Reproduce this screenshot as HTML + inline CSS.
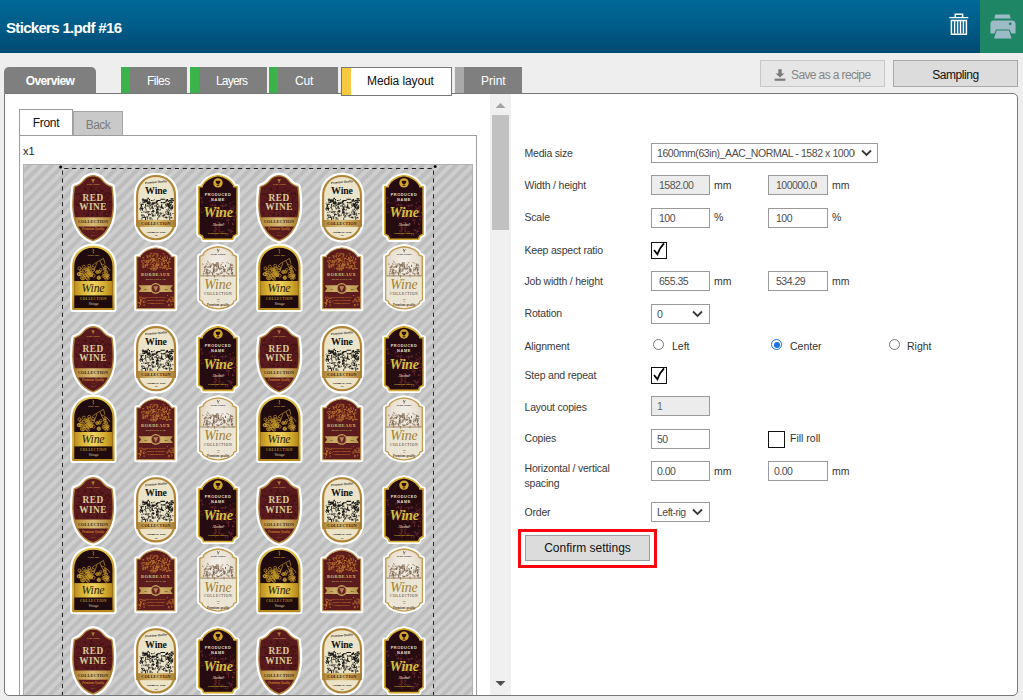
<!DOCTYPE html>
<html lang="en"><head><meta charset="utf-8"><title>Stickers 1.pdf #16</title>
<style>
*{box-sizing:border-box}
html,body{margin:0;padding:0}
body{width:1023px;height:700px;overflow:hidden;background:#eeeeee;font-family:"Liberation Sans",sans-serif;color:#1a1a1a;position:relative}
.abs{position:absolute}
#hdr{position:absolute;left:0;top:0;width:1023px;height:53px;background:linear-gradient(#006998 0%,#005d8a 45%,#004a72 100%)}
#title{position:absolute;left:6px;top:17.5px;font-size:15px;font-weight:bold;color:#fff;letter-spacing:-0.68px;white-space:nowrap;line-height:20px}
#printbtn{position:absolute;left:980px;top:0;width:43px;height:53px;background:#1e8664}
.tab{position:absolute;top:67px;height:26px;background:#7f7f7f;color:#fff;font-size:12px;line-height:28px;text-align:center;white-space:nowrap;letter-spacing:-0.6px}
.tab.tl{text-align:left;padding-left:26px}
.tab i{position:absolute;left:0;top:0;width:9px;height:100%;background:#3bb34a}
#panel{position:absolute;left:4px;top:93px;width:1014px;height:603px;background:#fff;border:1px solid #777;border-radius:0 5px 5px 5px;overflow:hidden}
.btn{position:absolute;border:1px solid #b4b4b4;background:#dcdcdc;font-size:12px;text-align:center;white-space:nowrap;color:#111}
.lbl{position:absolute;left:524.5px;font-size:10.5px;color:#3a3a3a;white-space:nowrap;line-height:14px;letter-spacing:-0.2px}
.inp{position:absolute;height:20px;width:59px;border:1px solid #9a9a9a;background:#fff;font-size:10.5px;color:#4d4d4d;line-height:18px;padding-left:7px;white-space:nowrap;overflow:hidden;letter-spacing:-0.5px}
.inp.dis{background:#ececec;color:#555}
.unit{position:absolute;font-size:10.5px;color:#333;line-height:14px}
.chk{position:absolute;width:16px;height:17px;border:1.5px solid #111;background:#fff}
.radio{position:absolute;width:11px;height:11px;border:1px solid #777;border-radius:50%;background:#fff}
.sheet{position:absolute;display:block}

</style></head>
<body>
<div id="hdr">
  <div id="title">Stickers 1.pdf #16</div>
  <svg class="abs" style="left:947px;top:11px" width="24" height="26" viewBox="0 0 24 26">
    <g fill="none" stroke="#fff" stroke-width="1.6">
      <path d="M2.3 6.6H21.3" stroke-width="1.3"/>
      <path d="M8.2 6.2V3.2H15.6V6.2" stroke-width="1.5"/>
      <path d="M4.4 9.4H19.4V23.2H4.4Z" stroke-width="1.5"/>
      <path d="M7.6 10V22.6M10.6 10V22.6M13.5 10V22.6M16.4 10V22.6" stroke-width="1.4"/>
    </g>
  </svg>
  <div id="printbtn">
    <svg class="abs" style="left:9px;top:13px" width="28" height="28" viewBox="0 0 28 28">
      <g fill="#9dbac7">
        <path d="M6.3 1.4H20.6L21.6 5.6H5.3Z"/>
        <path d="M4.6 7.4H22.6Q26.6 7.4 26.6 11.6V20.6H22.4L20.6 16.6H7L5.4 20.6H1.4V11.6Q1.4 7.4 4.6 7.4Z"/>
        <path d="M7.6 17.4H20L22.6 25.6H5Z"/>
      </g>
      <circle cx="21.2" cy="10.8" r="1.4" fill="#1e8664"/>
    </svg>
  </div>
</div>

<!-- top tabs -->
<div class="tab" style="left:4px;width:92px;border-radius:5px 5px 0 0;font-weight:bold;letter-spacing:-0.58px" id="t-over">Overview</div>
<div class="tab tl" style="left:121px;width:66px;letter-spacing:-0.55px"><i></i>Files</div>
<div class="tab tl" style="left:190px;width:77px;letter-spacing:-0.8px"><i></i>Layers</div>
<div class="tab tl" style="left:269px;width:69px;letter-spacing:-0.2px"><i></i>Cut</div>
<div class="tab tl" style="left:455px;width:67px;letter-spacing:0"><i style="background:#a9a9a9"></i>Print</div>

<div class="btn" style="left:760px;top:60px;width:125px;height:27px;line-height:29px;background:#e6e6e6;border-color:#c9c9c9;color:#858585;text-align:left;padding-left:30px;letter-spacing:-0.62px">
  <svg class="abs" style="left:13px;top:8px" width="12" height="13" viewBox="0 0 12 13"><path d="M4.3 0.3H7.7V4.4H10.4L6 8.6L1.6 4.4H4.3Z" fill="#7a7a7a"/><rect x="0.6" y="9.6" width="10.8" height="2.2" fill="#7a7a7a"/></svg>Save as a recipe</div>
<div class="btn" style="left:893px;top:60px;width:125px;height:27px;line-height:29px;border-color:#a8a8a8;letter-spacing:-0.45px">Sampling</div>

<div id="panel">
  <!-- coordinates inside panel are offset by (-5,-94) : use inner wrapper -->
  <div class="abs" style="left:-5px;top:-94px;width:1023px;height:700px">
    <!-- inner preview box -->
    <div class="abs" style="left:19px;top:135px;width:458px;height:600px;border:1px solid #9c9c9c;background:#fff"></div>
    <div class="abs" style="left:19px;top:109px;width:54px;height:26px;border:1px solid #9c9c9c;border-bottom:none;background:#fff;font-size:12px;line-height:27px;text-align:center;color:#111;letter-spacing:-0.3px">Front</div>
    <div class="abs" style="left:73px;top:111px;width:50px;height:24px;border:1px solid #a6a6a6;border-bottom:none;background:#c9c9c9;font-size:12px;line-height:27px;text-align:center;color:#7d7d7d;letter-spacing:-0.5px">Back</div>
    <div class="abs" style="left:23px;top:143px;font-size:11px;line-height:16px;color:#222">x1</div>
    <svg class="sheet" width="450" height="540" viewBox="0 0 450 540" style="left:23px;top:164px">
<defs><linearGradient id="g1" x1="0" y1="0" x2="1" y2="0"><stop offset="0" stop-color="#a87b2f"/><stop offset="0.18" stop-color="#c39a4c"/><stop offset="0.5" stop-color="#d8bb78"/><stop offset="0.82" stop-color="#c0964a"/><stop offset="1" stop-color="#a3762c"/></linearGradient><linearGradient id="g2" x1="0" y1="0" x2="1" y2="0"><stop offset="0" stop-color="#b98a1e"/><stop offset="0.2" stop-color="#d8b233"/><stop offset="0.5" stop-color="#efd462"/><stop offset="0.8" stop-color="#d4ac30"/><stop offset="1" stop-color="#b48519"/></linearGradient><linearGradient id="g3" x1="0" y1="0" x2="1" y2="0"><stop offset="0" stop-color="#b89349"/><stop offset="0.5" stop-color="#d8c07e"/><stop offset="1" stop-color="#b89349"/></linearGradient><linearGradient id="g4" x1="0" y1="0" x2="0" y2="1"><stop offset="0" stop-color="#e6c54a"/><stop offset="0.35" stop-color="#c99b22"/><stop offset="0.7" stop-color="#d8b233"/><stop offset="1" stop-color="#b98a1e"/></linearGradient><radialGradient id="beige" cx="0.5" cy="0.3" r="0.6"><stop offset="0" stop-color="#f4f0e9"/><stop offset="0.6" stop-color="#e9e1d3"/><stop offset="1" stop-color="#d9cdb9"/></radialGradient><pattern id="hatch" width="7.935" height="8" patternUnits="userSpaceOnUse" patternTransform="rotate(45) translate(-0.4 0)"><rect width="8" height="8" fill="#bdbdbd"/><rect width="3.97" height="8" fill="#cecece"/></pattern></defs>
<rect width="450" height="540" fill="url(#hatch)"/>
<path d="M0.5 540V0.5H449.5V540" fill="none" stroke="#b2b2b2" stroke-width="1"/>
<g transform="translate(46.3 9.3)"><path d="M23.8 2.3C19.5 2.5 16.3 4.6 14.4 7C12.6 9.4 9.5 12 5 13.4C4.1 19 3.6 26 3.6 32C3.6 48 10 63 23.8 67.4C37.6 63 44 48 44 32C44 26 43.5 19 42.6 13.4C38.1 12 35 9.4 33.2 7C31.3 4.6 28.1 2.5 23.8 2.3Z" fill="#fff" stroke="#fff" stroke-width="6.0" stroke-linejoin="round"/><path d="M23.8 2.3C19.5 2.5 16.3 4.6 14.4 7C12.6 9.4 9.5 12 5 13.4C4.1 19 3.6 26 3.6 32C3.6 48 10 63 23.8 67.4C37.6 63 44 48 44 32C44 26 43.5 19 42.6 13.4C38.1 12 35 9.4 33.2 7C31.3 4.6 28.1 2.5 23.8 2.3Z" fill="#581a1c" stroke="#b3853a" stroke-width="1.4" stroke-linejoin="round"/><path d="M22.1 30.2l-0.1 0M26.8 19.4l1.9 0M33.9 16.7l0 1M34.4 34.1l0 2.6M39.8 33l1.1 0M7 29.3l0 1.1M14.8 14.9l1.6 0M35.6 29.1l1.7 0M29.4 27.3l0 2.6M40.9 38.4l-0.7 -1M16.5 16l-0.4 1.3M19.8 41.8l-1.8 -1.1M37.9 27.6l-0.4 -1.6M28.2 36.6l0 1M18 42l-1.4 -0.9M10 15.7l-1.2 0.2M21.9 19.5l-1.3 0.5M10.5 26.2l0 1.3M40 37.3l0 2.4M13.8 25.4l0.5 -1.5M40.6 20.2l0 2.2M17.8 22.6l0 1M26.6 21l1.5 0M22.1 41.8l1.8 0M36.4 19.3l0 2.4M34.7 21.2l0 2.1M38.9 19.7l1.4 0.4M21 17l0 2.5M14.7 34.4l0 2.3M27.1 22.5l0 2.1M8.9 20.6l2.3 0M27.7 22.1l-1.1 -1.8M15.8 26.9l0 1.1M19.2 30.6l0 1.5M37.2 42.4l2 0M26.7 18.1l0 0.8M37.9 34.3l-1.7 0.5M23.1 35.2l0 2.6M9.1 29.8l1.5 0.9M30.8 37l-0.5 0.7M37.6 39.3l2.2 0M36.3 30.6l1.5 0M26.6 31.7l0 2M40.8 39.5l-0.4 0.9M26.5 26.8l-1.5 0.9M7.5 31.4l1.2 0M30.6 28.4l2.5 0M15.3 14.3l0 2M13.5 18.9l0.6 -0.2M37.3 23.5l1.2 0M21.4 37.4l1.4 -0.4M26.6 23.2l0 1.7M35.4 38.6l1.6 -0.8M12.3 27.1l0 1.2M20.8 32.1l1.4 0M35.4 42.5l0.9 0M7.6 39.3l0 2.1M26.2 23l-1.8 -1.3M22.2 14.7l-1 -1.3M8.1 32.2l1.9 0M29.1 37.4l0.7 -1.1M22.9 19.2l0 1.6M31.1 19.2l0 1.4M30.6 29.1l2.2 0M20.1 37l-1.5 1.6M31.4 17.8l1.9 0M37.9 24.9l2.4 0M34 41.4l2 0M13.6 34.9l0.5 0.8M13.9 40.1l1.7 0.1M33.8 23.3l1.3 -0.6M9.4 26.8l2.2 0M23.3 14.8l-1.6 1.1M12.5 23.7l-1.3 -1.3M24.3 35l0.7 1.6M23.5 41.5l0 1.2M24.7 22.4l0.5 0.1M35.6 30.2l0 1.5M35.7 40.1l0 2.3M39.9 29.2l1.2 0M25 28.6l0.8 0M39.9 29l2.2 0M25.9 28.2l0.9 0M25.1 26l1.5 -0.8M22.8 17.7l2.3 0M37.6 27.8l0 1.1M27.8 40.8l0 2.2M7.3 19.6l0 2M17.6 24.3l1 0M31.7 17.6l1.3 0M13.3 29.4l1.5 0M20.8 29.4l0 1.2M28.3 32.5l2.3 0M27.6 38.8l0 2.1M34.5 40.2l0 1.4M38.3 20.3l1.4 -1.3M14.8 35.1l0 1M35.2 26.2l-1.4 -0.4M30.1 14.5l0 2M37.9 42.1l0 1.7" stroke="#340e10" stroke-width="1.2" fill="none" opacity="0.8"/><path d="M4.6 43.9H43C42.4 47.2 41.4 50.3 40 53.1H7.6C6.2 50.3 5.2 47.2 4.6 43.9Z" fill="url(#g1)"/><text x="23.8" y="50" font-family="'Liberation Serif',serif" font-size="4.2" fill="#3b2412" text-anchor="middle" font-weight="bold" letter-spacing="0.2">COLLECTION</text><path d="M21.9 6H25.7L24.3 8.2V9.4H23.3V8.2Z" fill="#b8822f"/><text x="23.8" y="12.2" font-family="'Liberation Serif',serif" font-size="2.6" fill="#c08a3a" text-anchor="middle" font-weight="bold">Wine House</text><text x="23.8" y="14.2" font-family="'Liberation Serif',serif" font-size="1.8" fill="#c08a3a" text-anchor="middle">· · · ·</text><text x="23.8" y="27.3" font-family="'Liberation Serif',serif" font-size="9.3" fill="#dccb98" text-anchor="middle" font-weight="bold" letter-spacing="0.45">RED</text><text x="23.8" y="37" font-family="'Liberation Serif',serif" font-size="9.3" fill="#dccb98" text-anchor="middle" font-weight="bold" letter-spacing="0.45">WINE</text><text x="23.8" y="57" font-family="'Liberation Serif',serif" font-size="3.1" fill="#c77d2d" text-anchor="middle" font-weight="bold" font-style="italic">Premium Quality</text><text x="23.8" y="59.8" font-family="'Liberation Serif',serif" font-size="2.2" fill="#c77d2d" text-anchor="middle">• • •</text><text x="23.8" y="62.4" font-family="'Liberation Serif',serif" font-size="2.1" fill="#c77d2d" text-anchor="middle">2019</text></g>
<g transform="translate(110.8 9.2)"><path d="M3.3 22.8C3.3 10.6 11.4 2.8 22.25 2.8C33.1 2.8 41.2 10.6 41.2 22.8V46C41.2 58.2 33.1 66 22.25 66C11.4 66 3.3 58.2 3.3 46Z" fill="#fff" stroke="#fff" stroke-width="6.6" stroke-linejoin="round"/><path d="M3.3 22.8C3.3 10.6 11.4 2.8 22.25 2.8C33.1 2.8 41.2 10.6 41.2 22.8V46C41.2 58.2 33.1 66 22.25 66C11.4 66 3.3 58.2 3.3 46Z" fill="#ece4c8" stroke="#b08335" stroke-width="2.1" stroke-linejoin="round"/><path d="M11.1 39.2l1.9 0M12.8 41.3l0.1 0M13.5 25.1l0 2.2M7.9 41.4l0 1.4M7 45.5l1.7 0.5M6.7 31.8l1.1 0M37.4 32.6l0 2.8M9.8 44.1l2.1 0M17.1 35l0 0.9M34.5 29.8l-1.3 2.1M35.5 40.5l0.4 1M9.7 34.8l-1.3 1.9M35.2 33.4l0 1.9M18.5 45.5l0 0.9M8.7 39.8l0 0M24 40.4l0 2.3M24.2 37.8l0 1.2M17.2 44.1l0 2.2M15.8 27.1l0 2.8M31.6 32.7l2.4 0M35.6 44.7l3.2 0M37.7 37.2l0 -0.6M13.9 43l0 1M32.5 40.9l2.8 0M7.3 30.3l0 1.8M11.3 26.4l0 3M38.4 40.4l1.4 0M37.6 35.8l-2.1 -1.3M33.6 41.4l0.5 -0.3M25 42.5l0 2.1M14.8 40.8l0 2.4M37.5 25.5l2.3 0M34 37l0 1.8M37.6 43.7l0 1M8.7 25.5l1.1 0M34.6 38.5l0 2.1M16.4 35.2l0 1.2M11.7 32.8l0.2 -2M29.3 43l1.3 -2.2M21.1 26.3l-1.5 0.9M14 39.4l0 0.9M18.6 31.4l-0.9 0M23.9 44.5l0 2.2M22.6 40.1l-0.9 0.9M23.2 36.5l0 2.8M38.2 32.3l0 3.2M9.2 26.6l0 2.8M31 34.2l0.8 0M27.1 34.1l1.7 0M19 29.6l0 1.8M13.9 39.5l1 -0.2M13.5 32.9l2.3 0M37.8 26.8l2 0M29.6 43.3l0.6 1.2M27.9 42.7l2.4 0M13.8 43.9l0 2.3M33.1 44.9l-2.2 -0.8M16 33.1l0 2.1M8.3 31.2l1.1 -0.2M9.2 44.7l-1.3 -0.7M27 39l0 3.1M16.4 30.2l-1.6 0.8M12.3 37.3l0 1.7M37 34.6l2.3 0M15 28.6l0 1.5M11.9 44.8l0 2.7M36.8 39.5l0 2M6.9 37.5l-1.2 -2.2M23.8 26.9l0 1.9M35.5 32.6l0 2.7M33.1 35.9l0 1.3M19.1 36.4l0 2.7M33.8 44.1l-2.2 0.4M8.3 43.5l1.2 -1.4M7.6 41.8l2.3 0M21.3 41.5l0 1.4M17.4 31.1l2.9 0M8 26.4l2.4 0M11.9 30.6l0 0.9M22.1 39l1.2 0M9.1 44.2l1.8 0M28.7 40l1 0M33.2 29.4l0 1.6M23.4 37.9l0 2.5M22.1 28.3l1.4 1.8M28.3 29.5l1.8 0.1M35.9 45l0 3.1M36.9 41.4l0 1.6M26.1 37.5l0.7 -1.5M36.7 36l-1.3 2.2M24.1 41l1.7 -0.6M8.4 33.4l0 2.1M32.8 32.5l0 0.9M19.7 37l0 2.4M12.6 27.2l0.1 1.8M22.8 27.5l0 1.8M27 40.9l0.7 -1.1M20 32.8l1.4 0M23.6 34.5l0 2.8M25.2 41.5l1 2.2M18.2 33.1l0 2.4M25 36.9l-1.4 -1.2M30.1 41.7l0.9 0M18 42l1.9 0M18.6 37.9l2.5 0M34.5 40.5l0 1.4M31.7 41.3l-1.3 1.6M35.3 26.6l0 2.3M10.5 42.1l0 2.4M15.5 29.5l0 2M29.4 29.5l1.6 0M27.3 32.6l0 1.1M7.5 39.3l1.1 0M35 38.5l0 2.5M25.5 34.1l3.1 0M18.1 38.1l1.7 0M17.2 40.6l1.9 0M22.8 29.6l-2.2 0.6M20.8 29.6l2.2 0M8.5 35.1l0 2.7M16.5 31.8l0 0.9M11.8 28.1l2.8 0M13 27.3l1.1 0M19.1 40.7l0 2.5M23.6 26.8l0 2.2M8.8 29.2l2.8 0M23 38.7l0 1.5M16.2 43.8l0 2.7M6.7 35.3l1.2 0.4M11.7 44.1l0 3.1M31.5 39.8l1.2 0M17 38.7l1.7 0M32.4 26.1l0 1M16.4 41.3l-1.6 -0.9M9.3 38.6l1.4 0M18.1 42.8l2.5 0M26.6 34.8l1.7 0M12.2 35.2l0 1.6M11.8 43.8l1.3 0M6.7 29.4l-0.7 0.7M13.3 38.4l2.6 0M23.3 32.7l0 2.2M33.4 39.2l1.6 0M35.4 42.4l0 2.4M31.4 38.9l1.7 -1.1M38.9 31.7l0 3.1M11.2 33.1l1.5 0M14.5 41.4l2.6 0M32 43l1.4 2.1M22.3 39.5l3.1 0" stroke="#151515" stroke-width="0.8" fill="none"/><path d="M37.2 27l0 2.8M12 26.8l1.5 0M35 27.9l-0.7 0.4M36.4 32.7l0.8 -1.8M34.7 31.7l0 1.2M33.7 31.6l1.1 1.8M24.5 32.8l1.3 0M37.2 28.8l1.8 0.6M10.6 34.2l1.2 0M7.6 31.1l0 2.7M22.5 30.9l2.1 0M35.9 28.7l0 2M15.7 31.8l1.7 0M27.9 31l0 2.8M17.6 30l2.7 0M37 30.9l1 0M35.2 27.3l1.5 0M16.7 29.3l0 0.9M23.5 33.9l1.2 0M28.6 26l2.5 0M36 30.3l0 0.1M25.1 35.9l-0.1 0.9M27 29.2l1.3 0.4M36.7 25.7l2.1 0M17.1 27.3l1.7 0M14.8 25.9l-0.6 -1.5M13.1 28.2l-1.3 -0.9M9.2 30.4l0 1.5M30 35.2l-1.8 -0.5M33.7 25.8l0 1.8M18.5 33.4l-0.1 -1M13.5 28.3l0 2.1M11.1 34.8l0.9 0M22.3 31.8l0 1.8M7 33.5l0 2.1M38.1 34.4l0 1.9M10.6 29.1l1.2 -1.9M18.4 32.2l0 2.4M35.1 31.3l0 2.5M22.7 27.5l0 1.1M33.3 30.9l2.4 0M37.7 27.5l2.5 0M30.8 29.6l1.2 0M11.3 26l0 1.3M22.9 35.7l0 1.9M34.2 31.8l2.3 0M6.7 35.5l2.4 0M32.9 26.5l0 1.2M22.5 35.4l-0.3 0.5M30.1 29l1.7 0.9M35.4 33.9l1.4 0M15.2 28l0 2.7M15.7 25.8l0 1M20.5 29l0 1.8M19.5 29.2l-0.8 0.2M34.6 35.6l0 0.9M37 30.9l0 1.1M13.8 28.8l0 0.9M38.4 34.1l0 1.8M32.1 30.8l0 1.5M18.4 35.1l1.7 0M26.6 26l2.4 0M27.9 29.3l0 0.8M8.7 27.1l2.4 0M13.1 30.5l2.1 0M6.7 35.2l1.4 0M13.8 32.7l-0.6 -0.4M24.2 27.3l2.6 0M24.1 34.1l0 2.5M31.5 27.9l2.2 0" stroke="#151515" stroke-width="1.1" fill="none"/><rect x="2.4" y="46.7" width="39.7" height="7" fill="url(#g1)"/><text x="22.2" y="51.7" font-family="'Liberation Serif',serif" font-size="4.1" fill="#2e1c0c" text-anchor="middle" font-weight="bold" letter-spacing="0.15">COLLECTION</text><text x="22.2" y="9.8" font-family="'Liberation Serif',serif" font-size="3.1" fill="#1a1a1a" text-anchor="middle" font-weight="bold" font-style="italic" transform="rotate(-5 22 9)">Premium Quality</text><text x="22.2" y="21.1" font-family="'Liberation Serif',serif" font-size="9.8" fill="#111" text-anchor="middle" font-weight="bold" letter-spacing="-0.1">Wine</text><text x="22.2" y="59.4" font-family="'Liberation Serif',serif" font-size="2.9" fill="#1a1a1a" text-anchor="middle" font-weight="bold" font-style="italic">Vintage of Wine</text><text x="22.2" y="63.2" font-family="'Liberation Serif',serif" font-size="2.6" fill="#1a1a1a" text-anchor="middle" font-weight="bold">12</text></g>
<g transform="translate(172.8 8.9)"><path d="M22.2 2.6C15.4 3.6 9.4 7.4 6.4 12.4V13.8H3V61.2L6.6 63.4L7.6 66.4H36.8L37.8 63.4L41.4 61.2V13.8H38V12.4C35 7.4 29 3.6 22.2 2.6Z" fill="#fff" stroke="#fff" stroke-width="5.2" stroke-linejoin="round"/><path d="M22.2 2.6C15.4 3.6 9.4 7.4 6.4 12.4V13.8H3V61.2L6.6 63.4L7.6 66.4H36.8L37.8 63.4L41.4 61.2V13.8H38V12.4C35 7.4 29 3.6 22.2 2.6Z" fill="#260c11" stroke="#d6aa2c" stroke-width="1.6" stroke-linejoin="round"/><path d="M16.3 30.9l0 2.2M19.3 30.9l0 2.3M19.5 52.9l1.1 0M28.9 42.7l2.8 0M18.2 27.7l-0.4 -1.2M23.9 39.8l-1.1 -1.1M30 46.2l1.3 -0.6M20.9 56.3l-1.8 0.9M36.8 49.8l0 2.4M33.5 33.8l1.2 0M17 38.8l0 1.6M31.5 56.3l1.9 1.9M35 37.7l0 2M29.1 50.6l0 1.2M38.1 48l1 0M25.6 58.9l2.8 0M20.7 42.9l-0.2 1.1M29.5 31.1l0 2.8M18.9 33.8l0 2.2M36.5 43.6l2.4 0M22.7 40l2.1 0M16.9 30.9l0 2.3M32.6 61.1l-1 1M39.6 39.2l0 1.6M22.8 33.2l0 1M36.8 28.7l1.2 0M20.6 55.7l0 1.2M26.9 51.3l2.5 0M25.6 45.3l-0.2 0.9M27.2 31.7l0 2.4M33.9 60l2 0M20 56.9l0 1.6M19.4 40.3l0 1.7M33.1 46l0 2.4M33.6 56l0 2M37.5 36.1l0 2.4M24.7 41l-0.5 -1.2M21.1 39.1l1.5 0M34.5 29.3l0 2M27.5 44.5l-0.9 -1.2M16.8 43.9l0 1.7M16.1 27l0 2.3M23.2 58.9l1.6 0M34.7 35.2l2.5 0M29 38.2l0 1.9M20.5 40.1l2.7 0M32.2 45.2l-0.8 -0.4M32.3 46.4l0 1.6M35.8 35.5l-1.8 1.8M32.4 38.3l1.2 -1.7M22 44.2l-1.4 -1.8M23.5 28.6l1.9 0M26.6 31.9l0 2.4M26.6 43.8l2.2 0M37.6 55.9l-0.6 -1.3M18.2 57.1l0 1.9M37.8 38.3l0 1.6M38.7 50.9l-1.8 0.9M26.8 41.1l0.9 1.6M33.7 58.9l1.9 0M34.8 42.9l0 2M36.9 57.5l0 1.6M21.5 38.9l-0.3 -0.7M22.5 42.4l1.5 0M20.5 34.9l0 2.6M20.1 53.4l0 2.4M22.4 54.3l1 0M18.3 55l1.8 0M24.5 51.2l0.9 0M30.4 38l0.2 1.1M18.9 51.7l2.5 0M37.2 46.3l2.3 0M22.3 46.1l0.4 0.2M36.5 61.1l0 0.9M30.7 32.2l-0.1 0.1M35.6 57.4l0 1.7M20.3 43.1l0 2.6M24.5 40.6l1.3 -0.6M28 50.2l0 1.1M36.6 32.7l0.9 0.4M24.3 57l-1.7 1.6M31.3 37.1l0 1M35.5 56.7l0 1.2M17.8 41.5l0 0.9M23.1 55.7l0 1.6M28.3 32.7l0 0.9M19.5 61.1l0.8 1.6M23.8 35.7l0.4 1.7M24.6 41.5l1.5 -1.3M22.3 27.5l2.6 0M29.6 32.2l2.1 0M18.5 59l1.8 0M24.3 32.6l1.5 0M21.6 49.6l2.7 0M39.2 43.3l-0.5 -0.3M29.6 61.3l0 1.7M24.1 55.2l-0.1 -1.6M30.3 47.6l2.4 0M27.1 46.2l-1.9 -1M32.5 61.2l-0.9 1.9M22.7 42.8l0 2M25.4 51l-1.5 0.6M30.4 36.6l0 2.7M32.7 48.9l0 2.6M25.6 43.3l1.7 0M38.9 43.4l2.3 0M38.4 33l0 2.7M30.5 40l-1.5 -1M17.7 50.5l1.4 0M26.5 35.9l1 -0.5" stroke="#6d2a30" stroke-width="1" fill="none" opacity="0.9"/><path d="M6.3 27.4l0 2.6M13.4 35.5l0 1.8M19.3 32.4l1.5 -0.5M5 36.1l0 0.8M17.4 37.5l1.8 -1.2M6.4 25.9l-1.5 -1.3M5.3 24.8l0 1.5M7.8 29l-1.3 1.2M17.6 33.1l2.3 0M15 27.7l0 1.3M11.8 39.8l0.9 0M13.1 37l2.2 0M6.5 25l0.9 0M10.1 30.2l0 0.9M5.1 39.2l2.7 0M13.4 39.3l0.5 0.1M13.6 27.6l0 2.2M8.3 37.6l2 0M19 34.3l0 1.3M5 24.4l0.4 1.8M18.3 29.1l1.7 -0.2M6.4 29.1l0 1.5M6.4 35.4l-1.1 1.1M14.9 31.7l-0.5 1.3M5.6 39.4l0 0.8M20 35.5l2.3 0" stroke="#6d2a30" stroke-width="0.9" fill="none" opacity="0.8"/><circle cx="22.2" cy="10" r="4.7" fill="#d2a62a"/><path d="M19.9 7.8H24.5C24.5 10 23.6 10.9 22.6 11.2V12.6H23.6V13.2H20.8V12.6H21.8V11.2C20.8 10.9 19.9 10 19.9 7.8Z" fill="#260c11"/><text x="22.2" y="22.9" font-family="'Liberation Sans',sans-serif" font-size="3.9" fill="#e5dcc6" text-anchor="middle" font-weight="bold" letter-spacing="0.55">PRODUCED</text><text x="22.2" y="27.8" font-family="'Liberation Sans',sans-serif" font-size="3.9" fill="#e5dcc6" text-anchor="middle" font-weight="bold" letter-spacing="0.6">NAME</text><text x="22.4" y="44.6" font-family="'Liberation Serif',serif" font-size="14.2" fill="#d8bf3c" text-anchor="middle" font-weight="bold" font-style="italic" letter-spacing="-0.25">Wine</text><text x="22.2" y="53" font-family="'Liberation Serif',serif" font-size="3.4" fill="#d9cdbd" text-anchor="middle" font-weight="bold" font-style="italic">Alcohol</text><text x="22.2" y="60.7" font-family="'Liberation Serif',serif" font-size="2.8" fill="#d2a62a" text-anchor="middle" font-weight="bold">Premium quality</text></g>
<g transform="translate(47 79.8)"><path d="M3.2 23C3.2 10.4 12.4 2.9 23.35 2.9C34.3 2.9 43.5 10.4 43.5 23V65.2H3.2Z" fill="#fff" stroke="#fff" stroke-width="6.2" stroke-linejoin="round"/><path d="M3.2 23C3.2 10.4 12.4 2.9 23.35 2.9C34.3 2.9 43.5 10.4 43.5 23V65.2H3.2Z" fill="#1f0b0d" stroke="url(#g4)" stroke-width="2.1" stroke-linejoin="round"/><g fill="none" stroke="#c79a2a" stroke-width="0.65"><circle cx="13.9" cy="22.9" r="1.5"/><circle cx="17.8" cy="30.7" r="1.5"/><circle cx="17.3" cy="25.5" r="1.5"/><circle cx="20.8" cy="28.8" r="1.5"/><circle cx="21.7" cy="30.2" r="1.5"/><circle cx="22.9" cy="26.5" r="1.5"/><circle cx="19.3" cy="29.6" r="1.5"/><circle cx="20.7" cy="31.4" r="1.5"/><circle cx="8.9" cy="30.4" r="1.5"/><circle cx="18.6" cy="29.3" r="1.5"/><circle cx="23" cy="24.1" r="1.5"/><circle cx="9.3" cy="30.4" r="1.5"/><circle cx="14.4" cy="30.3" r="1.5"/><circle cx="16.1" cy="25.7" r="1.5"/><circle cx="15.4" cy="31.4" r="1.5"/><circle cx="14.8" cy="31.7" r="1.5"/><circle cx="17" cy="34" r="1.5"/><circle cx="19.3" cy="24.5" r="1.5"/><circle cx="23.6" cy="31.8" r="1.5"/><circle cx="8.6" cy="30.2" r="1.5"/><circle cx="19.3" cy="31.7" r="1.5"/><circle cx="18.4" cy="26.1" r="1.5"/><circle cx="11.2" cy="26.4" r="1.5"/><circle cx="20.8" cy="30.6" r="1.5"/><circle cx="14.5" cy="26.7" r="1.5"/><circle cx="10.6" cy="30.7" r="1.5"/><circle cx="11.9" cy="34.3" r="1.5"/><circle cx="12.9" cy="34.7" r="1.5"/><circle cx="13.9" cy="34" r="1.5"/><circle cx="21.1" cy="31.4" r="1.5"/><circle cx="11.1" cy="28.6" r="1.5"/><circle cx="9.5" cy="24.6" r="1.5"/><circle cx="11" cy="30.5" r="1.5"/><circle cx="18.2" cy="31.1" r="1.5"/><circle cx="17.3" cy="27.5" r="1.5"/><circle cx="18" cy="35" r="1.5"/><circle cx="18.9" cy="27.7" r="1.5"/><circle cx="19.2" cy="22" r="1.5"/><circle cx="36.9" cy="32.9" r="1.3"/><circle cx="27.1" cy="28.4" r="1.3"/><circle cx="34.9" cy="25.8" r="1.3"/><circle cx="36.2" cy="35.1" r="1.3"/><circle cx="28.3" cy="34" r="1.3"/><circle cx="35.2" cy="33.6" r="1.3"/><circle cx="34.8" cy="25" r="1.3"/><circle cx="38" cy="31.3" r="1.3"/><circle cx="29.6" cy="28.2" r="1.3"/><circle cx="34.9" cy="23.8" r="1.3"/><circle cx="28.7" cy="27.8" r="1.3"/><circle cx="27.1" cy="28.1" r="1.3"/><circle cx="36.7" cy="31.6" r="1.3"/><circle cx="28.9" cy="33.2" r="1.3"/><circle cx="30.8" cy="26" r="1.3"/><circle cx="28.6" cy="34.2" r="1.3"/><circle cx="29.3" cy="34.3" r="1.3"/><circle cx="35.8" cy="28.7" r="1.3"/><circle cx="37.5" cy="31.9" r="1.3"/><circle cx="33.9" cy="29.6" r="1.3"/><circle cx="36.3" cy="28" r="1.3"/><circle cx="34.5" cy="31.8" r="1.3"/><circle cx="33.3" cy="32.4" r="1.3"/><circle cx="38" cy="34" r="1.3"/><path d="M22 22C26 18 30 17 33.5 14.6M30 17L33 24M27 19L24 27M31 20C35 21 38 23 40 27M33.5 14.6L35 20"/></g><rect x="4.2" y="37.2" width="38.3" height="14.4" fill="url(#g2)"/><text x="23" y="48.4" font-family="'Liberation Serif',serif" font-size="11.8" fill="#33200a" text-anchor="middle" font-style="italic" letter-spacing="-0.2">Wine</text><path d="M22.6 5.2C23.9 5.6 23.9 7 22.9 7.6C23.9 8.2 23.7 9.2 23.2 9.6" fill="none" stroke="#c79a2a" stroke-width="0.8"/><text x="23.4" y="11.8" font-family="'Liberation Serif',serif" font-size="2.9" fill="#c79a2a" text-anchor="middle" font-weight="bold">Wine Bar</text><text x="23.4" y="56.5" font-family="'Liberation Serif',serif" font-size="3.3" fill="#b8922a" text-anchor="middle" font-weight="bold" letter-spacing="0.45">COLLECTION</text><text x="23.4" y="61.4" font-family="'Liberation Serif',serif" font-size="3.3" fill="#d8c9a0" text-anchor="middle" font-style="italic">Vintage</text></g>
<g transform="translate(111.1 79.8)"><path d="M21.65 4C15 4.8 9.4 7.6 6.2 12V13H2.6V64.9H40.7V13H37.1V12C33.9 7.6 28.3 4.8 21.65 4Z" fill="#fff" stroke="#fff" stroke-width="5.0" stroke-linejoin="round"/><path d="M21.65 4C15 4.8 9.4 7.6 6.2 12V13H2.6V64.9H40.7V13H37.1V12C33.9 7.6 28.3 4.8 21.65 4Z" fill="#5c1b1c" stroke="#c6a05a" stroke-width="1.1" stroke-linejoin="round"/><path d="M14.2 16.8l0 2.3M13.8 17.7l-0.4 1.7M28.5 17.6l1.9 0M17.6 24.9l2.6 0M14.6 16.4l-1.2 0.4M17.8 21.5l1 -1.1M29.4 15.8l-0.1 1.5M31.3 22l1.1 0M19.2 11.9l-1.4 1.5M23.2 11.5l0 1.6M10.5 21.1l2.6 0M31.4 21.5l1.6 0.5M22.9 17.2l1.5 1.2M19.4 10l1.8 0M23.5 22.7l0 2.1M24.2 12.1l-1.6 -0.1M22.7 18.4l0.2 1.4M15.7 16.5l0 2M19.4 21.5l0 1.6M26.4 19.7l0.2 0M27.7 19.6l-0.1 -1.8M29.8 13.2l1.8 1M18.8 22.7l0 1.4M23.8 19.3l1.8 0M19 20.8l0 1.9M32.5 12.1l0.9 0M29.5 14l0 1.3M34.4 21l0 2.5M9.1 16.5l2.2 0M11.2 22.1l0 2.1M34.3 18.3l0 2M19.8 20.6l-1.4 0.2M25.9 23.8l1.9 0M29.6 11.2l0.3 0.5M11.5 17.2l1.2 0M34.7 22.5l0.9 0M21.9 17.9l0.6 0.4M22.1 24.6l-0.5 1.1M34.9 16.6l0 0.9M30.6 11.8l0 1.1M20.9 21.9l0.8 0M15.8 10l2.2 0M15.9 10.8l0 1.7M29.4 19.8l1.5 0M7.9 16.9l2 0M7.5 16.6l0 1.8M19.8 14l0 2.5M21.1 10.3l2.2 0M21.4 23.2l0.7 -1.7M18.8 17l0 1.7M26.6 20.9l0.9 -0.7M25 16.8l-1.4 -1.2M28.1 20.5l0 2.2M29.8 19.2l0.9 0M13.8 21.2l-1.2 -1.7M17.3 24l0 2.5M30.1 22.4l0.6 -1.1M19.7 15.1l1.4 0M13.5 12.2l0 2.1M21 8.7l0 1.1M27.4 22.3l-0.8 -0.3M13.8 19.5l0 2.2M20.8 17.6l1.5 -0.8M28.4 13.1l0 2.3M12.6 13.2l1.3 -0.4M28 15.1l0 1.8M12.1 12l2 0M13.5 12.2l1.3 0M23.5 19.7l0 2.4M21.4 13.5l1.8 -0.2M15.1 12.2l1.1 1.4M29 14.1l0 2M17.9 17.5l1.2 0M7.6 20.8l1 -0.6M16.8 18.9l0 2.1M22.3 17.3l-1.4 -1.1M22.4 22.6l1.4 -1.1M16.3 12.7l0 1.1M11.5 22l2.5 0M25.4 21l0.2 -1M19 15.9l0 1.8M29.7 14l0 1M17.7 11.9l2.5 0M13.8 14.4l1.1 0M32.6 24.7l0 1.5M23.4 21.9l-1.1 1.6M24.6 20.7l0 0.9M21.1 24.7l0 2.6M20.4 24.1l0 1.8M12.1 20.8l1.9 0M18.4 22.9l-1.7 0.2M13.4 23.9l1.1 0.6M33.4 12.7l0 2.4M26.2 13.4l0.6 -1.8M34.6 20.7l-1.5 -1.8M9.3 21.1l0 1.3M16.6 15.3l0 1M22.2 9.7l1.3 0M28.5 9.8l1.9 0M33.7 18.6l1.3 -1.4M8.5 21.9l0 1.7M16.4 11.2l0 1.6M31.2 12.3l0 1.9M32.4 15.4l0 2.4M10.3 18.3l1.7 0M19.1 10.5l1.4 0.4M16 20.1l0 1M24.7 18l-0.3 -1.4M23.7 9.5l0 2.6M18 14.5l-1.5 1M28.5 23.6l0 1.6M18 8.8l0 1.1M9.1 20.1l-0.4 1.2M31.5 22.3l0 1.4M26.6 17.6l0 0.8M15.7 15.5l0 1.3M24.6 15.5l0.4 -0.3M19.7 22.5l1.8 -0.2M13 16.8l1.6 0M9.9 16.8l0 0.9" stroke="#b06a28" stroke-width="0.8" fill="none"/><path d="M35.4 14.6l-0.1 1.6M19.1 24.5l0 2.6M19.3 16.1l0 1.9M8.5 18.4l0 0.9M12.4 16.6l0 2.2M19.4 23.8l1.4 1.6M23.9 21.7l0.2 -1.3M22.3 20l0 1M12.8 22l0.6 -0.3M8.3 14l1.8 0M20.5 16l0 1.1M11.2 20.8l0 1.8M19.7 20.2l1 -1.3M34.9 23.7l-0.2 1.6M30.7 16.7l2.3 0M29 24.3l2 0M9.7 21.6l0 2.1M33.2 18.2l0 0.9M22.2 15.8l0.4 0M26.6 15.7l0.9 0M23.1 23l0 2M35.8 17.7l0 1.3M31.2 14.9l-0.9 0.9M32.8 23.7l0 1.8M16.5 24l0 1.1M19.1 15l0 2.1M16.8 16.1l-0.9 1.1M27 20.3l1.8 0M31.5 21.9l0 2M22 24.5l0 1.6M35.1 14.8l1.5 0.4M9.1 22.8l0 1.7M30.8 17.6l0 1M17.3 15.2l2.3 0M9.1 20l1 -0.9M22.6 21.8l2.6 0M33.4 25l0 0.8M24.3 20.6l0 1.2M29.9 23.1l0 1M28 18.8l0 2.5M16.9 14.9l1.5 0M25.9 22.7l0 1.6M33.2 19.5l1.5 1.1M26.1 15.3l-0.7 -0.7M21.9 20.1l0.1 1.5M29.9 21.4l0 1.9M21.8 22.6l0 2.2M27.8 16l-0.1 -0.2M17.1 18.4l1.5 -0.1M22.7 19.3l0 2.4M19.5 14.3l0 1.3M29.9 16l0 2.4M16.2 24.6l0 1M13.5 18.5l1.4 0M35 24.8l2.6 0M32.1 25.1l1 0M23.7 14.6l2.6 0M18.8 21.8l0.8 -0.4M22.1 15.4l0.5 -0.6M19.8 23.7l0 1.2" stroke="#b87230" stroke-width="1" fill="none"/><text x="21.6" y="32.4" font-family="'Liberation Serif',serif" font-size="4.4" fill="#d8c070" text-anchor="middle" font-weight="bold" letter-spacing="0.5">BORDEAUX</text><text x="21.6" y="36" font-family="'Liberation Serif',serif" font-size="2.7" fill="#d8c070" text-anchor="middle" font-weight="bold" letter-spacing="0.1">WINE CELLAR</text><path d="M4.5 41.4H38.8L36.4 44.8L38.8 48.2H4.5L6.9 44.8Z" fill="url(#g3)"/><text x="11.2" y="45.9" font-family="'Liberation Serif',serif" font-size="2.8" fill="#4a2210" text-anchor="middle" font-weight="bold">19</text><text x="32.1" y="45.9" font-family="'Liberation Serif',serif" font-size="2.8" fill="#4a2210" text-anchor="middle" font-weight="bold">85</text><circle cx="21.65" cy="44.6" r="5.4" fill="#c9a85e"/><circle cx="21.65" cy="44.6" r="4.1" fill="#6a2024" stroke="#8d6a2c" stroke-width="0.5"/><path d="M19.2 42.4H24.1L21.65 47.6Z" fill="#b7835a"/><text x="21.6" y="54" font-family="'Liberation Serif',serif" font-size="2.4" fill="#c77a2c" text-anchor="middle" font-weight="bold" letter-spacing="0.1">PREMIUM WINE</text><text x="21.6" y="57.4" font-family="'Liberation Serif',serif" font-size="2.7" fill="#c77a2c" text-anchor="middle" font-weight="bold" font-style="italic">Finest Selection</text><text x="21.6" y="60.6" font-family="'Liberation Serif',serif" font-size="2.7" fill="#c77a2c" text-anchor="middle" font-weight="bold" font-style="italic">Grand Reserve</text><path d="M9.2 61.3l1.8 0M11.5 57.4l0.7 1.1M4.9 53.8l0.8 -0.7M10.1 53.8l0 1.4M6.3 53.4l1.7 0M7 58.9l-1.4 -0.7M5.3 59l1.4 0M6.4 60.1l-0.2 1M6.3 55.6l-0.8 -1.1M4.8 59l-1.4 -0.1M7.5 55.4l0 1.3M5.6 61.6l0 1.5M9.3 58.8l1.5 0M11.5 53.8l0 1.2M10.1 56.4l0 0.9M5.5 58.8l0 1.4M6.4 55.2l0 2.1M9.2 57.1l0 2M8.8 53.4l0 2.1M7 56.3l0 2M6.4 57.9l0.1 -0.4M6.5 59.2l0 1.7M38.1 53.4l1.5 0M38.4 56l1.6 0M34.1 61.5l0.7 -1.4M38.6 57.7l1.6 0M35.1 61.7l0 1M38.7 54.7l0 1.4M37.9 55.9l0 1.2M33 52.2l0.7 -1.1M33.1 62.2l-0.2 0.2M38.6 54.5l0.8 0M34.9 54.4l0 1.4M34.5 61.3l0 0.8M37.5 61.6l-0.6 -0.4M37 52.8l0 1.5M33 56.8l0 2.1M35 55.6l0 1.2M37.1 60.3l1.3 0.3M34.1 56.4l0 1.3M34.9 61l0.9 0M35.3 55.5l1 0.3M36.2 56.4l0 1.9M37 57.8l1 0.6" stroke="#c77a2c" stroke-width="0.8" fill="none"/></g>
<g transform="translate(173.3 80)"><path d="M21.75 2.8C15.4 3.5 10.3 5.7 7.3 9.1V10.7L3.5 12.3V55.9L6.3 57.3V58.9C9.3 61.9 14.4 64.2 21.75 64.8C29.1 64.2 34.2 61.9 37.2 58.9V57.3L40 55.9V12.3L36.2 10.7V9.1C33.2 5.7 28.1 3.5 21.75 2.8Z" fill="#fff" stroke="#fff" stroke-width="5.4" stroke-linejoin="round"/><path d="M21.75 2.8C15.4 3.5 10.3 5.7 7.3 9.1V10.7L3.5 12.3V55.9L6.3 57.3V58.9C9.3 61.9 14.4 64.2 21.75 64.8C29.1 64.2 34.2 61.9 37.2 58.9V57.3L40 55.9V12.3L36.2 10.7V9.1C33.2 5.7 28.1 3.5 21.75 2.8Z" fill="url(#beige)" stroke="#c29a4c" stroke-width="1.4" stroke-linejoin="round"/><path d="M4.2 32.2H39.3V55.5L36.5 56.9V58.6C33.6 61.4 28.9 63.6 21.75 64.2C14.6 63.6 9.9 61.4 7 58.6V56.9L4.2 55.5Z" fill="#f0ebdc"/><path d="M5.6 32.4V56.4M7.2 32.4V56.4M8.8 32.4V56.4M10.4 32.4V61.6M12 32.4V61.6M13.6 32.4V61.6M15.2 32.4V61.6M16.8 32.4V61.6M18.4 32.4V61.6M20 32.4V61.6M21.6 32.4V61.6M23.2 32.4V61.6M24.8 32.4V61.6M26.4 32.4V61.6M28 32.4V61.6M29.6 32.4V61.6M31.2 32.4V61.6M32.8 32.4V61.6M34.4 32.4V61.6M36 32.4V56.4M37.6 32.4V56.4" stroke="#e2dac5" stroke-width="0.55" fill="none"/><path d="M4.2 31.9H39.3" stroke="#8b6a45" stroke-width="0.8"/><path d="M21.5 25.5l-0.8 -0.8M27.6 24.6l0 1.7M16.5 20.5l2.8 0M27.5 26.5l0 1.8M10.8 27.7l0 1.4M36.4 22.8l0.5 1.1M25.6 20.7l-1 -0.4M10.4 19.1l0 0.8M18.2 29.3l-0.3 -1.6M17 19.2l0 2.2M25.3 18.8l1.7 0M18.6 20.1l0 1M27.4 26.7l1.7 0M35.7 23.1l0 1.6M34.3 20.4l1.8 1.5M20.6 24.2l0.9 1.3M11.9 26.2l-1.1 -1.2M32.1 25.7l1.9 0M14.3 21.6l0 1.7M10.9 29.9l0.4 -1.7M24.7 20.4l0 1.1M21.6 19.4l0 1.3M20.7 30.3l2.5 0M28.6 25.2l0 0.9M10.5 25l0 2.8M12.5 20.1l2.1 0M8 22.8l2.6 0M30.2 29.6l2.9 0M20.8 22.1l0 2.6M26.3 26.3l0.6 -0.8M27.7 30.3l0 2.9M19.1 19.9l2.5 0M21.4 21.8l-1.7 0.7M17.5 26.2l1.4 0M12.7 28.9l1.4 0M24.5 28.2l0 1.8M11.1 28.2l0 2.6M23.5 25l1.4 0M20.2 20.6l0 2.1M25.1 22.6l2.5 0M30.1 18.4l1.2 0M31.5 25.9l2.1 0M22 21.1l-1.9 -2M15.4 20.2l0 2.2M18.3 30.8l0 2.9M36.4 25.4l-1.8 1.8M19.9 22.7l-0.4 -1.7M7.2 28.6l0 2.2M9.1 28.8l-0.6 1.2M33.9 21.4l3 0M35.5 25.6l0.8 0M31.8 30.5l1.3 0M10.3 26.5l2.1 0M32.1 18.9l0 1M15.9 19l0 1.3M31.3 25.1l0 1.9M11.1 31l0 1.3M23.9 29.8l1.1 0M25 27.9l0.6 -1M31.7 27.3l-1.3 1.4M21.1 21.2l0 1M33.8 20.2l1.4 0M14.1 22.9l-1.8 -0.5M16.4 24.6l2.7 0M25.8 29.3l1.3 -2M8.4 25.1l0 1.6M22.6 25.2l1.1 -1.2M23.9 24.5l2.4 0M28.3 27.5l0 1M24.3 21.6l0 1M8.7 24.1l0.5 -1M35.5 20.9l1 0M35.7 30.1l-0.5 -0.2M21.6 30.2l1.3 0M34.1 23.8l1.9 1.1M10.2 28.9l3 0M17.9 20.7l0 3M19.6 18.6l2.9 0M12.9 30.3l-1.2 -1.2M10.8 19.7l0 1.3M30.9 24l2.2 0M10.6 28.3l0 1.9M13.1 21.7l0 1.7M19.7 19.7l-0.7 0.7M12.2 18.9l-1.1 -2.1M34.8 23.8l0 2.2M16.7 30.8l0.7 0.8M16.2 30.1l-1.1 -1.9M8.3 25.1l2.6 0M34.1 23.3l1.7 0M34.1 21.2l0 1.2M34.6 20.6l-1.1 -0.5M11.9 30.9l0 1.2M27.6 24.6l0 1.8M33.7 20.3l1.3 0M21.6 23.3l1.5 0M6.8 21l-0.5 -1.6M9.7 27.7l0 2.9M22.4 19.2l0 2.2M36.6 30.1l0 2.1" stroke="#86705a" stroke-width="0.75" fill="none"/><path d="M34.3 22.1l-1 -0.1M33.4 23.7l1.1 0M35.3 29.5l0 1M20.9 25.2l-0.6 0.3M11.7 22.4l0 1.8M23.5 26.1l-0.7 -0.6M20.6 29.1l0 1.3M19.5 26.8l0 1.1M28.5 25.7l0.8 0M14.3 21.4l0 2.4M36.1 28.2l0 1.8M33.4 23.6l0 2.1M17.1 24.8l0 2.3M22.2 21.4l0 2M10.4 26.6l0 1.8M17.1 26.5l0 1.5M26.3 22.9l1.8 1.7M34.4 29.1l2.3 0M18.9 21.1l1.5 -0.9M18 22.6l-1.2 1.1M8.1 24.2l-0.1 -1.3M7.9 26.7l0 1.3M24.7 23.3l0 2.2M28.3 26.1l0 1.7M35.3 25.2l0 2.5M17.2 25.3l0 2.4M27.1 25.3l1.4 0M20.5 25.2l0 2.1M29.2 20.8l0 2.1M17.2 21.8l2.6 0M17.4 25.9l1.8 0M24.5 28.8l1.4 0.7M29.4 27.4l0.7 0.9M8.7 22l1.6 0M13.7 26.4l0 2.2M16.4 28.8l0 2.5M16.6 27.6l0 1.7M17.5 28.3l0.3 -1.4M22.4 22.7l0 2.1M23 29.6l-1.7 1.6" stroke="#7a634c" stroke-width="1" fill="none"/><path d="M20.9 4.8L21.8 7L23.1 5.2M21.8 7V8.4" fill="none" stroke="#5a4632" stroke-width="0.7"/><text x="21.8" y="10.9" font-family="'Liberation Serif',serif" font-size="2.9" fill="#3a3026" text-anchor="middle" font-weight="bold">Wine House</text><text x="21.8" y="13.4" font-family="'Liberation Serif',serif" font-size="2" fill="#5a4632" text-anchor="middle">· · ·</text><text x="21.6" y="45.4" font-family="'Liberation Serif',serif" font-size="13.8" fill="#a07f35" text-anchor="middle" font-style="italic" letter-spacing="-0.1">Wine</text><text x="21.8" y="51.1" font-family="'Liberation Serif',serif" font-size="3.8" fill="#4a3a2a" text-anchor="middle" letter-spacing="0.42">COLLECTION</text><text x="21.8" y="55.6" font-family="'Liberation Serif',serif" font-size="2.4" fill="#4a3a2a" text-anchor="middle" font-style="italic">vol</text><text x="21.8" y="57.8" font-family="'Liberation Serif',serif" font-size="2.2" fill="#4a3a2a" text-anchor="middle">12</text><text x="21.8" y="62.4" font-family="'Liberation Serif',serif" font-size="3.3" fill="#4b3b2a" text-anchor="middle" font-weight="bold" font-style="italic">Premium quality</text></g>
<g transform="translate(232.3 9.3)"><path d="M23.8 2.3C19.5 2.5 16.3 4.6 14.4 7C12.6 9.4 9.5 12 5 13.4C4.1 19 3.6 26 3.6 32C3.6 48 10 63 23.8 67.4C37.6 63 44 48 44 32C44 26 43.5 19 42.6 13.4C38.1 12 35 9.4 33.2 7C31.3 4.6 28.1 2.5 23.8 2.3Z" fill="#fff" stroke="#fff" stroke-width="6.0" stroke-linejoin="round"/><path d="M23.8 2.3C19.5 2.5 16.3 4.6 14.4 7C12.6 9.4 9.5 12 5 13.4C4.1 19 3.6 26 3.6 32C3.6 48 10 63 23.8 67.4C37.6 63 44 48 44 32C44 26 43.5 19 42.6 13.4C38.1 12 35 9.4 33.2 7C31.3 4.6 28.1 2.5 23.8 2.3Z" fill="#581a1c" stroke="#b3853a" stroke-width="1.4" stroke-linejoin="round"/><path d="M22.1 30.2l-0.1 0M26.8 19.4l1.9 0M33.9 16.7l0 1M34.4 34.1l0 2.6M39.8 33l1.1 0M7 29.3l0 1.1M14.8 14.9l1.6 0M35.6 29.1l1.7 0M29.4 27.3l0 2.6M40.9 38.4l-0.7 -1M16.5 16l-0.4 1.3M19.8 41.8l-1.8 -1.1M37.9 27.6l-0.4 -1.6M28.2 36.6l0 1M18 42l-1.4 -0.9M10 15.7l-1.2 0.2M21.9 19.5l-1.3 0.5M10.5 26.2l0 1.3M40 37.3l0 2.4M13.8 25.4l0.5 -1.5M40.6 20.2l0 2.2M17.8 22.6l0 1M26.6 21l1.5 0M22.1 41.8l1.8 0M36.4 19.3l0 2.4M34.7 21.2l0 2.1M38.9 19.7l1.4 0.4M21 17l0 2.5M14.7 34.4l0 2.3M27.1 22.5l0 2.1M8.9 20.6l2.3 0M27.7 22.1l-1.1 -1.8M15.8 26.9l0 1.1M19.2 30.6l0 1.5M37.2 42.4l2 0M26.7 18.1l0 0.8M37.9 34.3l-1.7 0.5M23.1 35.2l0 2.6M9.1 29.8l1.5 0.9M30.8 37l-0.5 0.7M37.6 39.3l2.2 0M36.3 30.6l1.5 0M26.6 31.7l0 2M40.8 39.5l-0.4 0.9M26.5 26.8l-1.5 0.9M7.5 31.4l1.2 0M30.6 28.4l2.5 0M15.3 14.3l0 2M13.5 18.9l0.6 -0.2M37.3 23.5l1.2 0M21.4 37.4l1.4 -0.4M26.6 23.2l0 1.7M35.4 38.6l1.6 -0.8M12.3 27.1l0 1.2M20.8 32.1l1.4 0M35.4 42.5l0.9 0M7.6 39.3l0 2.1M26.2 23l-1.8 -1.3M22.2 14.7l-1 -1.3M8.1 32.2l1.9 0M29.1 37.4l0.7 -1.1M22.9 19.2l0 1.6M31.1 19.2l0 1.4M30.6 29.1l2.2 0M20.1 37l-1.5 1.6M31.4 17.8l1.9 0M37.9 24.9l2.4 0M34 41.4l2 0M13.6 34.9l0.5 0.8M13.9 40.1l1.7 0.1M33.8 23.3l1.3 -0.6M9.4 26.8l2.2 0M23.3 14.8l-1.6 1.1M12.5 23.7l-1.3 -1.3M24.3 35l0.7 1.6M23.5 41.5l0 1.2M24.7 22.4l0.5 0.1M35.6 30.2l0 1.5M35.7 40.1l0 2.3M39.9 29.2l1.2 0M25 28.6l0.8 0M39.9 29l2.2 0M25.9 28.2l0.9 0M25.1 26l1.5 -0.8M22.8 17.7l2.3 0M37.6 27.8l0 1.1M27.8 40.8l0 2.2M7.3 19.6l0 2M17.6 24.3l1 0M31.7 17.6l1.3 0M13.3 29.4l1.5 0M20.8 29.4l0 1.2M28.3 32.5l2.3 0M27.6 38.8l0 2.1M34.5 40.2l0 1.4M38.3 20.3l1.4 -1.3M14.8 35.1l0 1M35.2 26.2l-1.4 -0.4M30.1 14.5l0 2M37.9 42.1l0 1.7" stroke="#340e10" stroke-width="1.2" fill="none" opacity="0.8"/><path d="M4.6 43.9H43C42.4 47.2 41.4 50.3 40 53.1H7.6C6.2 50.3 5.2 47.2 4.6 43.9Z" fill="url(#g1)"/><text x="23.8" y="50" font-family="'Liberation Serif',serif" font-size="4.2" fill="#3b2412" text-anchor="middle" font-weight="bold" letter-spacing="0.2">COLLECTION</text><path d="M21.9 6H25.7L24.3 8.2V9.4H23.3V8.2Z" fill="#b8822f"/><text x="23.8" y="12.2" font-family="'Liberation Serif',serif" font-size="2.6" fill="#c08a3a" text-anchor="middle" font-weight="bold">Wine House</text><text x="23.8" y="14.2" font-family="'Liberation Serif',serif" font-size="1.8" fill="#c08a3a" text-anchor="middle">· · · ·</text><text x="23.8" y="27.3" font-family="'Liberation Serif',serif" font-size="9.3" fill="#dccb98" text-anchor="middle" font-weight="bold" letter-spacing="0.45">RED</text><text x="23.8" y="37" font-family="'Liberation Serif',serif" font-size="9.3" fill="#dccb98" text-anchor="middle" font-weight="bold" letter-spacing="0.45">WINE</text><text x="23.8" y="57" font-family="'Liberation Serif',serif" font-size="3.1" fill="#c77d2d" text-anchor="middle" font-weight="bold" font-style="italic">Premium Quality</text><text x="23.8" y="59.8" font-family="'Liberation Serif',serif" font-size="2.2" fill="#c77d2d" text-anchor="middle">• • •</text><text x="23.8" y="62.4" font-family="'Liberation Serif',serif" font-size="2.1" fill="#c77d2d" text-anchor="middle">2019</text></g>
<g transform="translate(296.8 9.2)"><path d="M3.3 22.8C3.3 10.6 11.4 2.8 22.25 2.8C33.1 2.8 41.2 10.6 41.2 22.8V46C41.2 58.2 33.1 66 22.25 66C11.4 66 3.3 58.2 3.3 46Z" fill="#fff" stroke="#fff" stroke-width="6.6" stroke-linejoin="round"/><path d="M3.3 22.8C3.3 10.6 11.4 2.8 22.25 2.8C33.1 2.8 41.2 10.6 41.2 22.8V46C41.2 58.2 33.1 66 22.25 66C11.4 66 3.3 58.2 3.3 46Z" fill="#ece4c8" stroke="#b08335" stroke-width="2.1" stroke-linejoin="round"/><path d="M11.1 39.2l1.9 0M12.8 41.3l0.1 0M13.5 25.1l0 2.2M7.9 41.4l0 1.4M7 45.5l1.7 0.5M6.7 31.8l1.1 0M37.4 32.6l0 2.8M9.8 44.1l2.1 0M17.1 35l0 0.9M34.5 29.8l-1.3 2.1M35.5 40.5l0.4 1M9.7 34.8l-1.3 1.9M35.2 33.4l0 1.9M18.5 45.5l0 0.9M8.7 39.8l0 0M24 40.4l0 2.3M24.2 37.8l0 1.2M17.2 44.1l0 2.2M15.8 27.1l0 2.8M31.6 32.7l2.4 0M35.6 44.7l3.2 0M37.7 37.2l0 -0.6M13.9 43l0 1M32.5 40.9l2.8 0M7.3 30.3l0 1.8M11.3 26.4l0 3M38.4 40.4l1.4 0M37.6 35.8l-2.1 -1.3M33.6 41.4l0.5 -0.3M25 42.5l0 2.1M14.8 40.8l0 2.4M37.5 25.5l2.3 0M34 37l0 1.8M37.6 43.7l0 1M8.7 25.5l1.1 0M34.6 38.5l0 2.1M16.4 35.2l0 1.2M11.7 32.8l0.2 -2M29.3 43l1.3 -2.2M21.1 26.3l-1.5 0.9M14 39.4l0 0.9M18.6 31.4l-0.9 0M23.9 44.5l0 2.2M22.6 40.1l-0.9 0.9M23.2 36.5l0 2.8M38.2 32.3l0 3.2M9.2 26.6l0 2.8M31 34.2l0.8 0M27.1 34.1l1.7 0M19 29.6l0 1.8M13.9 39.5l1 -0.2M13.5 32.9l2.3 0M37.8 26.8l2 0M29.6 43.3l0.6 1.2M27.9 42.7l2.4 0M13.8 43.9l0 2.3M33.1 44.9l-2.2 -0.8M16 33.1l0 2.1M8.3 31.2l1.1 -0.2M9.2 44.7l-1.3 -0.7M27 39l0 3.1M16.4 30.2l-1.6 0.8M12.3 37.3l0 1.7M37 34.6l2.3 0M15 28.6l0 1.5M11.9 44.8l0 2.7M36.8 39.5l0 2M6.9 37.5l-1.2 -2.2M23.8 26.9l0 1.9M35.5 32.6l0 2.7M33.1 35.9l0 1.3M19.1 36.4l0 2.7M33.8 44.1l-2.2 0.4M8.3 43.5l1.2 -1.4M7.6 41.8l2.3 0M21.3 41.5l0 1.4M17.4 31.1l2.9 0M8 26.4l2.4 0M11.9 30.6l0 0.9M22.1 39l1.2 0M9.1 44.2l1.8 0M28.7 40l1 0M33.2 29.4l0 1.6M23.4 37.9l0 2.5M22.1 28.3l1.4 1.8M28.3 29.5l1.8 0.1M35.9 45l0 3.1M36.9 41.4l0 1.6M26.1 37.5l0.7 -1.5M36.7 36l-1.3 2.2M24.1 41l1.7 -0.6M8.4 33.4l0 2.1M32.8 32.5l0 0.9M19.7 37l0 2.4M12.6 27.2l0.1 1.8M22.8 27.5l0 1.8M27 40.9l0.7 -1.1M20 32.8l1.4 0M23.6 34.5l0 2.8M25.2 41.5l1 2.2M18.2 33.1l0 2.4M25 36.9l-1.4 -1.2M30.1 41.7l0.9 0M18 42l1.9 0M18.6 37.9l2.5 0M34.5 40.5l0 1.4M31.7 41.3l-1.3 1.6M35.3 26.6l0 2.3M10.5 42.1l0 2.4M15.5 29.5l0 2M29.4 29.5l1.6 0M27.3 32.6l0 1.1M7.5 39.3l1.1 0M35 38.5l0 2.5M25.5 34.1l3.1 0M18.1 38.1l1.7 0M17.2 40.6l1.9 0M22.8 29.6l-2.2 0.6M20.8 29.6l2.2 0M8.5 35.1l0 2.7M16.5 31.8l0 0.9M11.8 28.1l2.8 0M13 27.3l1.1 0M19.1 40.7l0 2.5M23.6 26.8l0 2.2M8.8 29.2l2.8 0M23 38.7l0 1.5M16.2 43.8l0 2.7M6.7 35.3l1.2 0.4M11.7 44.1l0 3.1M31.5 39.8l1.2 0M17 38.7l1.7 0M32.4 26.1l0 1M16.4 41.3l-1.6 -0.9M9.3 38.6l1.4 0M18.1 42.8l2.5 0M26.6 34.8l1.7 0M12.2 35.2l0 1.6M11.8 43.8l1.3 0M6.7 29.4l-0.7 0.7M13.3 38.4l2.6 0M23.3 32.7l0 2.2M33.4 39.2l1.6 0M35.4 42.4l0 2.4M31.4 38.9l1.7 -1.1M38.9 31.7l0 3.1M11.2 33.1l1.5 0M14.5 41.4l2.6 0M32 43l1.4 2.1M22.3 39.5l3.1 0" stroke="#151515" stroke-width="0.8" fill="none"/><path d="M37.2 27l0 2.8M12 26.8l1.5 0M35 27.9l-0.7 0.4M36.4 32.7l0.8 -1.8M34.7 31.7l0 1.2M33.7 31.6l1.1 1.8M24.5 32.8l1.3 0M37.2 28.8l1.8 0.6M10.6 34.2l1.2 0M7.6 31.1l0 2.7M22.5 30.9l2.1 0M35.9 28.7l0 2M15.7 31.8l1.7 0M27.9 31l0 2.8M17.6 30l2.7 0M37 30.9l1 0M35.2 27.3l1.5 0M16.7 29.3l0 0.9M23.5 33.9l1.2 0M28.6 26l2.5 0M36 30.3l0 0.1M25.1 35.9l-0.1 0.9M27 29.2l1.3 0.4M36.7 25.7l2.1 0M17.1 27.3l1.7 0M14.8 25.9l-0.6 -1.5M13.1 28.2l-1.3 -0.9M9.2 30.4l0 1.5M30 35.2l-1.8 -0.5M33.7 25.8l0 1.8M18.5 33.4l-0.1 -1M13.5 28.3l0 2.1M11.1 34.8l0.9 0M22.3 31.8l0 1.8M7 33.5l0 2.1M38.1 34.4l0 1.9M10.6 29.1l1.2 -1.9M18.4 32.2l0 2.4M35.1 31.3l0 2.5M22.7 27.5l0 1.1M33.3 30.9l2.4 0M37.7 27.5l2.5 0M30.8 29.6l1.2 0M11.3 26l0 1.3M22.9 35.7l0 1.9M34.2 31.8l2.3 0M6.7 35.5l2.4 0M32.9 26.5l0 1.2M22.5 35.4l-0.3 0.5M30.1 29l1.7 0.9M35.4 33.9l1.4 0M15.2 28l0 2.7M15.7 25.8l0 1M20.5 29l0 1.8M19.5 29.2l-0.8 0.2M34.6 35.6l0 0.9M37 30.9l0 1.1M13.8 28.8l0 0.9M38.4 34.1l0 1.8M32.1 30.8l0 1.5M18.4 35.1l1.7 0M26.6 26l2.4 0M27.9 29.3l0 0.8M8.7 27.1l2.4 0M13.1 30.5l2.1 0M6.7 35.2l1.4 0M13.8 32.7l-0.6 -0.4M24.2 27.3l2.6 0M24.1 34.1l0 2.5M31.5 27.9l2.2 0" stroke="#151515" stroke-width="1.1" fill="none"/><rect x="2.4" y="46.7" width="39.7" height="7" fill="url(#g1)"/><text x="22.2" y="51.7" font-family="'Liberation Serif',serif" font-size="4.1" fill="#2e1c0c" text-anchor="middle" font-weight="bold" letter-spacing="0.15">COLLECTION</text><text x="22.2" y="9.8" font-family="'Liberation Serif',serif" font-size="3.1" fill="#1a1a1a" text-anchor="middle" font-weight="bold" font-style="italic" transform="rotate(-5 22 9)">Premium Quality</text><text x="22.2" y="21.1" font-family="'Liberation Serif',serif" font-size="9.8" fill="#111" text-anchor="middle" font-weight="bold" letter-spacing="-0.1">Wine</text><text x="22.2" y="59.4" font-family="'Liberation Serif',serif" font-size="2.9" fill="#1a1a1a" text-anchor="middle" font-weight="bold" font-style="italic">Vintage of Wine</text><text x="22.2" y="63.2" font-family="'Liberation Serif',serif" font-size="2.6" fill="#1a1a1a" text-anchor="middle" font-weight="bold">12</text></g>
<g transform="translate(358.8 8.9)"><path d="M22.2 2.6C15.4 3.6 9.4 7.4 6.4 12.4V13.8H3V61.2L6.6 63.4L7.6 66.4H36.8L37.8 63.4L41.4 61.2V13.8H38V12.4C35 7.4 29 3.6 22.2 2.6Z" fill="#fff" stroke="#fff" stroke-width="5.2" stroke-linejoin="round"/><path d="M22.2 2.6C15.4 3.6 9.4 7.4 6.4 12.4V13.8H3V61.2L6.6 63.4L7.6 66.4H36.8L37.8 63.4L41.4 61.2V13.8H38V12.4C35 7.4 29 3.6 22.2 2.6Z" fill="#260c11" stroke="#d6aa2c" stroke-width="1.6" stroke-linejoin="round"/><path d="M16.3 30.9l0 2.2M19.3 30.9l0 2.3M19.5 52.9l1.1 0M28.9 42.7l2.8 0M18.2 27.7l-0.4 -1.2M23.9 39.8l-1.1 -1.1M30 46.2l1.3 -0.6M20.9 56.3l-1.8 0.9M36.8 49.8l0 2.4M33.5 33.8l1.2 0M17 38.8l0 1.6M31.5 56.3l1.9 1.9M35 37.7l0 2M29.1 50.6l0 1.2M38.1 48l1 0M25.6 58.9l2.8 0M20.7 42.9l-0.2 1.1M29.5 31.1l0 2.8M18.9 33.8l0 2.2M36.5 43.6l2.4 0M22.7 40l2.1 0M16.9 30.9l0 2.3M32.6 61.1l-1 1M39.6 39.2l0 1.6M22.8 33.2l0 1M36.8 28.7l1.2 0M20.6 55.7l0 1.2M26.9 51.3l2.5 0M25.6 45.3l-0.2 0.9M27.2 31.7l0 2.4M33.9 60l2 0M20 56.9l0 1.6M19.4 40.3l0 1.7M33.1 46l0 2.4M33.6 56l0 2M37.5 36.1l0 2.4M24.7 41l-0.5 -1.2M21.1 39.1l1.5 0M34.5 29.3l0 2M27.5 44.5l-0.9 -1.2M16.8 43.9l0 1.7M16.1 27l0 2.3M23.2 58.9l1.6 0M34.7 35.2l2.5 0M29 38.2l0 1.9M20.5 40.1l2.7 0M32.2 45.2l-0.8 -0.4M32.3 46.4l0 1.6M35.8 35.5l-1.8 1.8M32.4 38.3l1.2 -1.7M22 44.2l-1.4 -1.8M23.5 28.6l1.9 0M26.6 31.9l0 2.4M26.6 43.8l2.2 0M37.6 55.9l-0.6 -1.3M18.2 57.1l0 1.9M37.8 38.3l0 1.6M38.7 50.9l-1.8 0.9M26.8 41.1l0.9 1.6M33.7 58.9l1.9 0M34.8 42.9l0 2M36.9 57.5l0 1.6M21.5 38.9l-0.3 -0.7M22.5 42.4l1.5 0M20.5 34.9l0 2.6M20.1 53.4l0 2.4M22.4 54.3l1 0M18.3 55l1.8 0M24.5 51.2l0.9 0M30.4 38l0.2 1.1M18.9 51.7l2.5 0M37.2 46.3l2.3 0M22.3 46.1l0.4 0.2M36.5 61.1l0 0.9M30.7 32.2l-0.1 0.1M35.6 57.4l0 1.7M20.3 43.1l0 2.6M24.5 40.6l1.3 -0.6M28 50.2l0 1.1M36.6 32.7l0.9 0.4M24.3 57l-1.7 1.6M31.3 37.1l0 1M35.5 56.7l0 1.2M17.8 41.5l0 0.9M23.1 55.7l0 1.6M28.3 32.7l0 0.9M19.5 61.1l0.8 1.6M23.8 35.7l0.4 1.7M24.6 41.5l1.5 -1.3M22.3 27.5l2.6 0M29.6 32.2l2.1 0M18.5 59l1.8 0M24.3 32.6l1.5 0M21.6 49.6l2.7 0M39.2 43.3l-0.5 -0.3M29.6 61.3l0 1.7M24.1 55.2l-0.1 -1.6M30.3 47.6l2.4 0M27.1 46.2l-1.9 -1M32.5 61.2l-0.9 1.9M22.7 42.8l0 2M25.4 51l-1.5 0.6M30.4 36.6l0 2.7M32.7 48.9l0 2.6M25.6 43.3l1.7 0M38.9 43.4l2.3 0M38.4 33l0 2.7M30.5 40l-1.5 -1M17.7 50.5l1.4 0M26.5 35.9l1 -0.5" stroke="#6d2a30" stroke-width="1" fill="none" opacity="0.9"/><path d="M6.3 27.4l0 2.6M13.4 35.5l0 1.8M19.3 32.4l1.5 -0.5M5 36.1l0 0.8M17.4 37.5l1.8 -1.2M6.4 25.9l-1.5 -1.3M5.3 24.8l0 1.5M7.8 29l-1.3 1.2M17.6 33.1l2.3 0M15 27.7l0 1.3M11.8 39.8l0.9 0M13.1 37l2.2 0M6.5 25l0.9 0M10.1 30.2l0 0.9M5.1 39.2l2.7 0M13.4 39.3l0.5 0.1M13.6 27.6l0 2.2M8.3 37.6l2 0M19 34.3l0 1.3M5 24.4l0.4 1.8M18.3 29.1l1.7 -0.2M6.4 29.1l0 1.5M6.4 35.4l-1.1 1.1M14.9 31.7l-0.5 1.3M5.6 39.4l0 0.8M20 35.5l2.3 0" stroke="#6d2a30" stroke-width="0.9" fill="none" opacity="0.8"/><circle cx="22.2" cy="10" r="4.7" fill="#d2a62a"/><path d="M19.9 7.8H24.5C24.5 10 23.6 10.9 22.6 11.2V12.6H23.6V13.2H20.8V12.6H21.8V11.2C20.8 10.9 19.9 10 19.9 7.8Z" fill="#260c11"/><text x="22.2" y="22.9" font-family="'Liberation Sans',sans-serif" font-size="3.9" fill="#e5dcc6" text-anchor="middle" font-weight="bold" letter-spacing="0.55">PRODUCED</text><text x="22.2" y="27.8" font-family="'Liberation Sans',sans-serif" font-size="3.9" fill="#e5dcc6" text-anchor="middle" font-weight="bold" letter-spacing="0.6">NAME</text><text x="22.4" y="44.6" font-family="'Liberation Serif',serif" font-size="14.2" fill="#d8bf3c" text-anchor="middle" font-weight="bold" font-style="italic" letter-spacing="-0.25">Wine</text><text x="22.2" y="53" font-family="'Liberation Serif',serif" font-size="3.4" fill="#d9cdbd" text-anchor="middle" font-weight="bold" font-style="italic">Alcohol</text><text x="22.2" y="60.7" font-family="'Liberation Serif',serif" font-size="2.8" fill="#d2a62a" text-anchor="middle" font-weight="bold">Premium quality</text></g>
<g transform="translate(233 79.8)"><path d="M3.2 23C3.2 10.4 12.4 2.9 23.35 2.9C34.3 2.9 43.5 10.4 43.5 23V65.2H3.2Z" fill="#fff" stroke="#fff" stroke-width="6.2" stroke-linejoin="round"/><path d="M3.2 23C3.2 10.4 12.4 2.9 23.35 2.9C34.3 2.9 43.5 10.4 43.5 23V65.2H3.2Z" fill="#1f0b0d" stroke="url(#g4)" stroke-width="2.1" stroke-linejoin="round"/><g fill="none" stroke="#c79a2a" stroke-width="0.65"><circle cx="13.9" cy="22.9" r="1.5"/><circle cx="17.8" cy="30.7" r="1.5"/><circle cx="17.3" cy="25.5" r="1.5"/><circle cx="20.8" cy="28.8" r="1.5"/><circle cx="21.7" cy="30.2" r="1.5"/><circle cx="22.9" cy="26.5" r="1.5"/><circle cx="19.3" cy="29.6" r="1.5"/><circle cx="20.7" cy="31.4" r="1.5"/><circle cx="8.9" cy="30.4" r="1.5"/><circle cx="18.6" cy="29.3" r="1.5"/><circle cx="23" cy="24.1" r="1.5"/><circle cx="9.3" cy="30.4" r="1.5"/><circle cx="14.4" cy="30.3" r="1.5"/><circle cx="16.1" cy="25.7" r="1.5"/><circle cx="15.4" cy="31.4" r="1.5"/><circle cx="14.8" cy="31.7" r="1.5"/><circle cx="17" cy="34" r="1.5"/><circle cx="19.3" cy="24.5" r="1.5"/><circle cx="23.6" cy="31.8" r="1.5"/><circle cx="8.6" cy="30.2" r="1.5"/><circle cx="19.3" cy="31.7" r="1.5"/><circle cx="18.4" cy="26.1" r="1.5"/><circle cx="11.2" cy="26.4" r="1.5"/><circle cx="20.8" cy="30.6" r="1.5"/><circle cx="14.5" cy="26.7" r="1.5"/><circle cx="10.6" cy="30.7" r="1.5"/><circle cx="11.9" cy="34.3" r="1.5"/><circle cx="12.9" cy="34.7" r="1.5"/><circle cx="13.9" cy="34" r="1.5"/><circle cx="21.1" cy="31.4" r="1.5"/><circle cx="11.1" cy="28.6" r="1.5"/><circle cx="9.5" cy="24.6" r="1.5"/><circle cx="11" cy="30.5" r="1.5"/><circle cx="18.2" cy="31.1" r="1.5"/><circle cx="17.3" cy="27.5" r="1.5"/><circle cx="18" cy="35" r="1.5"/><circle cx="18.9" cy="27.7" r="1.5"/><circle cx="19.2" cy="22" r="1.5"/><circle cx="36.9" cy="32.9" r="1.3"/><circle cx="27.1" cy="28.4" r="1.3"/><circle cx="34.9" cy="25.8" r="1.3"/><circle cx="36.2" cy="35.1" r="1.3"/><circle cx="28.3" cy="34" r="1.3"/><circle cx="35.2" cy="33.6" r="1.3"/><circle cx="34.8" cy="25" r="1.3"/><circle cx="38" cy="31.3" r="1.3"/><circle cx="29.6" cy="28.2" r="1.3"/><circle cx="34.9" cy="23.8" r="1.3"/><circle cx="28.7" cy="27.8" r="1.3"/><circle cx="27.1" cy="28.1" r="1.3"/><circle cx="36.7" cy="31.6" r="1.3"/><circle cx="28.9" cy="33.2" r="1.3"/><circle cx="30.8" cy="26" r="1.3"/><circle cx="28.6" cy="34.2" r="1.3"/><circle cx="29.3" cy="34.3" r="1.3"/><circle cx="35.8" cy="28.7" r="1.3"/><circle cx="37.5" cy="31.9" r="1.3"/><circle cx="33.9" cy="29.6" r="1.3"/><circle cx="36.3" cy="28" r="1.3"/><circle cx="34.5" cy="31.8" r="1.3"/><circle cx="33.3" cy="32.4" r="1.3"/><circle cx="38" cy="34" r="1.3"/><path d="M22 22C26 18 30 17 33.5 14.6M30 17L33 24M27 19L24 27M31 20C35 21 38 23 40 27M33.5 14.6L35 20"/></g><rect x="4.2" y="37.2" width="38.3" height="14.4" fill="url(#g2)"/><text x="23" y="48.4" font-family="'Liberation Serif',serif" font-size="11.8" fill="#33200a" text-anchor="middle" font-style="italic" letter-spacing="-0.2">Wine</text><path d="M22.6 5.2C23.9 5.6 23.9 7 22.9 7.6C23.9 8.2 23.7 9.2 23.2 9.6" fill="none" stroke="#c79a2a" stroke-width="0.8"/><text x="23.4" y="11.8" font-family="'Liberation Serif',serif" font-size="2.9" fill="#c79a2a" text-anchor="middle" font-weight="bold">Wine Bar</text><text x="23.4" y="56.5" font-family="'Liberation Serif',serif" font-size="3.3" fill="#b8922a" text-anchor="middle" font-weight="bold" letter-spacing="0.45">COLLECTION</text><text x="23.4" y="61.4" font-family="'Liberation Serif',serif" font-size="3.3" fill="#d8c9a0" text-anchor="middle" font-style="italic">Vintage</text></g>
<g transform="translate(297.1 79.8)"><path d="M21.65 4C15 4.8 9.4 7.6 6.2 12V13H2.6V64.9H40.7V13H37.1V12C33.9 7.6 28.3 4.8 21.65 4Z" fill="#fff" stroke="#fff" stroke-width="5.0" stroke-linejoin="round"/><path d="M21.65 4C15 4.8 9.4 7.6 6.2 12V13H2.6V64.9H40.7V13H37.1V12C33.9 7.6 28.3 4.8 21.65 4Z" fill="#5c1b1c" stroke="#c6a05a" stroke-width="1.1" stroke-linejoin="round"/><path d="M14.2 16.8l0 2.3M13.8 17.7l-0.4 1.7M28.5 17.6l1.9 0M17.6 24.9l2.6 0M14.6 16.4l-1.2 0.4M17.8 21.5l1 -1.1M29.4 15.8l-0.1 1.5M31.3 22l1.1 0M19.2 11.9l-1.4 1.5M23.2 11.5l0 1.6M10.5 21.1l2.6 0M31.4 21.5l1.6 0.5M22.9 17.2l1.5 1.2M19.4 10l1.8 0M23.5 22.7l0 2.1M24.2 12.1l-1.6 -0.1M22.7 18.4l0.2 1.4M15.7 16.5l0 2M19.4 21.5l0 1.6M26.4 19.7l0.2 0M27.7 19.6l-0.1 -1.8M29.8 13.2l1.8 1M18.8 22.7l0 1.4M23.8 19.3l1.8 0M19 20.8l0 1.9M32.5 12.1l0.9 0M29.5 14l0 1.3M34.4 21l0 2.5M9.1 16.5l2.2 0M11.2 22.1l0 2.1M34.3 18.3l0 2M19.8 20.6l-1.4 0.2M25.9 23.8l1.9 0M29.6 11.2l0.3 0.5M11.5 17.2l1.2 0M34.7 22.5l0.9 0M21.9 17.9l0.6 0.4M22.1 24.6l-0.5 1.1M34.9 16.6l0 0.9M30.6 11.8l0 1.1M20.9 21.9l0.8 0M15.8 10l2.2 0M15.9 10.8l0 1.7M29.4 19.8l1.5 0M7.9 16.9l2 0M7.5 16.6l0 1.8M19.8 14l0 2.5M21.1 10.3l2.2 0M21.4 23.2l0.7 -1.7M18.8 17l0 1.7M26.6 20.9l0.9 -0.7M25 16.8l-1.4 -1.2M28.1 20.5l0 2.2M29.8 19.2l0.9 0M13.8 21.2l-1.2 -1.7M17.3 24l0 2.5M30.1 22.4l0.6 -1.1M19.7 15.1l1.4 0M13.5 12.2l0 2.1M21 8.7l0 1.1M27.4 22.3l-0.8 -0.3M13.8 19.5l0 2.2M20.8 17.6l1.5 -0.8M28.4 13.1l0 2.3M12.6 13.2l1.3 -0.4M28 15.1l0 1.8M12.1 12l2 0M13.5 12.2l1.3 0M23.5 19.7l0 2.4M21.4 13.5l1.8 -0.2M15.1 12.2l1.1 1.4M29 14.1l0 2M17.9 17.5l1.2 0M7.6 20.8l1 -0.6M16.8 18.9l0 2.1M22.3 17.3l-1.4 -1.1M22.4 22.6l1.4 -1.1M16.3 12.7l0 1.1M11.5 22l2.5 0M25.4 21l0.2 -1M19 15.9l0 1.8M29.7 14l0 1M17.7 11.9l2.5 0M13.8 14.4l1.1 0M32.6 24.7l0 1.5M23.4 21.9l-1.1 1.6M24.6 20.7l0 0.9M21.1 24.7l0 2.6M20.4 24.1l0 1.8M12.1 20.8l1.9 0M18.4 22.9l-1.7 0.2M13.4 23.9l1.1 0.6M33.4 12.7l0 2.4M26.2 13.4l0.6 -1.8M34.6 20.7l-1.5 -1.8M9.3 21.1l0 1.3M16.6 15.3l0 1M22.2 9.7l1.3 0M28.5 9.8l1.9 0M33.7 18.6l1.3 -1.4M8.5 21.9l0 1.7M16.4 11.2l0 1.6M31.2 12.3l0 1.9M32.4 15.4l0 2.4M10.3 18.3l1.7 0M19.1 10.5l1.4 0.4M16 20.1l0 1M24.7 18l-0.3 -1.4M23.7 9.5l0 2.6M18 14.5l-1.5 1M28.5 23.6l0 1.6M18 8.8l0 1.1M9.1 20.1l-0.4 1.2M31.5 22.3l0 1.4M26.6 17.6l0 0.8M15.7 15.5l0 1.3M24.6 15.5l0.4 -0.3M19.7 22.5l1.8 -0.2M13 16.8l1.6 0M9.9 16.8l0 0.9" stroke="#b06a28" stroke-width="0.8" fill="none"/><path d="M35.4 14.6l-0.1 1.6M19.1 24.5l0 2.6M19.3 16.1l0 1.9M8.5 18.4l0 0.9M12.4 16.6l0 2.2M19.4 23.8l1.4 1.6M23.9 21.7l0.2 -1.3M22.3 20l0 1M12.8 22l0.6 -0.3M8.3 14l1.8 0M20.5 16l0 1.1M11.2 20.8l0 1.8M19.7 20.2l1 -1.3M34.9 23.7l-0.2 1.6M30.7 16.7l2.3 0M29 24.3l2 0M9.7 21.6l0 2.1M33.2 18.2l0 0.9M22.2 15.8l0.4 0M26.6 15.7l0.9 0M23.1 23l0 2M35.8 17.7l0 1.3M31.2 14.9l-0.9 0.9M32.8 23.7l0 1.8M16.5 24l0 1.1M19.1 15l0 2.1M16.8 16.1l-0.9 1.1M27 20.3l1.8 0M31.5 21.9l0 2M22 24.5l0 1.6M35.1 14.8l1.5 0.4M9.1 22.8l0 1.7M30.8 17.6l0 1M17.3 15.2l2.3 0M9.1 20l1 -0.9M22.6 21.8l2.6 0M33.4 25l0 0.8M24.3 20.6l0 1.2M29.9 23.1l0 1M28 18.8l0 2.5M16.9 14.9l1.5 0M25.9 22.7l0 1.6M33.2 19.5l1.5 1.1M26.1 15.3l-0.7 -0.7M21.9 20.1l0.1 1.5M29.9 21.4l0 1.9M21.8 22.6l0 2.2M27.8 16l-0.1 -0.2M17.1 18.4l1.5 -0.1M22.7 19.3l0 2.4M19.5 14.3l0 1.3M29.9 16l0 2.4M16.2 24.6l0 1M13.5 18.5l1.4 0M35 24.8l2.6 0M32.1 25.1l1 0M23.7 14.6l2.6 0M18.8 21.8l0.8 -0.4M22.1 15.4l0.5 -0.6M19.8 23.7l0 1.2" stroke="#b87230" stroke-width="1" fill="none"/><text x="21.6" y="32.4" font-family="'Liberation Serif',serif" font-size="4.4" fill="#d8c070" text-anchor="middle" font-weight="bold" letter-spacing="0.5">BORDEAUX</text><text x="21.6" y="36" font-family="'Liberation Serif',serif" font-size="2.7" fill="#d8c070" text-anchor="middle" font-weight="bold" letter-spacing="0.1">WINE CELLAR</text><path d="M4.5 41.4H38.8L36.4 44.8L38.8 48.2H4.5L6.9 44.8Z" fill="url(#g3)"/><text x="11.2" y="45.9" font-family="'Liberation Serif',serif" font-size="2.8" fill="#4a2210" text-anchor="middle" font-weight="bold">19</text><text x="32.1" y="45.9" font-family="'Liberation Serif',serif" font-size="2.8" fill="#4a2210" text-anchor="middle" font-weight="bold">85</text><circle cx="21.65" cy="44.6" r="5.4" fill="#c9a85e"/><circle cx="21.65" cy="44.6" r="4.1" fill="#6a2024" stroke="#8d6a2c" stroke-width="0.5"/><path d="M19.2 42.4H24.1L21.65 47.6Z" fill="#b7835a"/><text x="21.6" y="54" font-family="'Liberation Serif',serif" font-size="2.4" fill="#c77a2c" text-anchor="middle" font-weight="bold" letter-spacing="0.1">PREMIUM WINE</text><text x="21.6" y="57.4" font-family="'Liberation Serif',serif" font-size="2.7" fill="#c77a2c" text-anchor="middle" font-weight="bold" font-style="italic">Finest Selection</text><text x="21.6" y="60.6" font-family="'Liberation Serif',serif" font-size="2.7" fill="#c77a2c" text-anchor="middle" font-weight="bold" font-style="italic">Grand Reserve</text><path d="M9.2 61.3l1.8 0M11.5 57.4l0.7 1.1M4.9 53.8l0.8 -0.7M10.1 53.8l0 1.4M6.3 53.4l1.7 0M7 58.9l-1.4 -0.7M5.3 59l1.4 0M6.4 60.1l-0.2 1M6.3 55.6l-0.8 -1.1M4.8 59l-1.4 -0.1M7.5 55.4l0 1.3M5.6 61.6l0 1.5M9.3 58.8l1.5 0M11.5 53.8l0 1.2M10.1 56.4l0 0.9M5.5 58.8l0 1.4M6.4 55.2l0 2.1M9.2 57.1l0 2M8.8 53.4l0 2.1M7 56.3l0 2M6.4 57.9l0.1 -0.4M6.5 59.2l0 1.7M38.1 53.4l1.5 0M38.4 56l1.6 0M34.1 61.5l0.7 -1.4M38.6 57.7l1.6 0M35.1 61.7l0 1M38.7 54.7l0 1.4M37.9 55.9l0 1.2M33 52.2l0.7 -1.1M33.1 62.2l-0.2 0.2M38.6 54.5l0.8 0M34.9 54.4l0 1.4M34.5 61.3l0 0.8M37.5 61.6l-0.6 -0.4M37 52.8l0 1.5M33 56.8l0 2.1M35 55.6l0 1.2M37.1 60.3l1.3 0.3M34.1 56.4l0 1.3M34.9 61l0.9 0M35.3 55.5l1 0.3M36.2 56.4l0 1.9M37 57.8l1 0.6" stroke="#c77a2c" stroke-width="0.8" fill="none"/></g>
<g transform="translate(359.3 80)"><path d="M21.75 2.8C15.4 3.5 10.3 5.7 7.3 9.1V10.7L3.5 12.3V55.9L6.3 57.3V58.9C9.3 61.9 14.4 64.2 21.75 64.8C29.1 64.2 34.2 61.9 37.2 58.9V57.3L40 55.9V12.3L36.2 10.7V9.1C33.2 5.7 28.1 3.5 21.75 2.8Z" fill="#fff" stroke="#fff" stroke-width="5.4" stroke-linejoin="round"/><path d="M21.75 2.8C15.4 3.5 10.3 5.7 7.3 9.1V10.7L3.5 12.3V55.9L6.3 57.3V58.9C9.3 61.9 14.4 64.2 21.75 64.8C29.1 64.2 34.2 61.9 37.2 58.9V57.3L40 55.9V12.3L36.2 10.7V9.1C33.2 5.7 28.1 3.5 21.75 2.8Z" fill="url(#beige)" stroke="#c29a4c" stroke-width="1.4" stroke-linejoin="round"/><path d="M4.2 32.2H39.3V55.5L36.5 56.9V58.6C33.6 61.4 28.9 63.6 21.75 64.2C14.6 63.6 9.9 61.4 7 58.6V56.9L4.2 55.5Z" fill="#f0ebdc"/><path d="M5.6 32.4V56.4M7.2 32.4V56.4M8.8 32.4V56.4M10.4 32.4V61.6M12 32.4V61.6M13.6 32.4V61.6M15.2 32.4V61.6M16.8 32.4V61.6M18.4 32.4V61.6M20 32.4V61.6M21.6 32.4V61.6M23.2 32.4V61.6M24.8 32.4V61.6M26.4 32.4V61.6M28 32.4V61.6M29.6 32.4V61.6M31.2 32.4V61.6M32.8 32.4V61.6M34.4 32.4V61.6M36 32.4V56.4M37.6 32.4V56.4" stroke="#e2dac5" stroke-width="0.55" fill="none"/><path d="M4.2 31.9H39.3" stroke="#8b6a45" stroke-width="0.8"/><path d="M21.5 25.5l-0.8 -0.8M27.6 24.6l0 1.7M16.5 20.5l2.8 0M27.5 26.5l0 1.8M10.8 27.7l0 1.4M36.4 22.8l0.5 1.1M25.6 20.7l-1 -0.4M10.4 19.1l0 0.8M18.2 29.3l-0.3 -1.6M17 19.2l0 2.2M25.3 18.8l1.7 0M18.6 20.1l0 1M27.4 26.7l1.7 0M35.7 23.1l0 1.6M34.3 20.4l1.8 1.5M20.6 24.2l0.9 1.3M11.9 26.2l-1.1 -1.2M32.1 25.7l1.9 0M14.3 21.6l0 1.7M10.9 29.9l0.4 -1.7M24.7 20.4l0 1.1M21.6 19.4l0 1.3M20.7 30.3l2.5 0M28.6 25.2l0 0.9M10.5 25l0 2.8M12.5 20.1l2.1 0M8 22.8l2.6 0M30.2 29.6l2.9 0M20.8 22.1l0 2.6M26.3 26.3l0.6 -0.8M27.7 30.3l0 2.9M19.1 19.9l2.5 0M21.4 21.8l-1.7 0.7M17.5 26.2l1.4 0M12.7 28.9l1.4 0M24.5 28.2l0 1.8M11.1 28.2l0 2.6M23.5 25l1.4 0M20.2 20.6l0 2.1M25.1 22.6l2.5 0M30.1 18.4l1.2 0M31.5 25.9l2.1 0M22 21.1l-1.9 -2M15.4 20.2l0 2.2M18.3 30.8l0 2.9M36.4 25.4l-1.8 1.8M19.9 22.7l-0.4 -1.7M7.2 28.6l0 2.2M9.1 28.8l-0.6 1.2M33.9 21.4l3 0M35.5 25.6l0.8 0M31.8 30.5l1.3 0M10.3 26.5l2.1 0M32.1 18.9l0 1M15.9 19l0 1.3M31.3 25.1l0 1.9M11.1 31l0 1.3M23.9 29.8l1.1 0M25 27.9l0.6 -1M31.7 27.3l-1.3 1.4M21.1 21.2l0 1M33.8 20.2l1.4 0M14.1 22.9l-1.8 -0.5M16.4 24.6l2.7 0M25.8 29.3l1.3 -2M8.4 25.1l0 1.6M22.6 25.2l1.1 -1.2M23.9 24.5l2.4 0M28.3 27.5l0 1M24.3 21.6l0 1M8.7 24.1l0.5 -1M35.5 20.9l1 0M35.7 30.1l-0.5 -0.2M21.6 30.2l1.3 0M34.1 23.8l1.9 1.1M10.2 28.9l3 0M17.9 20.7l0 3M19.6 18.6l2.9 0M12.9 30.3l-1.2 -1.2M10.8 19.7l0 1.3M30.9 24l2.2 0M10.6 28.3l0 1.9M13.1 21.7l0 1.7M19.7 19.7l-0.7 0.7M12.2 18.9l-1.1 -2.1M34.8 23.8l0 2.2M16.7 30.8l0.7 0.8M16.2 30.1l-1.1 -1.9M8.3 25.1l2.6 0M34.1 23.3l1.7 0M34.1 21.2l0 1.2M34.6 20.6l-1.1 -0.5M11.9 30.9l0 1.2M27.6 24.6l0 1.8M33.7 20.3l1.3 0M21.6 23.3l1.5 0M6.8 21l-0.5 -1.6M9.7 27.7l0 2.9M22.4 19.2l0 2.2M36.6 30.1l0 2.1" stroke="#86705a" stroke-width="0.75" fill="none"/><path d="M34.3 22.1l-1 -0.1M33.4 23.7l1.1 0M35.3 29.5l0 1M20.9 25.2l-0.6 0.3M11.7 22.4l0 1.8M23.5 26.1l-0.7 -0.6M20.6 29.1l0 1.3M19.5 26.8l0 1.1M28.5 25.7l0.8 0M14.3 21.4l0 2.4M36.1 28.2l0 1.8M33.4 23.6l0 2.1M17.1 24.8l0 2.3M22.2 21.4l0 2M10.4 26.6l0 1.8M17.1 26.5l0 1.5M26.3 22.9l1.8 1.7M34.4 29.1l2.3 0M18.9 21.1l1.5 -0.9M18 22.6l-1.2 1.1M8.1 24.2l-0.1 -1.3M7.9 26.7l0 1.3M24.7 23.3l0 2.2M28.3 26.1l0 1.7M35.3 25.2l0 2.5M17.2 25.3l0 2.4M27.1 25.3l1.4 0M20.5 25.2l0 2.1M29.2 20.8l0 2.1M17.2 21.8l2.6 0M17.4 25.9l1.8 0M24.5 28.8l1.4 0.7M29.4 27.4l0.7 0.9M8.7 22l1.6 0M13.7 26.4l0 2.2M16.4 28.8l0 2.5M16.6 27.6l0 1.7M17.5 28.3l0.3 -1.4M22.4 22.7l0 2.1M23 29.6l-1.7 1.6" stroke="#7a634c" stroke-width="1" fill="none"/><path d="M20.9 4.8L21.8 7L23.1 5.2M21.8 7V8.4" fill="none" stroke="#5a4632" stroke-width="0.7"/><text x="21.8" y="10.9" font-family="'Liberation Serif',serif" font-size="2.9" fill="#3a3026" text-anchor="middle" font-weight="bold">Wine House</text><text x="21.8" y="13.4" font-family="'Liberation Serif',serif" font-size="2" fill="#5a4632" text-anchor="middle">· · ·</text><text x="21.6" y="45.4" font-family="'Liberation Serif',serif" font-size="13.8" fill="#a07f35" text-anchor="middle" font-style="italic" letter-spacing="-0.1">Wine</text><text x="21.8" y="51.1" font-family="'Liberation Serif',serif" font-size="3.8" fill="#4a3a2a" text-anchor="middle" letter-spacing="0.42">COLLECTION</text><text x="21.8" y="55.6" font-family="'Liberation Serif',serif" font-size="2.4" fill="#4a3a2a" text-anchor="middle" font-style="italic">vol</text><text x="21.8" y="57.8" font-family="'Liberation Serif',serif" font-size="2.2" fill="#4a3a2a" text-anchor="middle">12</text><text x="21.8" y="62.4" font-family="'Liberation Serif',serif" font-size="3.3" fill="#4b3b2a" text-anchor="middle" font-weight="bold" font-style="italic">Premium quality</text></g>
<g transform="translate(46.3 160.4)"><path d="M23.8 2.3C19.5 2.5 16.3 4.6 14.4 7C12.6 9.4 9.5 12 5 13.4C4.1 19 3.6 26 3.6 32C3.6 48 10 63 23.8 67.4C37.6 63 44 48 44 32C44 26 43.5 19 42.6 13.4C38.1 12 35 9.4 33.2 7C31.3 4.6 28.1 2.5 23.8 2.3Z" fill="#fff" stroke="#fff" stroke-width="6.0" stroke-linejoin="round"/><path d="M23.8 2.3C19.5 2.5 16.3 4.6 14.4 7C12.6 9.4 9.5 12 5 13.4C4.1 19 3.6 26 3.6 32C3.6 48 10 63 23.8 67.4C37.6 63 44 48 44 32C44 26 43.5 19 42.6 13.4C38.1 12 35 9.4 33.2 7C31.3 4.6 28.1 2.5 23.8 2.3Z" fill="#581a1c" stroke="#b3853a" stroke-width="1.4" stroke-linejoin="round"/><path d="M22.1 30.2l-0.1 0M26.8 19.4l1.9 0M33.9 16.7l0 1M34.4 34.1l0 2.6M39.8 33l1.1 0M7 29.3l0 1.1M14.8 14.9l1.6 0M35.6 29.1l1.7 0M29.4 27.3l0 2.6M40.9 38.4l-0.7 -1M16.5 16l-0.4 1.3M19.8 41.8l-1.8 -1.1M37.9 27.6l-0.4 -1.6M28.2 36.6l0 1M18 42l-1.4 -0.9M10 15.7l-1.2 0.2M21.9 19.5l-1.3 0.5M10.5 26.2l0 1.3M40 37.3l0 2.4M13.8 25.4l0.5 -1.5M40.6 20.2l0 2.2M17.8 22.6l0 1M26.6 21l1.5 0M22.1 41.8l1.8 0M36.4 19.3l0 2.4M34.7 21.2l0 2.1M38.9 19.7l1.4 0.4M21 17l0 2.5M14.7 34.4l0 2.3M27.1 22.5l0 2.1M8.9 20.6l2.3 0M27.7 22.1l-1.1 -1.8M15.8 26.9l0 1.1M19.2 30.6l0 1.5M37.2 42.4l2 0M26.7 18.1l0 0.8M37.9 34.3l-1.7 0.5M23.1 35.2l0 2.6M9.1 29.8l1.5 0.9M30.8 37l-0.5 0.7M37.6 39.3l2.2 0M36.3 30.6l1.5 0M26.6 31.7l0 2M40.8 39.5l-0.4 0.9M26.5 26.8l-1.5 0.9M7.5 31.4l1.2 0M30.6 28.4l2.5 0M15.3 14.3l0 2M13.5 18.9l0.6 -0.2M37.3 23.5l1.2 0M21.4 37.4l1.4 -0.4M26.6 23.2l0 1.7M35.4 38.6l1.6 -0.8M12.3 27.1l0 1.2M20.8 32.1l1.4 0M35.4 42.5l0.9 0M7.6 39.3l0 2.1M26.2 23l-1.8 -1.3M22.2 14.7l-1 -1.3M8.1 32.2l1.9 0M29.1 37.4l0.7 -1.1M22.9 19.2l0 1.6M31.1 19.2l0 1.4M30.6 29.1l2.2 0M20.1 37l-1.5 1.6M31.4 17.8l1.9 0M37.9 24.9l2.4 0M34 41.4l2 0M13.6 34.9l0.5 0.8M13.9 40.1l1.7 0.1M33.8 23.3l1.3 -0.6M9.4 26.8l2.2 0M23.3 14.8l-1.6 1.1M12.5 23.7l-1.3 -1.3M24.3 35l0.7 1.6M23.5 41.5l0 1.2M24.7 22.4l0.5 0.1M35.6 30.2l0 1.5M35.7 40.1l0 2.3M39.9 29.2l1.2 0M25 28.6l0.8 0M39.9 29l2.2 0M25.9 28.2l0.9 0M25.1 26l1.5 -0.8M22.8 17.7l2.3 0M37.6 27.8l0 1.1M27.8 40.8l0 2.2M7.3 19.6l0 2M17.6 24.3l1 0M31.7 17.6l1.3 0M13.3 29.4l1.5 0M20.8 29.4l0 1.2M28.3 32.5l2.3 0M27.6 38.8l0 2.1M34.5 40.2l0 1.4M38.3 20.3l1.4 -1.3M14.8 35.1l0 1M35.2 26.2l-1.4 -0.4M30.1 14.5l0 2M37.9 42.1l0 1.7" stroke="#340e10" stroke-width="1.2" fill="none" opacity="0.8"/><path d="M4.6 43.9H43C42.4 47.2 41.4 50.3 40 53.1H7.6C6.2 50.3 5.2 47.2 4.6 43.9Z" fill="url(#g1)"/><text x="23.8" y="50" font-family="'Liberation Serif',serif" font-size="4.2" fill="#3b2412" text-anchor="middle" font-weight="bold" letter-spacing="0.2">COLLECTION</text><path d="M21.9 6H25.7L24.3 8.2V9.4H23.3V8.2Z" fill="#b8822f"/><text x="23.8" y="12.2" font-family="'Liberation Serif',serif" font-size="2.6" fill="#c08a3a" text-anchor="middle" font-weight="bold">Wine House</text><text x="23.8" y="14.2" font-family="'Liberation Serif',serif" font-size="1.8" fill="#c08a3a" text-anchor="middle">· · · ·</text><text x="23.8" y="27.3" font-family="'Liberation Serif',serif" font-size="9.3" fill="#dccb98" text-anchor="middle" font-weight="bold" letter-spacing="0.45">RED</text><text x="23.8" y="37" font-family="'Liberation Serif',serif" font-size="9.3" fill="#dccb98" text-anchor="middle" font-weight="bold" letter-spacing="0.45">WINE</text><text x="23.8" y="57" font-family="'Liberation Serif',serif" font-size="3.1" fill="#c77d2d" text-anchor="middle" font-weight="bold" font-style="italic">Premium Quality</text><text x="23.8" y="59.8" font-family="'Liberation Serif',serif" font-size="2.2" fill="#c77d2d" text-anchor="middle">• • •</text><text x="23.8" y="62.4" font-family="'Liberation Serif',serif" font-size="2.1" fill="#c77d2d" text-anchor="middle">2019</text></g>
<g transform="translate(110.8 160.3)"><path d="M3.3 22.8C3.3 10.6 11.4 2.8 22.25 2.8C33.1 2.8 41.2 10.6 41.2 22.8V46C41.2 58.2 33.1 66 22.25 66C11.4 66 3.3 58.2 3.3 46Z" fill="#fff" stroke="#fff" stroke-width="6.6" stroke-linejoin="round"/><path d="M3.3 22.8C3.3 10.6 11.4 2.8 22.25 2.8C33.1 2.8 41.2 10.6 41.2 22.8V46C41.2 58.2 33.1 66 22.25 66C11.4 66 3.3 58.2 3.3 46Z" fill="#ece4c8" stroke="#b08335" stroke-width="2.1" stroke-linejoin="round"/><path d="M11.1 39.2l1.9 0M12.8 41.3l0.1 0M13.5 25.1l0 2.2M7.9 41.4l0 1.4M7 45.5l1.7 0.5M6.7 31.8l1.1 0M37.4 32.6l0 2.8M9.8 44.1l2.1 0M17.1 35l0 0.9M34.5 29.8l-1.3 2.1M35.5 40.5l0.4 1M9.7 34.8l-1.3 1.9M35.2 33.4l0 1.9M18.5 45.5l0 0.9M8.7 39.8l0 0M24 40.4l0 2.3M24.2 37.8l0 1.2M17.2 44.1l0 2.2M15.8 27.1l0 2.8M31.6 32.7l2.4 0M35.6 44.7l3.2 0M37.7 37.2l0 -0.6M13.9 43l0 1M32.5 40.9l2.8 0M7.3 30.3l0 1.8M11.3 26.4l0 3M38.4 40.4l1.4 0M37.6 35.8l-2.1 -1.3M33.6 41.4l0.5 -0.3M25 42.5l0 2.1M14.8 40.8l0 2.4M37.5 25.5l2.3 0M34 37l0 1.8M37.6 43.7l0 1M8.7 25.5l1.1 0M34.6 38.5l0 2.1M16.4 35.2l0 1.2M11.7 32.8l0.2 -2M29.3 43l1.3 -2.2M21.1 26.3l-1.5 0.9M14 39.4l0 0.9M18.6 31.4l-0.9 0M23.9 44.5l0 2.2M22.6 40.1l-0.9 0.9M23.2 36.5l0 2.8M38.2 32.3l0 3.2M9.2 26.6l0 2.8M31 34.2l0.8 0M27.1 34.1l1.7 0M19 29.6l0 1.8M13.9 39.5l1 -0.2M13.5 32.9l2.3 0M37.8 26.8l2 0M29.6 43.3l0.6 1.2M27.9 42.7l2.4 0M13.8 43.9l0 2.3M33.1 44.9l-2.2 -0.8M16 33.1l0 2.1M8.3 31.2l1.1 -0.2M9.2 44.7l-1.3 -0.7M27 39l0 3.1M16.4 30.2l-1.6 0.8M12.3 37.3l0 1.7M37 34.6l2.3 0M15 28.6l0 1.5M11.9 44.8l0 2.7M36.8 39.5l0 2M6.9 37.5l-1.2 -2.2M23.8 26.9l0 1.9M35.5 32.6l0 2.7M33.1 35.9l0 1.3M19.1 36.4l0 2.7M33.8 44.1l-2.2 0.4M8.3 43.5l1.2 -1.4M7.6 41.8l2.3 0M21.3 41.5l0 1.4M17.4 31.1l2.9 0M8 26.4l2.4 0M11.9 30.6l0 0.9M22.1 39l1.2 0M9.1 44.2l1.8 0M28.7 40l1 0M33.2 29.4l0 1.6M23.4 37.9l0 2.5M22.1 28.3l1.4 1.8M28.3 29.5l1.8 0.1M35.9 45l0 3.1M36.9 41.4l0 1.6M26.1 37.5l0.7 -1.5M36.7 36l-1.3 2.2M24.1 41l1.7 -0.6M8.4 33.4l0 2.1M32.8 32.5l0 0.9M19.7 37l0 2.4M12.6 27.2l0.1 1.8M22.8 27.5l0 1.8M27 40.9l0.7 -1.1M20 32.8l1.4 0M23.6 34.5l0 2.8M25.2 41.5l1 2.2M18.2 33.1l0 2.4M25 36.9l-1.4 -1.2M30.1 41.7l0.9 0M18 42l1.9 0M18.6 37.9l2.5 0M34.5 40.5l0 1.4M31.7 41.3l-1.3 1.6M35.3 26.6l0 2.3M10.5 42.1l0 2.4M15.5 29.5l0 2M29.4 29.5l1.6 0M27.3 32.6l0 1.1M7.5 39.3l1.1 0M35 38.5l0 2.5M25.5 34.1l3.1 0M18.1 38.1l1.7 0M17.2 40.6l1.9 0M22.8 29.6l-2.2 0.6M20.8 29.6l2.2 0M8.5 35.1l0 2.7M16.5 31.8l0 0.9M11.8 28.1l2.8 0M13 27.3l1.1 0M19.1 40.7l0 2.5M23.6 26.8l0 2.2M8.8 29.2l2.8 0M23 38.7l0 1.5M16.2 43.8l0 2.7M6.7 35.3l1.2 0.4M11.7 44.1l0 3.1M31.5 39.8l1.2 0M17 38.7l1.7 0M32.4 26.1l0 1M16.4 41.3l-1.6 -0.9M9.3 38.6l1.4 0M18.1 42.8l2.5 0M26.6 34.8l1.7 0M12.2 35.2l0 1.6M11.8 43.8l1.3 0M6.7 29.4l-0.7 0.7M13.3 38.4l2.6 0M23.3 32.7l0 2.2M33.4 39.2l1.6 0M35.4 42.4l0 2.4M31.4 38.9l1.7 -1.1M38.9 31.7l0 3.1M11.2 33.1l1.5 0M14.5 41.4l2.6 0M32 43l1.4 2.1M22.3 39.5l3.1 0" stroke="#151515" stroke-width="0.8" fill="none"/><path d="M37.2 27l0 2.8M12 26.8l1.5 0M35 27.9l-0.7 0.4M36.4 32.7l0.8 -1.8M34.7 31.7l0 1.2M33.7 31.6l1.1 1.8M24.5 32.8l1.3 0M37.2 28.8l1.8 0.6M10.6 34.2l1.2 0M7.6 31.1l0 2.7M22.5 30.9l2.1 0M35.9 28.7l0 2M15.7 31.8l1.7 0M27.9 31l0 2.8M17.6 30l2.7 0M37 30.9l1 0M35.2 27.3l1.5 0M16.7 29.3l0 0.9M23.5 33.9l1.2 0M28.6 26l2.5 0M36 30.3l0 0.1M25.1 35.9l-0.1 0.9M27 29.2l1.3 0.4M36.7 25.7l2.1 0M17.1 27.3l1.7 0M14.8 25.9l-0.6 -1.5M13.1 28.2l-1.3 -0.9M9.2 30.4l0 1.5M30 35.2l-1.8 -0.5M33.7 25.8l0 1.8M18.5 33.4l-0.1 -1M13.5 28.3l0 2.1M11.1 34.8l0.9 0M22.3 31.8l0 1.8M7 33.5l0 2.1M38.1 34.4l0 1.9M10.6 29.1l1.2 -1.9M18.4 32.2l0 2.4M35.1 31.3l0 2.5M22.7 27.5l0 1.1M33.3 30.9l2.4 0M37.7 27.5l2.5 0M30.8 29.6l1.2 0M11.3 26l0 1.3M22.9 35.7l0 1.9M34.2 31.8l2.3 0M6.7 35.5l2.4 0M32.9 26.5l0 1.2M22.5 35.4l-0.3 0.5M30.1 29l1.7 0.9M35.4 33.9l1.4 0M15.2 28l0 2.7M15.7 25.8l0 1M20.5 29l0 1.8M19.5 29.2l-0.8 0.2M34.6 35.6l0 0.9M37 30.9l0 1.1M13.8 28.8l0 0.9M38.4 34.1l0 1.8M32.1 30.8l0 1.5M18.4 35.1l1.7 0M26.6 26l2.4 0M27.9 29.3l0 0.8M8.7 27.1l2.4 0M13.1 30.5l2.1 0M6.7 35.2l1.4 0M13.8 32.7l-0.6 -0.4M24.2 27.3l2.6 0M24.1 34.1l0 2.5M31.5 27.9l2.2 0" stroke="#151515" stroke-width="1.1" fill="none"/><rect x="2.4" y="46.7" width="39.7" height="7" fill="url(#g1)"/><text x="22.2" y="51.7" font-family="'Liberation Serif',serif" font-size="4.1" fill="#2e1c0c" text-anchor="middle" font-weight="bold" letter-spacing="0.15">COLLECTION</text><text x="22.2" y="9.8" font-family="'Liberation Serif',serif" font-size="3.1" fill="#1a1a1a" text-anchor="middle" font-weight="bold" font-style="italic" transform="rotate(-5 22 9)">Premium Quality</text><text x="22.2" y="21.1" font-family="'Liberation Serif',serif" font-size="9.8" fill="#111" text-anchor="middle" font-weight="bold" letter-spacing="-0.1">Wine</text><text x="22.2" y="59.4" font-family="'Liberation Serif',serif" font-size="2.9" fill="#1a1a1a" text-anchor="middle" font-weight="bold" font-style="italic">Vintage of Wine</text><text x="22.2" y="63.2" font-family="'Liberation Serif',serif" font-size="2.6" fill="#1a1a1a" text-anchor="middle" font-weight="bold">12</text></g>
<g transform="translate(172.8 160)"><path d="M22.2 2.6C15.4 3.6 9.4 7.4 6.4 12.4V13.8H3V61.2L6.6 63.4L7.6 66.4H36.8L37.8 63.4L41.4 61.2V13.8H38V12.4C35 7.4 29 3.6 22.2 2.6Z" fill="#fff" stroke="#fff" stroke-width="5.2" stroke-linejoin="round"/><path d="M22.2 2.6C15.4 3.6 9.4 7.4 6.4 12.4V13.8H3V61.2L6.6 63.4L7.6 66.4H36.8L37.8 63.4L41.4 61.2V13.8H38V12.4C35 7.4 29 3.6 22.2 2.6Z" fill="#260c11" stroke="#d6aa2c" stroke-width="1.6" stroke-linejoin="round"/><path d="M16.3 30.9l0 2.2M19.3 30.9l0 2.3M19.5 52.9l1.1 0M28.9 42.7l2.8 0M18.2 27.7l-0.4 -1.2M23.9 39.8l-1.1 -1.1M30 46.2l1.3 -0.6M20.9 56.3l-1.8 0.9M36.8 49.8l0 2.4M33.5 33.8l1.2 0M17 38.8l0 1.6M31.5 56.3l1.9 1.9M35 37.7l0 2M29.1 50.6l0 1.2M38.1 48l1 0M25.6 58.9l2.8 0M20.7 42.9l-0.2 1.1M29.5 31.1l0 2.8M18.9 33.8l0 2.2M36.5 43.6l2.4 0M22.7 40l2.1 0M16.9 30.9l0 2.3M32.6 61.1l-1 1M39.6 39.2l0 1.6M22.8 33.2l0 1M36.8 28.7l1.2 0M20.6 55.7l0 1.2M26.9 51.3l2.5 0M25.6 45.3l-0.2 0.9M27.2 31.7l0 2.4M33.9 60l2 0M20 56.9l0 1.6M19.4 40.3l0 1.7M33.1 46l0 2.4M33.6 56l0 2M37.5 36.1l0 2.4M24.7 41l-0.5 -1.2M21.1 39.1l1.5 0M34.5 29.3l0 2M27.5 44.5l-0.9 -1.2M16.8 43.9l0 1.7M16.1 27l0 2.3M23.2 58.9l1.6 0M34.7 35.2l2.5 0M29 38.2l0 1.9M20.5 40.1l2.7 0M32.2 45.2l-0.8 -0.4M32.3 46.4l0 1.6M35.8 35.5l-1.8 1.8M32.4 38.3l1.2 -1.7M22 44.2l-1.4 -1.8M23.5 28.6l1.9 0M26.6 31.9l0 2.4M26.6 43.8l2.2 0M37.6 55.9l-0.6 -1.3M18.2 57.1l0 1.9M37.8 38.3l0 1.6M38.7 50.9l-1.8 0.9M26.8 41.1l0.9 1.6M33.7 58.9l1.9 0M34.8 42.9l0 2M36.9 57.5l0 1.6M21.5 38.9l-0.3 -0.7M22.5 42.4l1.5 0M20.5 34.9l0 2.6M20.1 53.4l0 2.4M22.4 54.3l1 0M18.3 55l1.8 0M24.5 51.2l0.9 0M30.4 38l0.2 1.1M18.9 51.7l2.5 0M37.2 46.3l2.3 0M22.3 46.1l0.4 0.2M36.5 61.1l0 0.9M30.7 32.2l-0.1 0.1M35.6 57.4l0 1.7M20.3 43.1l0 2.6M24.5 40.6l1.3 -0.6M28 50.2l0 1.1M36.6 32.7l0.9 0.4M24.3 57l-1.7 1.6M31.3 37.1l0 1M35.5 56.7l0 1.2M17.8 41.5l0 0.9M23.1 55.7l0 1.6M28.3 32.7l0 0.9M19.5 61.1l0.8 1.6M23.8 35.7l0.4 1.7M24.6 41.5l1.5 -1.3M22.3 27.5l2.6 0M29.6 32.2l2.1 0M18.5 59l1.8 0M24.3 32.6l1.5 0M21.6 49.6l2.7 0M39.2 43.3l-0.5 -0.3M29.6 61.3l0 1.7M24.1 55.2l-0.1 -1.6M30.3 47.6l2.4 0M27.1 46.2l-1.9 -1M32.5 61.2l-0.9 1.9M22.7 42.8l0 2M25.4 51l-1.5 0.6M30.4 36.6l0 2.7M32.7 48.9l0 2.6M25.6 43.3l1.7 0M38.9 43.4l2.3 0M38.4 33l0 2.7M30.5 40l-1.5 -1M17.7 50.5l1.4 0M26.5 35.9l1 -0.5" stroke="#6d2a30" stroke-width="1" fill="none" opacity="0.9"/><path d="M6.3 27.4l0 2.6M13.4 35.5l0 1.8M19.3 32.4l1.5 -0.5M5 36.1l0 0.8M17.4 37.5l1.8 -1.2M6.4 25.9l-1.5 -1.3M5.3 24.8l0 1.5M7.8 29l-1.3 1.2M17.6 33.1l2.3 0M15 27.7l0 1.3M11.8 39.8l0.9 0M13.1 37l2.2 0M6.5 25l0.9 0M10.1 30.2l0 0.9M5.1 39.2l2.7 0M13.4 39.3l0.5 0.1M13.6 27.6l0 2.2M8.3 37.6l2 0M19 34.3l0 1.3M5 24.4l0.4 1.8M18.3 29.1l1.7 -0.2M6.4 29.1l0 1.5M6.4 35.4l-1.1 1.1M14.9 31.7l-0.5 1.3M5.6 39.4l0 0.8M20 35.5l2.3 0" stroke="#6d2a30" stroke-width="0.9" fill="none" opacity="0.8"/><circle cx="22.2" cy="10" r="4.7" fill="#d2a62a"/><path d="M19.9 7.8H24.5C24.5 10 23.6 10.9 22.6 11.2V12.6H23.6V13.2H20.8V12.6H21.8V11.2C20.8 10.9 19.9 10 19.9 7.8Z" fill="#260c11"/><text x="22.2" y="22.9" font-family="'Liberation Sans',sans-serif" font-size="3.9" fill="#e5dcc6" text-anchor="middle" font-weight="bold" letter-spacing="0.55">PRODUCED</text><text x="22.2" y="27.8" font-family="'Liberation Sans',sans-serif" font-size="3.9" fill="#e5dcc6" text-anchor="middle" font-weight="bold" letter-spacing="0.6">NAME</text><text x="22.4" y="44.6" font-family="'Liberation Serif',serif" font-size="14.2" fill="#d8bf3c" text-anchor="middle" font-weight="bold" font-style="italic" letter-spacing="-0.25">Wine</text><text x="22.2" y="53" font-family="'Liberation Serif',serif" font-size="3.4" fill="#d9cdbd" text-anchor="middle" font-weight="bold" font-style="italic">Alcohol</text><text x="22.2" y="60.7" font-family="'Liberation Serif',serif" font-size="2.8" fill="#d2a62a" text-anchor="middle" font-weight="bold">Premium quality</text></g>
<g transform="translate(47 230.8)"><path d="M3.2 23C3.2 10.4 12.4 2.9 23.35 2.9C34.3 2.9 43.5 10.4 43.5 23V65.2H3.2Z" fill="#fff" stroke="#fff" stroke-width="6.2" stroke-linejoin="round"/><path d="M3.2 23C3.2 10.4 12.4 2.9 23.35 2.9C34.3 2.9 43.5 10.4 43.5 23V65.2H3.2Z" fill="#1f0b0d" stroke="url(#g4)" stroke-width="2.1" stroke-linejoin="round"/><g fill="none" stroke="#c79a2a" stroke-width="0.65"><circle cx="13.9" cy="22.9" r="1.5"/><circle cx="17.8" cy="30.7" r="1.5"/><circle cx="17.3" cy="25.5" r="1.5"/><circle cx="20.8" cy="28.8" r="1.5"/><circle cx="21.7" cy="30.2" r="1.5"/><circle cx="22.9" cy="26.5" r="1.5"/><circle cx="19.3" cy="29.6" r="1.5"/><circle cx="20.7" cy="31.4" r="1.5"/><circle cx="8.9" cy="30.4" r="1.5"/><circle cx="18.6" cy="29.3" r="1.5"/><circle cx="23" cy="24.1" r="1.5"/><circle cx="9.3" cy="30.4" r="1.5"/><circle cx="14.4" cy="30.3" r="1.5"/><circle cx="16.1" cy="25.7" r="1.5"/><circle cx="15.4" cy="31.4" r="1.5"/><circle cx="14.8" cy="31.7" r="1.5"/><circle cx="17" cy="34" r="1.5"/><circle cx="19.3" cy="24.5" r="1.5"/><circle cx="23.6" cy="31.8" r="1.5"/><circle cx="8.6" cy="30.2" r="1.5"/><circle cx="19.3" cy="31.7" r="1.5"/><circle cx="18.4" cy="26.1" r="1.5"/><circle cx="11.2" cy="26.4" r="1.5"/><circle cx="20.8" cy="30.6" r="1.5"/><circle cx="14.5" cy="26.7" r="1.5"/><circle cx="10.6" cy="30.7" r="1.5"/><circle cx="11.9" cy="34.3" r="1.5"/><circle cx="12.9" cy="34.7" r="1.5"/><circle cx="13.9" cy="34" r="1.5"/><circle cx="21.1" cy="31.4" r="1.5"/><circle cx="11.1" cy="28.6" r="1.5"/><circle cx="9.5" cy="24.6" r="1.5"/><circle cx="11" cy="30.5" r="1.5"/><circle cx="18.2" cy="31.1" r="1.5"/><circle cx="17.3" cy="27.5" r="1.5"/><circle cx="18" cy="35" r="1.5"/><circle cx="18.9" cy="27.7" r="1.5"/><circle cx="19.2" cy="22" r="1.5"/><circle cx="36.9" cy="32.9" r="1.3"/><circle cx="27.1" cy="28.4" r="1.3"/><circle cx="34.9" cy="25.8" r="1.3"/><circle cx="36.2" cy="35.1" r="1.3"/><circle cx="28.3" cy="34" r="1.3"/><circle cx="35.2" cy="33.6" r="1.3"/><circle cx="34.8" cy="25" r="1.3"/><circle cx="38" cy="31.3" r="1.3"/><circle cx="29.6" cy="28.2" r="1.3"/><circle cx="34.9" cy="23.8" r="1.3"/><circle cx="28.7" cy="27.8" r="1.3"/><circle cx="27.1" cy="28.1" r="1.3"/><circle cx="36.7" cy="31.6" r="1.3"/><circle cx="28.9" cy="33.2" r="1.3"/><circle cx="30.8" cy="26" r="1.3"/><circle cx="28.6" cy="34.2" r="1.3"/><circle cx="29.3" cy="34.3" r="1.3"/><circle cx="35.8" cy="28.7" r="1.3"/><circle cx="37.5" cy="31.9" r="1.3"/><circle cx="33.9" cy="29.6" r="1.3"/><circle cx="36.3" cy="28" r="1.3"/><circle cx="34.5" cy="31.8" r="1.3"/><circle cx="33.3" cy="32.4" r="1.3"/><circle cx="38" cy="34" r="1.3"/><path d="M22 22C26 18 30 17 33.5 14.6M30 17L33 24M27 19L24 27M31 20C35 21 38 23 40 27M33.5 14.6L35 20"/></g><rect x="4.2" y="37.2" width="38.3" height="14.4" fill="url(#g2)"/><text x="23" y="48.4" font-family="'Liberation Serif',serif" font-size="11.8" fill="#33200a" text-anchor="middle" font-style="italic" letter-spacing="-0.2">Wine</text><path d="M22.6 5.2C23.9 5.6 23.9 7 22.9 7.6C23.9 8.2 23.7 9.2 23.2 9.6" fill="none" stroke="#c79a2a" stroke-width="0.8"/><text x="23.4" y="11.8" font-family="'Liberation Serif',serif" font-size="2.9" fill="#c79a2a" text-anchor="middle" font-weight="bold">Wine Bar</text><text x="23.4" y="56.5" font-family="'Liberation Serif',serif" font-size="3.3" fill="#b8922a" text-anchor="middle" font-weight="bold" letter-spacing="0.45">COLLECTION</text><text x="23.4" y="61.4" font-family="'Liberation Serif',serif" font-size="3.3" fill="#d8c9a0" text-anchor="middle" font-style="italic">Vintage</text></g>
<g transform="translate(111.1 230.8)"><path d="M21.65 4C15 4.8 9.4 7.6 6.2 12V13H2.6V64.9H40.7V13H37.1V12C33.9 7.6 28.3 4.8 21.65 4Z" fill="#fff" stroke="#fff" stroke-width="5.0" stroke-linejoin="round"/><path d="M21.65 4C15 4.8 9.4 7.6 6.2 12V13H2.6V64.9H40.7V13H37.1V12C33.9 7.6 28.3 4.8 21.65 4Z" fill="#5c1b1c" stroke="#c6a05a" stroke-width="1.1" stroke-linejoin="round"/><path d="M14.2 16.8l0 2.3M13.8 17.7l-0.4 1.7M28.5 17.6l1.9 0M17.6 24.9l2.6 0M14.6 16.4l-1.2 0.4M17.8 21.5l1 -1.1M29.4 15.8l-0.1 1.5M31.3 22l1.1 0M19.2 11.9l-1.4 1.5M23.2 11.5l0 1.6M10.5 21.1l2.6 0M31.4 21.5l1.6 0.5M22.9 17.2l1.5 1.2M19.4 10l1.8 0M23.5 22.7l0 2.1M24.2 12.1l-1.6 -0.1M22.7 18.4l0.2 1.4M15.7 16.5l0 2M19.4 21.5l0 1.6M26.4 19.7l0.2 0M27.7 19.6l-0.1 -1.8M29.8 13.2l1.8 1M18.8 22.7l0 1.4M23.8 19.3l1.8 0M19 20.8l0 1.9M32.5 12.1l0.9 0M29.5 14l0 1.3M34.4 21l0 2.5M9.1 16.5l2.2 0M11.2 22.1l0 2.1M34.3 18.3l0 2M19.8 20.6l-1.4 0.2M25.9 23.8l1.9 0M29.6 11.2l0.3 0.5M11.5 17.2l1.2 0M34.7 22.5l0.9 0M21.9 17.9l0.6 0.4M22.1 24.6l-0.5 1.1M34.9 16.6l0 0.9M30.6 11.8l0 1.1M20.9 21.9l0.8 0M15.8 10l2.2 0M15.9 10.8l0 1.7M29.4 19.8l1.5 0M7.9 16.9l2 0M7.5 16.6l0 1.8M19.8 14l0 2.5M21.1 10.3l2.2 0M21.4 23.2l0.7 -1.7M18.8 17l0 1.7M26.6 20.9l0.9 -0.7M25 16.8l-1.4 -1.2M28.1 20.5l0 2.2M29.8 19.2l0.9 0M13.8 21.2l-1.2 -1.7M17.3 24l0 2.5M30.1 22.4l0.6 -1.1M19.7 15.1l1.4 0M13.5 12.2l0 2.1M21 8.7l0 1.1M27.4 22.3l-0.8 -0.3M13.8 19.5l0 2.2M20.8 17.6l1.5 -0.8M28.4 13.1l0 2.3M12.6 13.2l1.3 -0.4M28 15.1l0 1.8M12.1 12l2 0M13.5 12.2l1.3 0M23.5 19.7l0 2.4M21.4 13.5l1.8 -0.2M15.1 12.2l1.1 1.4M29 14.1l0 2M17.9 17.5l1.2 0M7.6 20.8l1 -0.6M16.8 18.9l0 2.1M22.3 17.3l-1.4 -1.1M22.4 22.6l1.4 -1.1M16.3 12.7l0 1.1M11.5 22l2.5 0M25.4 21l0.2 -1M19 15.9l0 1.8M29.7 14l0 1M17.7 11.9l2.5 0M13.8 14.4l1.1 0M32.6 24.7l0 1.5M23.4 21.9l-1.1 1.6M24.6 20.7l0 0.9M21.1 24.7l0 2.6M20.4 24.1l0 1.8M12.1 20.8l1.9 0M18.4 22.9l-1.7 0.2M13.4 23.9l1.1 0.6M33.4 12.7l0 2.4M26.2 13.4l0.6 -1.8M34.6 20.7l-1.5 -1.8M9.3 21.1l0 1.3M16.6 15.3l0 1M22.2 9.7l1.3 0M28.5 9.8l1.9 0M33.7 18.6l1.3 -1.4M8.5 21.9l0 1.7M16.4 11.2l0 1.6M31.2 12.3l0 1.9M32.4 15.4l0 2.4M10.3 18.3l1.7 0M19.1 10.5l1.4 0.4M16 20.1l0 1M24.7 18l-0.3 -1.4M23.7 9.5l0 2.6M18 14.5l-1.5 1M28.5 23.6l0 1.6M18 8.8l0 1.1M9.1 20.1l-0.4 1.2M31.5 22.3l0 1.4M26.6 17.6l0 0.8M15.7 15.5l0 1.3M24.6 15.5l0.4 -0.3M19.7 22.5l1.8 -0.2M13 16.8l1.6 0M9.9 16.8l0 0.9" stroke="#b06a28" stroke-width="0.8" fill="none"/><path d="M35.4 14.6l-0.1 1.6M19.1 24.5l0 2.6M19.3 16.1l0 1.9M8.5 18.4l0 0.9M12.4 16.6l0 2.2M19.4 23.8l1.4 1.6M23.9 21.7l0.2 -1.3M22.3 20l0 1M12.8 22l0.6 -0.3M8.3 14l1.8 0M20.5 16l0 1.1M11.2 20.8l0 1.8M19.7 20.2l1 -1.3M34.9 23.7l-0.2 1.6M30.7 16.7l2.3 0M29 24.3l2 0M9.7 21.6l0 2.1M33.2 18.2l0 0.9M22.2 15.8l0.4 0M26.6 15.7l0.9 0M23.1 23l0 2M35.8 17.7l0 1.3M31.2 14.9l-0.9 0.9M32.8 23.7l0 1.8M16.5 24l0 1.1M19.1 15l0 2.1M16.8 16.1l-0.9 1.1M27 20.3l1.8 0M31.5 21.9l0 2M22 24.5l0 1.6M35.1 14.8l1.5 0.4M9.1 22.8l0 1.7M30.8 17.6l0 1M17.3 15.2l2.3 0M9.1 20l1 -0.9M22.6 21.8l2.6 0M33.4 25l0 0.8M24.3 20.6l0 1.2M29.9 23.1l0 1M28 18.8l0 2.5M16.9 14.9l1.5 0M25.9 22.7l0 1.6M33.2 19.5l1.5 1.1M26.1 15.3l-0.7 -0.7M21.9 20.1l0.1 1.5M29.9 21.4l0 1.9M21.8 22.6l0 2.2M27.8 16l-0.1 -0.2M17.1 18.4l1.5 -0.1M22.7 19.3l0 2.4M19.5 14.3l0 1.3M29.9 16l0 2.4M16.2 24.6l0 1M13.5 18.5l1.4 0M35 24.8l2.6 0M32.1 25.1l1 0M23.7 14.6l2.6 0M18.8 21.8l0.8 -0.4M22.1 15.4l0.5 -0.6M19.8 23.7l0 1.2" stroke="#b87230" stroke-width="1" fill="none"/><text x="21.6" y="32.4" font-family="'Liberation Serif',serif" font-size="4.4" fill="#d8c070" text-anchor="middle" font-weight="bold" letter-spacing="0.5">BORDEAUX</text><text x="21.6" y="36" font-family="'Liberation Serif',serif" font-size="2.7" fill="#d8c070" text-anchor="middle" font-weight="bold" letter-spacing="0.1">WINE CELLAR</text><path d="M4.5 41.4H38.8L36.4 44.8L38.8 48.2H4.5L6.9 44.8Z" fill="url(#g3)"/><text x="11.2" y="45.9" font-family="'Liberation Serif',serif" font-size="2.8" fill="#4a2210" text-anchor="middle" font-weight="bold">19</text><text x="32.1" y="45.9" font-family="'Liberation Serif',serif" font-size="2.8" fill="#4a2210" text-anchor="middle" font-weight="bold">85</text><circle cx="21.65" cy="44.6" r="5.4" fill="#c9a85e"/><circle cx="21.65" cy="44.6" r="4.1" fill="#6a2024" stroke="#8d6a2c" stroke-width="0.5"/><path d="M19.2 42.4H24.1L21.65 47.6Z" fill="#b7835a"/><text x="21.6" y="54" font-family="'Liberation Serif',serif" font-size="2.4" fill="#c77a2c" text-anchor="middle" font-weight="bold" letter-spacing="0.1">PREMIUM WINE</text><text x="21.6" y="57.4" font-family="'Liberation Serif',serif" font-size="2.7" fill="#c77a2c" text-anchor="middle" font-weight="bold" font-style="italic">Finest Selection</text><text x="21.6" y="60.6" font-family="'Liberation Serif',serif" font-size="2.7" fill="#c77a2c" text-anchor="middle" font-weight="bold" font-style="italic">Grand Reserve</text><path d="M9.2 61.3l1.8 0M11.5 57.4l0.7 1.1M4.9 53.8l0.8 -0.7M10.1 53.8l0 1.4M6.3 53.4l1.7 0M7 58.9l-1.4 -0.7M5.3 59l1.4 0M6.4 60.1l-0.2 1M6.3 55.6l-0.8 -1.1M4.8 59l-1.4 -0.1M7.5 55.4l0 1.3M5.6 61.6l0 1.5M9.3 58.8l1.5 0M11.5 53.8l0 1.2M10.1 56.4l0 0.9M5.5 58.8l0 1.4M6.4 55.2l0 2.1M9.2 57.1l0 2M8.8 53.4l0 2.1M7 56.3l0 2M6.4 57.9l0.1 -0.4M6.5 59.2l0 1.7M38.1 53.4l1.5 0M38.4 56l1.6 0M34.1 61.5l0.7 -1.4M38.6 57.7l1.6 0M35.1 61.7l0 1M38.7 54.7l0 1.4M37.9 55.9l0 1.2M33 52.2l0.7 -1.1M33.1 62.2l-0.2 0.2M38.6 54.5l0.8 0M34.9 54.4l0 1.4M34.5 61.3l0 0.8M37.5 61.6l-0.6 -0.4M37 52.8l0 1.5M33 56.8l0 2.1M35 55.6l0 1.2M37.1 60.3l1.3 0.3M34.1 56.4l0 1.3M34.9 61l0.9 0M35.3 55.5l1 0.3M36.2 56.4l0 1.9M37 57.8l1 0.6" stroke="#c77a2c" stroke-width="0.8" fill="none"/></g>
<g transform="translate(173.3 231.1)"><path d="M21.75 2.8C15.4 3.5 10.3 5.7 7.3 9.1V10.7L3.5 12.3V55.9L6.3 57.3V58.9C9.3 61.9 14.4 64.2 21.75 64.8C29.1 64.2 34.2 61.9 37.2 58.9V57.3L40 55.9V12.3L36.2 10.7V9.1C33.2 5.7 28.1 3.5 21.75 2.8Z" fill="#fff" stroke="#fff" stroke-width="5.4" stroke-linejoin="round"/><path d="M21.75 2.8C15.4 3.5 10.3 5.7 7.3 9.1V10.7L3.5 12.3V55.9L6.3 57.3V58.9C9.3 61.9 14.4 64.2 21.75 64.8C29.1 64.2 34.2 61.9 37.2 58.9V57.3L40 55.9V12.3L36.2 10.7V9.1C33.2 5.7 28.1 3.5 21.75 2.8Z" fill="url(#beige)" stroke="#c29a4c" stroke-width="1.4" stroke-linejoin="round"/><path d="M4.2 32.2H39.3V55.5L36.5 56.9V58.6C33.6 61.4 28.9 63.6 21.75 64.2C14.6 63.6 9.9 61.4 7 58.6V56.9L4.2 55.5Z" fill="#f0ebdc"/><path d="M5.6 32.4V56.4M7.2 32.4V56.4M8.8 32.4V56.4M10.4 32.4V61.6M12 32.4V61.6M13.6 32.4V61.6M15.2 32.4V61.6M16.8 32.4V61.6M18.4 32.4V61.6M20 32.4V61.6M21.6 32.4V61.6M23.2 32.4V61.6M24.8 32.4V61.6M26.4 32.4V61.6M28 32.4V61.6M29.6 32.4V61.6M31.2 32.4V61.6M32.8 32.4V61.6M34.4 32.4V61.6M36 32.4V56.4M37.6 32.4V56.4" stroke="#e2dac5" stroke-width="0.55" fill="none"/><path d="M4.2 31.9H39.3" stroke="#8b6a45" stroke-width="0.8"/><path d="M21.5 25.5l-0.8 -0.8M27.6 24.6l0 1.7M16.5 20.5l2.8 0M27.5 26.5l0 1.8M10.8 27.7l0 1.4M36.4 22.8l0.5 1.1M25.6 20.7l-1 -0.4M10.4 19.1l0 0.8M18.2 29.3l-0.3 -1.6M17 19.2l0 2.2M25.3 18.8l1.7 0M18.6 20.1l0 1M27.4 26.7l1.7 0M35.7 23.1l0 1.6M34.3 20.4l1.8 1.5M20.6 24.2l0.9 1.3M11.9 26.2l-1.1 -1.2M32.1 25.7l1.9 0M14.3 21.6l0 1.7M10.9 29.9l0.4 -1.7M24.7 20.4l0 1.1M21.6 19.4l0 1.3M20.7 30.3l2.5 0M28.6 25.2l0 0.9M10.5 25l0 2.8M12.5 20.1l2.1 0M8 22.8l2.6 0M30.2 29.6l2.9 0M20.8 22.1l0 2.6M26.3 26.3l0.6 -0.8M27.7 30.3l0 2.9M19.1 19.9l2.5 0M21.4 21.8l-1.7 0.7M17.5 26.2l1.4 0M12.7 28.9l1.4 0M24.5 28.2l0 1.8M11.1 28.2l0 2.6M23.5 25l1.4 0M20.2 20.6l0 2.1M25.1 22.6l2.5 0M30.1 18.4l1.2 0M31.5 25.9l2.1 0M22 21.1l-1.9 -2M15.4 20.2l0 2.2M18.3 30.8l0 2.9M36.4 25.4l-1.8 1.8M19.9 22.7l-0.4 -1.7M7.2 28.6l0 2.2M9.1 28.8l-0.6 1.2M33.9 21.4l3 0M35.5 25.6l0.8 0M31.8 30.5l1.3 0M10.3 26.5l2.1 0M32.1 18.9l0 1M15.9 19l0 1.3M31.3 25.1l0 1.9M11.1 31l0 1.3M23.9 29.8l1.1 0M25 27.9l0.6 -1M31.7 27.3l-1.3 1.4M21.1 21.2l0 1M33.8 20.2l1.4 0M14.1 22.9l-1.8 -0.5M16.4 24.6l2.7 0M25.8 29.3l1.3 -2M8.4 25.1l0 1.6M22.6 25.2l1.1 -1.2M23.9 24.5l2.4 0M28.3 27.5l0 1M24.3 21.6l0 1M8.7 24.1l0.5 -1M35.5 20.9l1 0M35.7 30.1l-0.5 -0.2M21.6 30.2l1.3 0M34.1 23.8l1.9 1.1M10.2 28.9l3 0M17.9 20.7l0 3M19.6 18.6l2.9 0M12.9 30.3l-1.2 -1.2M10.8 19.7l0 1.3M30.9 24l2.2 0M10.6 28.3l0 1.9M13.1 21.7l0 1.7M19.7 19.7l-0.7 0.7M12.2 18.9l-1.1 -2.1M34.8 23.8l0 2.2M16.7 30.8l0.7 0.8M16.2 30.1l-1.1 -1.9M8.3 25.1l2.6 0M34.1 23.3l1.7 0M34.1 21.2l0 1.2M34.6 20.6l-1.1 -0.5M11.9 30.9l0 1.2M27.6 24.6l0 1.8M33.7 20.3l1.3 0M21.6 23.3l1.5 0M6.8 21l-0.5 -1.6M9.7 27.7l0 2.9M22.4 19.2l0 2.2M36.6 30.1l0 2.1" stroke="#86705a" stroke-width="0.75" fill="none"/><path d="M34.3 22.1l-1 -0.1M33.4 23.7l1.1 0M35.3 29.5l0 1M20.9 25.2l-0.6 0.3M11.7 22.4l0 1.8M23.5 26.1l-0.7 -0.6M20.6 29.1l0 1.3M19.5 26.8l0 1.1M28.5 25.7l0.8 0M14.3 21.4l0 2.4M36.1 28.2l0 1.8M33.4 23.6l0 2.1M17.1 24.8l0 2.3M22.2 21.4l0 2M10.4 26.6l0 1.8M17.1 26.5l0 1.5M26.3 22.9l1.8 1.7M34.4 29.1l2.3 0M18.9 21.1l1.5 -0.9M18 22.6l-1.2 1.1M8.1 24.2l-0.1 -1.3M7.9 26.7l0 1.3M24.7 23.3l0 2.2M28.3 26.1l0 1.7M35.3 25.2l0 2.5M17.2 25.3l0 2.4M27.1 25.3l1.4 0M20.5 25.2l0 2.1M29.2 20.8l0 2.1M17.2 21.8l2.6 0M17.4 25.9l1.8 0M24.5 28.8l1.4 0.7M29.4 27.4l0.7 0.9M8.7 22l1.6 0M13.7 26.4l0 2.2M16.4 28.8l0 2.5M16.6 27.6l0 1.7M17.5 28.3l0.3 -1.4M22.4 22.7l0 2.1M23 29.6l-1.7 1.6" stroke="#7a634c" stroke-width="1" fill="none"/><path d="M20.9 4.8L21.8 7L23.1 5.2M21.8 7V8.4" fill="none" stroke="#5a4632" stroke-width="0.7"/><text x="21.8" y="10.9" font-family="'Liberation Serif',serif" font-size="2.9" fill="#3a3026" text-anchor="middle" font-weight="bold">Wine House</text><text x="21.8" y="13.4" font-family="'Liberation Serif',serif" font-size="2" fill="#5a4632" text-anchor="middle">· · ·</text><text x="21.6" y="45.4" font-family="'Liberation Serif',serif" font-size="13.8" fill="#a07f35" text-anchor="middle" font-style="italic" letter-spacing="-0.1">Wine</text><text x="21.8" y="51.1" font-family="'Liberation Serif',serif" font-size="3.8" fill="#4a3a2a" text-anchor="middle" letter-spacing="0.42">COLLECTION</text><text x="21.8" y="55.6" font-family="'Liberation Serif',serif" font-size="2.4" fill="#4a3a2a" text-anchor="middle" font-style="italic">vol</text><text x="21.8" y="57.8" font-family="'Liberation Serif',serif" font-size="2.2" fill="#4a3a2a" text-anchor="middle">12</text><text x="21.8" y="62.4" font-family="'Liberation Serif',serif" font-size="3.3" fill="#4b3b2a" text-anchor="middle" font-weight="bold" font-style="italic">Premium quality</text></g>
<g transform="translate(232.3 160.4)"><path d="M23.8 2.3C19.5 2.5 16.3 4.6 14.4 7C12.6 9.4 9.5 12 5 13.4C4.1 19 3.6 26 3.6 32C3.6 48 10 63 23.8 67.4C37.6 63 44 48 44 32C44 26 43.5 19 42.6 13.4C38.1 12 35 9.4 33.2 7C31.3 4.6 28.1 2.5 23.8 2.3Z" fill="#fff" stroke="#fff" stroke-width="6.0" stroke-linejoin="round"/><path d="M23.8 2.3C19.5 2.5 16.3 4.6 14.4 7C12.6 9.4 9.5 12 5 13.4C4.1 19 3.6 26 3.6 32C3.6 48 10 63 23.8 67.4C37.6 63 44 48 44 32C44 26 43.5 19 42.6 13.4C38.1 12 35 9.4 33.2 7C31.3 4.6 28.1 2.5 23.8 2.3Z" fill="#581a1c" stroke="#b3853a" stroke-width="1.4" stroke-linejoin="round"/><path d="M22.1 30.2l-0.1 0M26.8 19.4l1.9 0M33.9 16.7l0 1M34.4 34.1l0 2.6M39.8 33l1.1 0M7 29.3l0 1.1M14.8 14.9l1.6 0M35.6 29.1l1.7 0M29.4 27.3l0 2.6M40.9 38.4l-0.7 -1M16.5 16l-0.4 1.3M19.8 41.8l-1.8 -1.1M37.9 27.6l-0.4 -1.6M28.2 36.6l0 1M18 42l-1.4 -0.9M10 15.7l-1.2 0.2M21.9 19.5l-1.3 0.5M10.5 26.2l0 1.3M40 37.3l0 2.4M13.8 25.4l0.5 -1.5M40.6 20.2l0 2.2M17.8 22.6l0 1M26.6 21l1.5 0M22.1 41.8l1.8 0M36.4 19.3l0 2.4M34.7 21.2l0 2.1M38.9 19.7l1.4 0.4M21 17l0 2.5M14.7 34.4l0 2.3M27.1 22.5l0 2.1M8.9 20.6l2.3 0M27.7 22.1l-1.1 -1.8M15.8 26.9l0 1.1M19.2 30.6l0 1.5M37.2 42.4l2 0M26.7 18.1l0 0.8M37.9 34.3l-1.7 0.5M23.1 35.2l0 2.6M9.1 29.8l1.5 0.9M30.8 37l-0.5 0.7M37.6 39.3l2.2 0M36.3 30.6l1.5 0M26.6 31.7l0 2M40.8 39.5l-0.4 0.9M26.5 26.8l-1.5 0.9M7.5 31.4l1.2 0M30.6 28.4l2.5 0M15.3 14.3l0 2M13.5 18.9l0.6 -0.2M37.3 23.5l1.2 0M21.4 37.4l1.4 -0.4M26.6 23.2l0 1.7M35.4 38.6l1.6 -0.8M12.3 27.1l0 1.2M20.8 32.1l1.4 0M35.4 42.5l0.9 0M7.6 39.3l0 2.1M26.2 23l-1.8 -1.3M22.2 14.7l-1 -1.3M8.1 32.2l1.9 0M29.1 37.4l0.7 -1.1M22.9 19.2l0 1.6M31.1 19.2l0 1.4M30.6 29.1l2.2 0M20.1 37l-1.5 1.6M31.4 17.8l1.9 0M37.9 24.9l2.4 0M34 41.4l2 0M13.6 34.9l0.5 0.8M13.9 40.1l1.7 0.1M33.8 23.3l1.3 -0.6M9.4 26.8l2.2 0M23.3 14.8l-1.6 1.1M12.5 23.7l-1.3 -1.3M24.3 35l0.7 1.6M23.5 41.5l0 1.2M24.7 22.4l0.5 0.1M35.6 30.2l0 1.5M35.7 40.1l0 2.3M39.9 29.2l1.2 0M25 28.6l0.8 0M39.9 29l2.2 0M25.9 28.2l0.9 0M25.1 26l1.5 -0.8M22.8 17.7l2.3 0M37.6 27.8l0 1.1M27.8 40.8l0 2.2M7.3 19.6l0 2M17.6 24.3l1 0M31.7 17.6l1.3 0M13.3 29.4l1.5 0M20.8 29.4l0 1.2M28.3 32.5l2.3 0M27.6 38.8l0 2.1M34.5 40.2l0 1.4M38.3 20.3l1.4 -1.3M14.8 35.1l0 1M35.2 26.2l-1.4 -0.4M30.1 14.5l0 2M37.9 42.1l0 1.7" stroke="#340e10" stroke-width="1.2" fill="none" opacity="0.8"/><path d="M4.6 43.9H43C42.4 47.2 41.4 50.3 40 53.1H7.6C6.2 50.3 5.2 47.2 4.6 43.9Z" fill="url(#g1)"/><text x="23.8" y="50" font-family="'Liberation Serif',serif" font-size="4.2" fill="#3b2412" text-anchor="middle" font-weight="bold" letter-spacing="0.2">COLLECTION</text><path d="M21.9 6H25.7L24.3 8.2V9.4H23.3V8.2Z" fill="#b8822f"/><text x="23.8" y="12.2" font-family="'Liberation Serif',serif" font-size="2.6" fill="#c08a3a" text-anchor="middle" font-weight="bold">Wine House</text><text x="23.8" y="14.2" font-family="'Liberation Serif',serif" font-size="1.8" fill="#c08a3a" text-anchor="middle">· · · ·</text><text x="23.8" y="27.3" font-family="'Liberation Serif',serif" font-size="9.3" fill="#dccb98" text-anchor="middle" font-weight="bold" letter-spacing="0.45">RED</text><text x="23.8" y="37" font-family="'Liberation Serif',serif" font-size="9.3" fill="#dccb98" text-anchor="middle" font-weight="bold" letter-spacing="0.45">WINE</text><text x="23.8" y="57" font-family="'Liberation Serif',serif" font-size="3.1" fill="#c77d2d" text-anchor="middle" font-weight="bold" font-style="italic">Premium Quality</text><text x="23.8" y="59.8" font-family="'Liberation Serif',serif" font-size="2.2" fill="#c77d2d" text-anchor="middle">• • •</text><text x="23.8" y="62.4" font-family="'Liberation Serif',serif" font-size="2.1" fill="#c77d2d" text-anchor="middle">2019</text></g>
<g transform="translate(296.8 160.3)"><path d="M3.3 22.8C3.3 10.6 11.4 2.8 22.25 2.8C33.1 2.8 41.2 10.6 41.2 22.8V46C41.2 58.2 33.1 66 22.25 66C11.4 66 3.3 58.2 3.3 46Z" fill="#fff" stroke="#fff" stroke-width="6.6" stroke-linejoin="round"/><path d="M3.3 22.8C3.3 10.6 11.4 2.8 22.25 2.8C33.1 2.8 41.2 10.6 41.2 22.8V46C41.2 58.2 33.1 66 22.25 66C11.4 66 3.3 58.2 3.3 46Z" fill="#ece4c8" stroke="#b08335" stroke-width="2.1" stroke-linejoin="round"/><path d="M11.1 39.2l1.9 0M12.8 41.3l0.1 0M13.5 25.1l0 2.2M7.9 41.4l0 1.4M7 45.5l1.7 0.5M6.7 31.8l1.1 0M37.4 32.6l0 2.8M9.8 44.1l2.1 0M17.1 35l0 0.9M34.5 29.8l-1.3 2.1M35.5 40.5l0.4 1M9.7 34.8l-1.3 1.9M35.2 33.4l0 1.9M18.5 45.5l0 0.9M8.7 39.8l0 0M24 40.4l0 2.3M24.2 37.8l0 1.2M17.2 44.1l0 2.2M15.8 27.1l0 2.8M31.6 32.7l2.4 0M35.6 44.7l3.2 0M37.7 37.2l0 -0.6M13.9 43l0 1M32.5 40.9l2.8 0M7.3 30.3l0 1.8M11.3 26.4l0 3M38.4 40.4l1.4 0M37.6 35.8l-2.1 -1.3M33.6 41.4l0.5 -0.3M25 42.5l0 2.1M14.8 40.8l0 2.4M37.5 25.5l2.3 0M34 37l0 1.8M37.6 43.7l0 1M8.7 25.5l1.1 0M34.6 38.5l0 2.1M16.4 35.2l0 1.2M11.7 32.8l0.2 -2M29.3 43l1.3 -2.2M21.1 26.3l-1.5 0.9M14 39.4l0 0.9M18.6 31.4l-0.9 0M23.9 44.5l0 2.2M22.6 40.1l-0.9 0.9M23.2 36.5l0 2.8M38.2 32.3l0 3.2M9.2 26.6l0 2.8M31 34.2l0.8 0M27.1 34.1l1.7 0M19 29.6l0 1.8M13.9 39.5l1 -0.2M13.5 32.9l2.3 0M37.8 26.8l2 0M29.6 43.3l0.6 1.2M27.9 42.7l2.4 0M13.8 43.9l0 2.3M33.1 44.9l-2.2 -0.8M16 33.1l0 2.1M8.3 31.2l1.1 -0.2M9.2 44.7l-1.3 -0.7M27 39l0 3.1M16.4 30.2l-1.6 0.8M12.3 37.3l0 1.7M37 34.6l2.3 0M15 28.6l0 1.5M11.9 44.8l0 2.7M36.8 39.5l0 2M6.9 37.5l-1.2 -2.2M23.8 26.9l0 1.9M35.5 32.6l0 2.7M33.1 35.9l0 1.3M19.1 36.4l0 2.7M33.8 44.1l-2.2 0.4M8.3 43.5l1.2 -1.4M7.6 41.8l2.3 0M21.3 41.5l0 1.4M17.4 31.1l2.9 0M8 26.4l2.4 0M11.9 30.6l0 0.9M22.1 39l1.2 0M9.1 44.2l1.8 0M28.7 40l1 0M33.2 29.4l0 1.6M23.4 37.9l0 2.5M22.1 28.3l1.4 1.8M28.3 29.5l1.8 0.1M35.9 45l0 3.1M36.9 41.4l0 1.6M26.1 37.5l0.7 -1.5M36.7 36l-1.3 2.2M24.1 41l1.7 -0.6M8.4 33.4l0 2.1M32.8 32.5l0 0.9M19.7 37l0 2.4M12.6 27.2l0.1 1.8M22.8 27.5l0 1.8M27 40.9l0.7 -1.1M20 32.8l1.4 0M23.6 34.5l0 2.8M25.2 41.5l1 2.2M18.2 33.1l0 2.4M25 36.9l-1.4 -1.2M30.1 41.7l0.9 0M18 42l1.9 0M18.6 37.9l2.5 0M34.5 40.5l0 1.4M31.7 41.3l-1.3 1.6M35.3 26.6l0 2.3M10.5 42.1l0 2.4M15.5 29.5l0 2M29.4 29.5l1.6 0M27.3 32.6l0 1.1M7.5 39.3l1.1 0M35 38.5l0 2.5M25.5 34.1l3.1 0M18.1 38.1l1.7 0M17.2 40.6l1.9 0M22.8 29.6l-2.2 0.6M20.8 29.6l2.2 0M8.5 35.1l0 2.7M16.5 31.8l0 0.9M11.8 28.1l2.8 0M13 27.3l1.1 0M19.1 40.7l0 2.5M23.6 26.8l0 2.2M8.8 29.2l2.8 0M23 38.7l0 1.5M16.2 43.8l0 2.7M6.7 35.3l1.2 0.4M11.7 44.1l0 3.1M31.5 39.8l1.2 0M17 38.7l1.7 0M32.4 26.1l0 1M16.4 41.3l-1.6 -0.9M9.3 38.6l1.4 0M18.1 42.8l2.5 0M26.6 34.8l1.7 0M12.2 35.2l0 1.6M11.8 43.8l1.3 0M6.7 29.4l-0.7 0.7M13.3 38.4l2.6 0M23.3 32.7l0 2.2M33.4 39.2l1.6 0M35.4 42.4l0 2.4M31.4 38.9l1.7 -1.1M38.9 31.7l0 3.1M11.2 33.1l1.5 0M14.5 41.4l2.6 0M32 43l1.4 2.1M22.3 39.5l3.1 0" stroke="#151515" stroke-width="0.8" fill="none"/><path d="M37.2 27l0 2.8M12 26.8l1.5 0M35 27.9l-0.7 0.4M36.4 32.7l0.8 -1.8M34.7 31.7l0 1.2M33.7 31.6l1.1 1.8M24.5 32.8l1.3 0M37.2 28.8l1.8 0.6M10.6 34.2l1.2 0M7.6 31.1l0 2.7M22.5 30.9l2.1 0M35.9 28.7l0 2M15.7 31.8l1.7 0M27.9 31l0 2.8M17.6 30l2.7 0M37 30.9l1 0M35.2 27.3l1.5 0M16.7 29.3l0 0.9M23.5 33.9l1.2 0M28.6 26l2.5 0M36 30.3l0 0.1M25.1 35.9l-0.1 0.9M27 29.2l1.3 0.4M36.7 25.7l2.1 0M17.1 27.3l1.7 0M14.8 25.9l-0.6 -1.5M13.1 28.2l-1.3 -0.9M9.2 30.4l0 1.5M30 35.2l-1.8 -0.5M33.7 25.8l0 1.8M18.5 33.4l-0.1 -1M13.5 28.3l0 2.1M11.1 34.8l0.9 0M22.3 31.8l0 1.8M7 33.5l0 2.1M38.1 34.4l0 1.9M10.6 29.1l1.2 -1.9M18.4 32.2l0 2.4M35.1 31.3l0 2.5M22.7 27.5l0 1.1M33.3 30.9l2.4 0M37.7 27.5l2.5 0M30.8 29.6l1.2 0M11.3 26l0 1.3M22.9 35.7l0 1.9M34.2 31.8l2.3 0M6.7 35.5l2.4 0M32.9 26.5l0 1.2M22.5 35.4l-0.3 0.5M30.1 29l1.7 0.9M35.4 33.9l1.4 0M15.2 28l0 2.7M15.7 25.8l0 1M20.5 29l0 1.8M19.5 29.2l-0.8 0.2M34.6 35.6l0 0.9M37 30.9l0 1.1M13.8 28.8l0 0.9M38.4 34.1l0 1.8M32.1 30.8l0 1.5M18.4 35.1l1.7 0M26.6 26l2.4 0M27.9 29.3l0 0.8M8.7 27.1l2.4 0M13.1 30.5l2.1 0M6.7 35.2l1.4 0M13.8 32.7l-0.6 -0.4M24.2 27.3l2.6 0M24.1 34.1l0 2.5M31.5 27.9l2.2 0" stroke="#151515" stroke-width="1.1" fill="none"/><rect x="2.4" y="46.7" width="39.7" height="7" fill="url(#g1)"/><text x="22.2" y="51.7" font-family="'Liberation Serif',serif" font-size="4.1" fill="#2e1c0c" text-anchor="middle" font-weight="bold" letter-spacing="0.15">COLLECTION</text><text x="22.2" y="9.8" font-family="'Liberation Serif',serif" font-size="3.1" fill="#1a1a1a" text-anchor="middle" font-weight="bold" font-style="italic" transform="rotate(-5 22 9)">Premium Quality</text><text x="22.2" y="21.1" font-family="'Liberation Serif',serif" font-size="9.8" fill="#111" text-anchor="middle" font-weight="bold" letter-spacing="-0.1">Wine</text><text x="22.2" y="59.4" font-family="'Liberation Serif',serif" font-size="2.9" fill="#1a1a1a" text-anchor="middle" font-weight="bold" font-style="italic">Vintage of Wine</text><text x="22.2" y="63.2" font-family="'Liberation Serif',serif" font-size="2.6" fill="#1a1a1a" text-anchor="middle" font-weight="bold">12</text></g>
<g transform="translate(358.8 160)"><path d="M22.2 2.6C15.4 3.6 9.4 7.4 6.4 12.4V13.8H3V61.2L6.6 63.4L7.6 66.4H36.8L37.8 63.4L41.4 61.2V13.8H38V12.4C35 7.4 29 3.6 22.2 2.6Z" fill="#fff" stroke="#fff" stroke-width="5.2" stroke-linejoin="round"/><path d="M22.2 2.6C15.4 3.6 9.4 7.4 6.4 12.4V13.8H3V61.2L6.6 63.4L7.6 66.4H36.8L37.8 63.4L41.4 61.2V13.8H38V12.4C35 7.4 29 3.6 22.2 2.6Z" fill="#260c11" stroke="#d6aa2c" stroke-width="1.6" stroke-linejoin="round"/><path d="M16.3 30.9l0 2.2M19.3 30.9l0 2.3M19.5 52.9l1.1 0M28.9 42.7l2.8 0M18.2 27.7l-0.4 -1.2M23.9 39.8l-1.1 -1.1M30 46.2l1.3 -0.6M20.9 56.3l-1.8 0.9M36.8 49.8l0 2.4M33.5 33.8l1.2 0M17 38.8l0 1.6M31.5 56.3l1.9 1.9M35 37.7l0 2M29.1 50.6l0 1.2M38.1 48l1 0M25.6 58.9l2.8 0M20.7 42.9l-0.2 1.1M29.5 31.1l0 2.8M18.9 33.8l0 2.2M36.5 43.6l2.4 0M22.7 40l2.1 0M16.9 30.9l0 2.3M32.6 61.1l-1 1M39.6 39.2l0 1.6M22.8 33.2l0 1M36.8 28.7l1.2 0M20.6 55.7l0 1.2M26.9 51.3l2.5 0M25.6 45.3l-0.2 0.9M27.2 31.7l0 2.4M33.9 60l2 0M20 56.9l0 1.6M19.4 40.3l0 1.7M33.1 46l0 2.4M33.6 56l0 2M37.5 36.1l0 2.4M24.7 41l-0.5 -1.2M21.1 39.1l1.5 0M34.5 29.3l0 2M27.5 44.5l-0.9 -1.2M16.8 43.9l0 1.7M16.1 27l0 2.3M23.2 58.9l1.6 0M34.7 35.2l2.5 0M29 38.2l0 1.9M20.5 40.1l2.7 0M32.2 45.2l-0.8 -0.4M32.3 46.4l0 1.6M35.8 35.5l-1.8 1.8M32.4 38.3l1.2 -1.7M22 44.2l-1.4 -1.8M23.5 28.6l1.9 0M26.6 31.9l0 2.4M26.6 43.8l2.2 0M37.6 55.9l-0.6 -1.3M18.2 57.1l0 1.9M37.8 38.3l0 1.6M38.7 50.9l-1.8 0.9M26.8 41.1l0.9 1.6M33.7 58.9l1.9 0M34.8 42.9l0 2M36.9 57.5l0 1.6M21.5 38.9l-0.3 -0.7M22.5 42.4l1.5 0M20.5 34.9l0 2.6M20.1 53.4l0 2.4M22.4 54.3l1 0M18.3 55l1.8 0M24.5 51.2l0.9 0M30.4 38l0.2 1.1M18.9 51.7l2.5 0M37.2 46.3l2.3 0M22.3 46.1l0.4 0.2M36.5 61.1l0 0.9M30.7 32.2l-0.1 0.1M35.6 57.4l0 1.7M20.3 43.1l0 2.6M24.5 40.6l1.3 -0.6M28 50.2l0 1.1M36.6 32.7l0.9 0.4M24.3 57l-1.7 1.6M31.3 37.1l0 1M35.5 56.7l0 1.2M17.8 41.5l0 0.9M23.1 55.7l0 1.6M28.3 32.7l0 0.9M19.5 61.1l0.8 1.6M23.8 35.7l0.4 1.7M24.6 41.5l1.5 -1.3M22.3 27.5l2.6 0M29.6 32.2l2.1 0M18.5 59l1.8 0M24.3 32.6l1.5 0M21.6 49.6l2.7 0M39.2 43.3l-0.5 -0.3M29.6 61.3l0 1.7M24.1 55.2l-0.1 -1.6M30.3 47.6l2.4 0M27.1 46.2l-1.9 -1M32.5 61.2l-0.9 1.9M22.7 42.8l0 2M25.4 51l-1.5 0.6M30.4 36.6l0 2.7M32.7 48.9l0 2.6M25.6 43.3l1.7 0M38.9 43.4l2.3 0M38.4 33l0 2.7M30.5 40l-1.5 -1M17.7 50.5l1.4 0M26.5 35.9l1 -0.5" stroke="#6d2a30" stroke-width="1" fill="none" opacity="0.9"/><path d="M6.3 27.4l0 2.6M13.4 35.5l0 1.8M19.3 32.4l1.5 -0.5M5 36.1l0 0.8M17.4 37.5l1.8 -1.2M6.4 25.9l-1.5 -1.3M5.3 24.8l0 1.5M7.8 29l-1.3 1.2M17.6 33.1l2.3 0M15 27.7l0 1.3M11.8 39.8l0.9 0M13.1 37l2.2 0M6.5 25l0.9 0M10.1 30.2l0 0.9M5.1 39.2l2.7 0M13.4 39.3l0.5 0.1M13.6 27.6l0 2.2M8.3 37.6l2 0M19 34.3l0 1.3M5 24.4l0.4 1.8M18.3 29.1l1.7 -0.2M6.4 29.1l0 1.5M6.4 35.4l-1.1 1.1M14.9 31.7l-0.5 1.3M5.6 39.4l0 0.8M20 35.5l2.3 0" stroke="#6d2a30" stroke-width="0.9" fill="none" opacity="0.8"/><circle cx="22.2" cy="10" r="4.7" fill="#d2a62a"/><path d="M19.9 7.8H24.5C24.5 10 23.6 10.9 22.6 11.2V12.6H23.6V13.2H20.8V12.6H21.8V11.2C20.8 10.9 19.9 10 19.9 7.8Z" fill="#260c11"/><text x="22.2" y="22.9" font-family="'Liberation Sans',sans-serif" font-size="3.9" fill="#e5dcc6" text-anchor="middle" font-weight="bold" letter-spacing="0.55">PRODUCED</text><text x="22.2" y="27.8" font-family="'Liberation Sans',sans-serif" font-size="3.9" fill="#e5dcc6" text-anchor="middle" font-weight="bold" letter-spacing="0.6">NAME</text><text x="22.4" y="44.6" font-family="'Liberation Serif',serif" font-size="14.2" fill="#d8bf3c" text-anchor="middle" font-weight="bold" font-style="italic" letter-spacing="-0.25">Wine</text><text x="22.2" y="53" font-family="'Liberation Serif',serif" font-size="3.4" fill="#d9cdbd" text-anchor="middle" font-weight="bold" font-style="italic">Alcohol</text><text x="22.2" y="60.7" font-family="'Liberation Serif',serif" font-size="2.8" fill="#d2a62a" text-anchor="middle" font-weight="bold">Premium quality</text></g>
<g transform="translate(233 230.8)"><path d="M3.2 23C3.2 10.4 12.4 2.9 23.35 2.9C34.3 2.9 43.5 10.4 43.5 23V65.2H3.2Z" fill="#fff" stroke="#fff" stroke-width="6.2" stroke-linejoin="round"/><path d="M3.2 23C3.2 10.4 12.4 2.9 23.35 2.9C34.3 2.9 43.5 10.4 43.5 23V65.2H3.2Z" fill="#1f0b0d" stroke="url(#g4)" stroke-width="2.1" stroke-linejoin="round"/><g fill="none" stroke="#c79a2a" stroke-width="0.65"><circle cx="13.9" cy="22.9" r="1.5"/><circle cx="17.8" cy="30.7" r="1.5"/><circle cx="17.3" cy="25.5" r="1.5"/><circle cx="20.8" cy="28.8" r="1.5"/><circle cx="21.7" cy="30.2" r="1.5"/><circle cx="22.9" cy="26.5" r="1.5"/><circle cx="19.3" cy="29.6" r="1.5"/><circle cx="20.7" cy="31.4" r="1.5"/><circle cx="8.9" cy="30.4" r="1.5"/><circle cx="18.6" cy="29.3" r="1.5"/><circle cx="23" cy="24.1" r="1.5"/><circle cx="9.3" cy="30.4" r="1.5"/><circle cx="14.4" cy="30.3" r="1.5"/><circle cx="16.1" cy="25.7" r="1.5"/><circle cx="15.4" cy="31.4" r="1.5"/><circle cx="14.8" cy="31.7" r="1.5"/><circle cx="17" cy="34" r="1.5"/><circle cx="19.3" cy="24.5" r="1.5"/><circle cx="23.6" cy="31.8" r="1.5"/><circle cx="8.6" cy="30.2" r="1.5"/><circle cx="19.3" cy="31.7" r="1.5"/><circle cx="18.4" cy="26.1" r="1.5"/><circle cx="11.2" cy="26.4" r="1.5"/><circle cx="20.8" cy="30.6" r="1.5"/><circle cx="14.5" cy="26.7" r="1.5"/><circle cx="10.6" cy="30.7" r="1.5"/><circle cx="11.9" cy="34.3" r="1.5"/><circle cx="12.9" cy="34.7" r="1.5"/><circle cx="13.9" cy="34" r="1.5"/><circle cx="21.1" cy="31.4" r="1.5"/><circle cx="11.1" cy="28.6" r="1.5"/><circle cx="9.5" cy="24.6" r="1.5"/><circle cx="11" cy="30.5" r="1.5"/><circle cx="18.2" cy="31.1" r="1.5"/><circle cx="17.3" cy="27.5" r="1.5"/><circle cx="18" cy="35" r="1.5"/><circle cx="18.9" cy="27.7" r="1.5"/><circle cx="19.2" cy="22" r="1.5"/><circle cx="36.9" cy="32.9" r="1.3"/><circle cx="27.1" cy="28.4" r="1.3"/><circle cx="34.9" cy="25.8" r="1.3"/><circle cx="36.2" cy="35.1" r="1.3"/><circle cx="28.3" cy="34" r="1.3"/><circle cx="35.2" cy="33.6" r="1.3"/><circle cx="34.8" cy="25" r="1.3"/><circle cx="38" cy="31.3" r="1.3"/><circle cx="29.6" cy="28.2" r="1.3"/><circle cx="34.9" cy="23.8" r="1.3"/><circle cx="28.7" cy="27.8" r="1.3"/><circle cx="27.1" cy="28.1" r="1.3"/><circle cx="36.7" cy="31.6" r="1.3"/><circle cx="28.9" cy="33.2" r="1.3"/><circle cx="30.8" cy="26" r="1.3"/><circle cx="28.6" cy="34.2" r="1.3"/><circle cx="29.3" cy="34.3" r="1.3"/><circle cx="35.8" cy="28.7" r="1.3"/><circle cx="37.5" cy="31.9" r="1.3"/><circle cx="33.9" cy="29.6" r="1.3"/><circle cx="36.3" cy="28" r="1.3"/><circle cx="34.5" cy="31.8" r="1.3"/><circle cx="33.3" cy="32.4" r="1.3"/><circle cx="38" cy="34" r="1.3"/><path d="M22 22C26 18 30 17 33.5 14.6M30 17L33 24M27 19L24 27M31 20C35 21 38 23 40 27M33.5 14.6L35 20"/></g><rect x="4.2" y="37.2" width="38.3" height="14.4" fill="url(#g2)"/><text x="23" y="48.4" font-family="'Liberation Serif',serif" font-size="11.8" fill="#33200a" text-anchor="middle" font-style="italic" letter-spacing="-0.2">Wine</text><path d="M22.6 5.2C23.9 5.6 23.9 7 22.9 7.6C23.9 8.2 23.7 9.2 23.2 9.6" fill="none" stroke="#c79a2a" stroke-width="0.8"/><text x="23.4" y="11.8" font-family="'Liberation Serif',serif" font-size="2.9" fill="#c79a2a" text-anchor="middle" font-weight="bold">Wine Bar</text><text x="23.4" y="56.5" font-family="'Liberation Serif',serif" font-size="3.3" fill="#b8922a" text-anchor="middle" font-weight="bold" letter-spacing="0.45">COLLECTION</text><text x="23.4" y="61.4" font-family="'Liberation Serif',serif" font-size="3.3" fill="#d8c9a0" text-anchor="middle" font-style="italic">Vintage</text></g>
<g transform="translate(297.1 230.8)"><path d="M21.65 4C15 4.8 9.4 7.6 6.2 12V13H2.6V64.9H40.7V13H37.1V12C33.9 7.6 28.3 4.8 21.65 4Z" fill="#fff" stroke="#fff" stroke-width="5.0" stroke-linejoin="round"/><path d="M21.65 4C15 4.8 9.4 7.6 6.2 12V13H2.6V64.9H40.7V13H37.1V12C33.9 7.6 28.3 4.8 21.65 4Z" fill="#5c1b1c" stroke="#c6a05a" stroke-width="1.1" stroke-linejoin="round"/><path d="M14.2 16.8l0 2.3M13.8 17.7l-0.4 1.7M28.5 17.6l1.9 0M17.6 24.9l2.6 0M14.6 16.4l-1.2 0.4M17.8 21.5l1 -1.1M29.4 15.8l-0.1 1.5M31.3 22l1.1 0M19.2 11.9l-1.4 1.5M23.2 11.5l0 1.6M10.5 21.1l2.6 0M31.4 21.5l1.6 0.5M22.9 17.2l1.5 1.2M19.4 10l1.8 0M23.5 22.7l0 2.1M24.2 12.1l-1.6 -0.1M22.7 18.4l0.2 1.4M15.7 16.5l0 2M19.4 21.5l0 1.6M26.4 19.7l0.2 0M27.7 19.6l-0.1 -1.8M29.8 13.2l1.8 1M18.8 22.7l0 1.4M23.8 19.3l1.8 0M19 20.8l0 1.9M32.5 12.1l0.9 0M29.5 14l0 1.3M34.4 21l0 2.5M9.1 16.5l2.2 0M11.2 22.1l0 2.1M34.3 18.3l0 2M19.8 20.6l-1.4 0.2M25.9 23.8l1.9 0M29.6 11.2l0.3 0.5M11.5 17.2l1.2 0M34.7 22.5l0.9 0M21.9 17.9l0.6 0.4M22.1 24.6l-0.5 1.1M34.9 16.6l0 0.9M30.6 11.8l0 1.1M20.9 21.9l0.8 0M15.8 10l2.2 0M15.9 10.8l0 1.7M29.4 19.8l1.5 0M7.9 16.9l2 0M7.5 16.6l0 1.8M19.8 14l0 2.5M21.1 10.3l2.2 0M21.4 23.2l0.7 -1.7M18.8 17l0 1.7M26.6 20.9l0.9 -0.7M25 16.8l-1.4 -1.2M28.1 20.5l0 2.2M29.8 19.2l0.9 0M13.8 21.2l-1.2 -1.7M17.3 24l0 2.5M30.1 22.4l0.6 -1.1M19.7 15.1l1.4 0M13.5 12.2l0 2.1M21 8.7l0 1.1M27.4 22.3l-0.8 -0.3M13.8 19.5l0 2.2M20.8 17.6l1.5 -0.8M28.4 13.1l0 2.3M12.6 13.2l1.3 -0.4M28 15.1l0 1.8M12.1 12l2 0M13.5 12.2l1.3 0M23.5 19.7l0 2.4M21.4 13.5l1.8 -0.2M15.1 12.2l1.1 1.4M29 14.1l0 2M17.9 17.5l1.2 0M7.6 20.8l1 -0.6M16.8 18.9l0 2.1M22.3 17.3l-1.4 -1.1M22.4 22.6l1.4 -1.1M16.3 12.7l0 1.1M11.5 22l2.5 0M25.4 21l0.2 -1M19 15.9l0 1.8M29.7 14l0 1M17.7 11.9l2.5 0M13.8 14.4l1.1 0M32.6 24.7l0 1.5M23.4 21.9l-1.1 1.6M24.6 20.7l0 0.9M21.1 24.7l0 2.6M20.4 24.1l0 1.8M12.1 20.8l1.9 0M18.4 22.9l-1.7 0.2M13.4 23.9l1.1 0.6M33.4 12.7l0 2.4M26.2 13.4l0.6 -1.8M34.6 20.7l-1.5 -1.8M9.3 21.1l0 1.3M16.6 15.3l0 1M22.2 9.7l1.3 0M28.5 9.8l1.9 0M33.7 18.6l1.3 -1.4M8.5 21.9l0 1.7M16.4 11.2l0 1.6M31.2 12.3l0 1.9M32.4 15.4l0 2.4M10.3 18.3l1.7 0M19.1 10.5l1.4 0.4M16 20.1l0 1M24.7 18l-0.3 -1.4M23.7 9.5l0 2.6M18 14.5l-1.5 1M28.5 23.6l0 1.6M18 8.8l0 1.1M9.1 20.1l-0.4 1.2M31.5 22.3l0 1.4M26.6 17.6l0 0.8M15.7 15.5l0 1.3M24.6 15.5l0.4 -0.3M19.7 22.5l1.8 -0.2M13 16.8l1.6 0M9.9 16.8l0 0.9" stroke="#b06a28" stroke-width="0.8" fill="none"/><path d="M35.4 14.6l-0.1 1.6M19.1 24.5l0 2.6M19.3 16.1l0 1.9M8.5 18.4l0 0.9M12.4 16.6l0 2.2M19.4 23.8l1.4 1.6M23.9 21.7l0.2 -1.3M22.3 20l0 1M12.8 22l0.6 -0.3M8.3 14l1.8 0M20.5 16l0 1.1M11.2 20.8l0 1.8M19.7 20.2l1 -1.3M34.9 23.7l-0.2 1.6M30.7 16.7l2.3 0M29 24.3l2 0M9.7 21.6l0 2.1M33.2 18.2l0 0.9M22.2 15.8l0.4 0M26.6 15.7l0.9 0M23.1 23l0 2M35.8 17.7l0 1.3M31.2 14.9l-0.9 0.9M32.8 23.7l0 1.8M16.5 24l0 1.1M19.1 15l0 2.1M16.8 16.1l-0.9 1.1M27 20.3l1.8 0M31.5 21.9l0 2M22 24.5l0 1.6M35.1 14.8l1.5 0.4M9.1 22.8l0 1.7M30.8 17.6l0 1M17.3 15.2l2.3 0M9.1 20l1 -0.9M22.6 21.8l2.6 0M33.4 25l0 0.8M24.3 20.6l0 1.2M29.9 23.1l0 1M28 18.8l0 2.5M16.9 14.9l1.5 0M25.9 22.7l0 1.6M33.2 19.5l1.5 1.1M26.1 15.3l-0.7 -0.7M21.9 20.1l0.1 1.5M29.9 21.4l0 1.9M21.8 22.6l0 2.2M27.8 16l-0.1 -0.2M17.1 18.4l1.5 -0.1M22.7 19.3l0 2.4M19.5 14.3l0 1.3M29.9 16l0 2.4M16.2 24.6l0 1M13.5 18.5l1.4 0M35 24.8l2.6 0M32.1 25.1l1 0M23.7 14.6l2.6 0M18.8 21.8l0.8 -0.4M22.1 15.4l0.5 -0.6M19.8 23.7l0 1.2" stroke="#b87230" stroke-width="1" fill="none"/><text x="21.6" y="32.4" font-family="'Liberation Serif',serif" font-size="4.4" fill="#d8c070" text-anchor="middle" font-weight="bold" letter-spacing="0.5">BORDEAUX</text><text x="21.6" y="36" font-family="'Liberation Serif',serif" font-size="2.7" fill="#d8c070" text-anchor="middle" font-weight="bold" letter-spacing="0.1">WINE CELLAR</text><path d="M4.5 41.4H38.8L36.4 44.8L38.8 48.2H4.5L6.9 44.8Z" fill="url(#g3)"/><text x="11.2" y="45.9" font-family="'Liberation Serif',serif" font-size="2.8" fill="#4a2210" text-anchor="middle" font-weight="bold">19</text><text x="32.1" y="45.9" font-family="'Liberation Serif',serif" font-size="2.8" fill="#4a2210" text-anchor="middle" font-weight="bold">85</text><circle cx="21.65" cy="44.6" r="5.4" fill="#c9a85e"/><circle cx="21.65" cy="44.6" r="4.1" fill="#6a2024" stroke="#8d6a2c" stroke-width="0.5"/><path d="M19.2 42.4H24.1L21.65 47.6Z" fill="#b7835a"/><text x="21.6" y="54" font-family="'Liberation Serif',serif" font-size="2.4" fill="#c77a2c" text-anchor="middle" font-weight="bold" letter-spacing="0.1">PREMIUM WINE</text><text x="21.6" y="57.4" font-family="'Liberation Serif',serif" font-size="2.7" fill="#c77a2c" text-anchor="middle" font-weight="bold" font-style="italic">Finest Selection</text><text x="21.6" y="60.6" font-family="'Liberation Serif',serif" font-size="2.7" fill="#c77a2c" text-anchor="middle" font-weight="bold" font-style="italic">Grand Reserve</text><path d="M9.2 61.3l1.8 0M11.5 57.4l0.7 1.1M4.9 53.8l0.8 -0.7M10.1 53.8l0 1.4M6.3 53.4l1.7 0M7 58.9l-1.4 -0.7M5.3 59l1.4 0M6.4 60.1l-0.2 1M6.3 55.6l-0.8 -1.1M4.8 59l-1.4 -0.1M7.5 55.4l0 1.3M5.6 61.6l0 1.5M9.3 58.8l1.5 0M11.5 53.8l0 1.2M10.1 56.4l0 0.9M5.5 58.8l0 1.4M6.4 55.2l0 2.1M9.2 57.1l0 2M8.8 53.4l0 2.1M7 56.3l0 2M6.4 57.9l0.1 -0.4M6.5 59.2l0 1.7M38.1 53.4l1.5 0M38.4 56l1.6 0M34.1 61.5l0.7 -1.4M38.6 57.7l1.6 0M35.1 61.7l0 1M38.7 54.7l0 1.4M37.9 55.9l0 1.2M33 52.2l0.7 -1.1M33.1 62.2l-0.2 0.2M38.6 54.5l0.8 0M34.9 54.4l0 1.4M34.5 61.3l0 0.8M37.5 61.6l-0.6 -0.4M37 52.8l0 1.5M33 56.8l0 2.1M35 55.6l0 1.2M37.1 60.3l1.3 0.3M34.1 56.4l0 1.3M34.9 61l0.9 0M35.3 55.5l1 0.3M36.2 56.4l0 1.9M37 57.8l1 0.6" stroke="#c77a2c" stroke-width="0.8" fill="none"/></g>
<g transform="translate(359.3 231.1)"><path d="M21.75 2.8C15.4 3.5 10.3 5.7 7.3 9.1V10.7L3.5 12.3V55.9L6.3 57.3V58.9C9.3 61.9 14.4 64.2 21.75 64.8C29.1 64.2 34.2 61.9 37.2 58.9V57.3L40 55.9V12.3L36.2 10.7V9.1C33.2 5.7 28.1 3.5 21.75 2.8Z" fill="#fff" stroke="#fff" stroke-width="5.4" stroke-linejoin="round"/><path d="M21.75 2.8C15.4 3.5 10.3 5.7 7.3 9.1V10.7L3.5 12.3V55.9L6.3 57.3V58.9C9.3 61.9 14.4 64.2 21.75 64.8C29.1 64.2 34.2 61.9 37.2 58.9V57.3L40 55.9V12.3L36.2 10.7V9.1C33.2 5.7 28.1 3.5 21.75 2.8Z" fill="url(#beige)" stroke="#c29a4c" stroke-width="1.4" stroke-linejoin="round"/><path d="M4.2 32.2H39.3V55.5L36.5 56.9V58.6C33.6 61.4 28.9 63.6 21.75 64.2C14.6 63.6 9.9 61.4 7 58.6V56.9L4.2 55.5Z" fill="#f0ebdc"/><path d="M5.6 32.4V56.4M7.2 32.4V56.4M8.8 32.4V56.4M10.4 32.4V61.6M12 32.4V61.6M13.6 32.4V61.6M15.2 32.4V61.6M16.8 32.4V61.6M18.4 32.4V61.6M20 32.4V61.6M21.6 32.4V61.6M23.2 32.4V61.6M24.8 32.4V61.6M26.4 32.4V61.6M28 32.4V61.6M29.6 32.4V61.6M31.2 32.4V61.6M32.8 32.4V61.6M34.4 32.4V61.6M36 32.4V56.4M37.6 32.4V56.4" stroke="#e2dac5" stroke-width="0.55" fill="none"/><path d="M4.2 31.9H39.3" stroke="#8b6a45" stroke-width="0.8"/><path d="M21.5 25.5l-0.8 -0.8M27.6 24.6l0 1.7M16.5 20.5l2.8 0M27.5 26.5l0 1.8M10.8 27.7l0 1.4M36.4 22.8l0.5 1.1M25.6 20.7l-1 -0.4M10.4 19.1l0 0.8M18.2 29.3l-0.3 -1.6M17 19.2l0 2.2M25.3 18.8l1.7 0M18.6 20.1l0 1M27.4 26.7l1.7 0M35.7 23.1l0 1.6M34.3 20.4l1.8 1.5M20.6 24.2l0.9 1.3M11.9 26.2l-1.1 -1.2M32.1 25.7l1.9 0M14.3 21.6l0 1.7M10.9 29.9l0.4 -1.7M24.7 20.4l0 1.1M21.6 19.4l0 1.3M20.7 30.3l2.5 0M28.6 25.2l0 0.9M10.5 25l0 2.8M12.5 20.1l2.1 0M8 22.8l2.6 0M30.2 29.6l2.9 0M20.8 22.1l0 2.6M26.3 26.3l0.6 -0.8M27.7 30.3l0 2.9M19.1 19.9l2.5 0M21.4 21.8l-1.7 0.7M17.5 26.2l1.4 0M12.7 28.9l1.4 0M24.5 28.2l0 1.8M11.1 28.2l0 2.6M23.5 25l1.4 0M20.2 20.6l0 2.1M25.1 22.6l2.5 0M30.1 18.4l1.2 0M31.5 25.9l2.1 0M22 21.1l-1.9 -2M15.4 20.2l0 2.2M18.3 30.8l0 2.9M36.4 25.4l-1.8 1.8M19.9 22.7l-0.4 -1.7M7.2 28.6l0 2.2M9.1 28.8l-0.6 1.2M33.9 21.4l3 0M35.5 25.6l0.8 0M31.8 30.5l1.3 0M10.3 26.5l2.1 0M32.1 18.9l0 1M15.9 19l0 1.3M31.3 25.1l0 1.9M11.1 31l0 1.3M23.9 29.8l1.1 0M25 27.9l0.6 -1M31.7 27.3l-1.3 1.4M21.1 21.2l0 1M33.8 20.2l1.4 0M14.1 22.9l-1.8 -0.5M16.4 24.6l2.7 0M25.8 29.3l1.3 -2M8.4 25.1l0 1.6M22.6 25.2l1.1 -1.2M23.9 24.5l2.4 0M28.3 27.5l0 1M24.3 21.6l0 1M8.7 24.1l0.5 -1M35.5 20.9l1 0M35.7 30.1l-0.5 -0.2M21.6 30.2l1.3 0M34.1 23.8l1.9 1.1M10.2 28.9l3 0M17.9 20.7l0 3M19.6 18.6l2.9 0M12.9 30.3l-1.2 -1.2M10.8 19.7l0 1.3M30.9 24l2.2 0M10.6 28.3l0 1.9M13.1 21.7l0 1.7M19.7 19.7l-0.7 0.7M12.2 18.9l-1.1 -2.1M34.8 23.8l0 2.2M16.7 30.8l0.7 0.8M16.2 30.1l-1.1 -1.9M8.3 25.1l2.6 0M34.1 23.3l1.7 0M34.1 21.2l0 1.2M34.6 20.6l-1.1 -0.5M11.9 30.9l0 1.2M27.6 24.6l0 1.8M33.7 20.3l1.3 0M21.6 23.3l1.5 0M6.8 21l-0.5 -1.6M9.7 27.7l0 2.9M22.4 19.2l0 2.2M36.6 30.1l0 2.1" stroke="#86705a" stroke-width="0.75" fill="none"/><path d="M34.3 22.1l-1 -0.1M33.4 23.7l1.1 0M35.3 29.5l0 1M20.9 25.2l-0.6 0.3M11.7 22.4l0 1.8M23.5 26.1l-0.7 -0.6M20.6 29.1l0 1.3M19.5 26.8l0 1.1M28.5 25.7l0.8 0M14.3 21.4l0 2.4M36.1 28.2l0 1.8M33.4 23.6l0 2.1M17.1 24.8l0 2.3M22.2 21.4l0 2M10.4 26.6l0 1.8M17.1 26.5l0 1.5M26.3 22.9l1.8 1.7M34.4 29.1l2.3 0M18.9 21.1l1.5 -0.9M18 22.6l-1.2 1.1M8.1 24.2l-0.1 -1.3M7.9 26.7l0 1.3M24.7 23.3l0 2.2M28.3 26.1l0 1.7M35.3 25.2l0 2.5M17.2 25.3l0 2.4M27.1 25.3l1.4 0M20.5 25.2l0 2.1M29.2 20.8l0 2.1M17.2 21.8l2.6 0M17.4 25.9l1.8 0M24.5 28.8l1.4 0.7M29.4 27.4l0.7 0.9M8.7 22l1.6 0M13.7 26.4l0 2.2M16.4 28.8l0 2.5M16.6 27.6l0 1.7M17.5 28.3l0.3 -1.4M22.4 22.7l0 2.1M23 29.6l-1.7 1.6" stroke="#7a634c" stroke-width="1" fill="none"/><path d="M20.9 4.8L21.8 7L23.1 5.2M21.8 7V8.4" fill="none" stroke="#5a4632" stroke-width="0.7"/><text x="21.8" y="10.9" font-family="'Liberation Serif',serif" font-size="2.9" fill="#3a3026" text-anchor="middle" font-weight="bold">Wine House</text><text x="21.8" y="13.4" font-family="'Liberation Serif',serif" font-size="2" fill="#5a4632" text-anchor="middle">· · ·</text><text x="21.6" y="45.4" font-family="'Liberation Serif',serif" font-size="13.8" fill="#a07f35" text-anchor="middle" font-style="italic" letter-spacing="-0.1">Wine</text><text x="21.8" y="51.1" font-family="'Liberation Serif',serif" font-size="3.8" fill="#4a3a2a" text-anchor="middle" letter-spacing="0.42">COLLECTION</text><text x="21.8" y="55.6" font-family="'Liberation Serif',serif" font-size="2.4" fill="#4a3a2a" text-anchor="middle" font-style="italic">vol</text><text x="21.8" y="57.8" font-family="'Liberation Serif',serif" font-size="2.2" fill="#4a3a2a" text-anchor="middle">12</text><text x="21.8" y="62.4" font-family="'Liberation Serif',serif" font-size="3.3" fill="#4b3b2a" text-anchor="middle" font-weight="bold" font-style="italic">Premium quality</text></g>
<g transform="translate(46.3 311.5)"><path d="M23.8 2.3C19.5 2.5 16.3 4.6 14.4 7C12.6 9.4 9.5 12 5 13.4C4.1 19 3.6 26 3.6 32C3.6 48 10 63 23.8 67.4C37.6 63 44 48 44 32C44 26 43.5 19 42.6 13.4C38.1 12 35 9.4 33.2 7C31.3 4.6 28.1 2.5 23.8 2.3Z" fill="#fff" stroke="#fff" stroke-width="6.0" stroke-linejoin="round"/><path d="M23.8 2.3C19.5 2.5 16.3 4.6 14.4 7C12.6 9.4 9.5 12 5 13.4C4.1 19 3.6 26 3.6 32C3.6 48 10 63 23.8 67.4C37.6 63 44 48 44 32C44 26 43.5 19 42.6 13.4C38.1 12 35 9.4 33.2 7C31.3 4.6 28.1 2.5 23.8 2.3Z" fill="#581a1c" stroke="#b3853a" stroke-width="1.4" stroke-linejoin="round"/><path d="M22.1 30.2l-0.1 0M26.8 19.4l1.9 0M33.9 16.7l0 1M34.4 34.1l0 2.6M39.8 33l1.1 0M7 29.3l0 1.1M14.8 14.9l1.6 0M35.6 29.1l1.7 0M29.4 27.3l0 2.6M40.9 38.4l-0.7 -1M16.5 16l-0.4 1.3M19.8 41.8l-1.8 -1.1M37.9 27.6l-0.4 -1.6M28.2 36.6l0 1M18 42l-1.4 -0.9M10 15.7l-1.2 0.2M21.9 19.5l-1.3 0.5M10.5 26.2l0 1.3M40 37.3l0 2.4M13.8 25.4l0.5 -1.5M40.6 20.2l0 2.2M17.8 22.6l0 1M26.6 21l1.5 0M22.1 41.8l1.8 0M36.4 19.3l0 2.4M34.7 21.2l0 2.1M38.9 19.7l1.4 0.4M21 17l0 2.5M14.7 34.4l0 2.3M27.1 22.5l0 2.1M8.9 20.6l2.3 0M27.7 22.1l-1.1 -1.8M15.8 26.9l0 1.1M19.2 30.6l0 1.5M37.2 42.4l2 0M26.7 18.1l0 0.8M37.9 34.3l-1.7 0.5M23.1 35.2l0 2.6M9.1 29.8l1.5 0.9M30.8 37l-0.5 0.7M37.6 39.3l2.2 0M36.3 30.6l1.5 0M26.6 31.7l0 2M40.8 39.5l-0.4 0.9M26.5 26.8l-1.5 0.9M7.5 31.4l1.2 0M30.6 28.4l2.5 0M15.3 14.3l0 2M13.5 18.9l0.6 -0.2M37.3 23.5l1.2 0M21.4 37.4l1.4 -0.4M26.6 23.2l0 1.7M35.4 38.6l1.6 -0.8M12.3 27.1l0 1.2M20.8 32.1l1.4 0M35.4 42.5l0.9 0M7.6 39.3l0 2.1M26.2 23l-1.8 -1.3M22.2 14.7l-1 -1.3M8.1 32.2l1.9 0M29.1 37.4l0.7 -1.1M22.9 19.2l0 1.6M31.1 19.2l0 1.4M30.6 29.1l2.2 0M20.1 37l-1.5 1.6M31.4 17.8l1.9 0M37.9 24.9l2.4 0M34 41.4l2 0M13.6 34.9l0.5 0.8M13.9 40.1l1.7 0.1M33.8 23.3l1.3 -0.6M9.4 26.8l2.2 0M23.3 14.8l-1.6 1.1M12.5 23.7l-1.3 -1.3M24.3 35l0.7 1.6M23.5 41.5l0 1.2M24.7 22.4l0.5 0.1M35.6 30.2l0 1.5M35.7 40.1l0 2.3M39.9 29.2l1.2 0M25 28.6l0.8 0M39.9 29l2.2 0M25.9 28.2l0.9 0M25.1 26l1.5 -0.8M22.8 17.7l2.3 0M37.6 27.8l0 1.1M27.8 40.8l0 2.2M7.3 19.6l0 2M17.6 24.3l1 0M31.7 17.6l1.3 0M13.3 29.4l1.5 0M20.8 29.4l0 1.2M28.3 32.5l2.3 0M27.6 38.8l0 2.1M34.5 40.2l0 1.4M38.3 20.3l1.4 -1.3M14.8 35.1l0 1M35.2 26.2l-1.4 -0.4M30.1 14.5l0 2M37.9 42.1l0 1.7" stroke="#340e10" stroke-width="1.2" fill="none" opacity="0.8"/><path d="M4.6 43.9H43C42.4 47.2 41.4 50.3 40 53.1H7.6C6.2 50.3 5.2 47.2 4.6 43.9Z" fill="url(#g1)"/><text x="23.8" y="50" font-family="'Liberation Serif',serif" font-size="4.2" fill="#3b2412" text-anchor="middle" font-weight="bold" letter-spacing="0.2">COLLECTION</text><path d="M21.9 6H25.7L24.3 8.2V9.4H23.3V8.2Z" fill="#b8822f"/><text x="23.8" y="12.2" font-family="'Liberation Serif',serif" font-size="2.6" fill="#c08a3a" text-anchor="middle" font-weight="bold">Wine House</text><text x="23.8" y="14.2" font-family="'Liberation Serif',serif" font-size="1.8" fill="#c08a3a" text-anchor="middle">· · · ·</text><text x="23.8" y="27.3" font-family="'Liberation Serif',serif" font-size="9.3" fill="#dccb98" text-anchor="middle" font-weight="bold" letter-spacing="0.45">RED</text><text x="23.8" y="37" font-family="'Liberation Serif',serif" font-size="9.3" fill="#dccb98" text-anchor="middle" font-weight="bold" letter-spacing="0.45">WINE</text><text x="23.8" y="57" font-family="'Liberation Serif',serif" font-size="3.1" fill="#c77d2d" text-anchor="middle" font-weight="bold" font-style="italic">Premium Quality</text><text x="23.8" y="59.8" font-family="'Liberation Serif',serif" font-size="2.2" fill="#c77d2d" text-anchor="middle">• • •</text><text x="23.8" y="62.4" font-family="'Liberation Serif',serif" font-size="2.1" fill="#c77d2d" text-anchor="middle">2019</text></g>
<g transform="translate(110.8 311.4)"><path d="M3.3 22.8C3.3 10.6 11.4 2.8 22.25 2.8C33.1 2.8 41.2 10.6 41.2 22.8V46C41.2 58.2 33.1 66 22.25 66C11.4 66 3.3 58.2 3.3 46Z" fill="#fff" stroke="#fff" stroke-width="6.6" stroke-linejoin="round"/><path d="M3.3 22.8C3.3 10.6 11.4 2.8 22.25 2.8C33.1 2.8 41.2 10.6 41.2 22.8V46C41.2 58.2 33.1 66 22.25 66C11.4 66 3.3 58.2 3.3 46Z" fill="#ece4c8" stroke="#b08335" stroke-width="2.1" stroke-linejoin="round"/><path d="M11.1 39.2l1.9 0M12.8 41.3l0.1 0M13.5 25.1l0 2.2M7.9 41.4l0 1.4M7 45.5l1.7 0.5M6.7 31.8l1.1 0M37.4 32.6l0 2.8M9.8 44.1l2.1 0M17.1 35l0 0.9M34.5 29.8l-1.3 2.1M35.5 40.5l0.4 1M9.7 34.8l-1.3 1.9M35.2 33.4l0 1.9M18.5 45.5l0 0.9M8.7 39.8l0 0M24 40.4l0 2.3M24.2 37.8l0 1.2M17.2 44.1l0 2.2M15.8 27.1l0 2.8M31.6 32.7l2.4 0M35.6 44.7l3.2 0M37.7 37.2l0 -0.6M13.9 43l0 1M32.5 40.9l2.8 0M7.3 30.3l0 1.8M11.3 26.4l0 3M38.4 40.4l1.4 0M37.6 35.8l-2.1 -1.3M33.6 41.4l0.5 -0.3M25 42.5l0 2.1M14.8 40.8l0 2.4M37.5 25.5l2.3 0M34 37l0 1.8M37.6 43.7l0 1M8.7 25.5l1.1 0M34.6 38.5l0 2.1M16.4 35.2l0 1.2M11.7 32.8l0.2 -2M29.3 43l1.3 -2.2M21.1 26.3l-1.5 0.9M14 39.4l0 0.9M18.6 31.4l-0.9 0M23.9 44.5l0 2.2M22.6 40.1l-0.9 0.9M23.2 36.5l0 2.8M38.2 32.3l0 3.2M9.2 26.6l0 2.8M31 34.2l0.8 0M27.1 34.1l1.7 0M19 29.6l0 1.8M13.9 39.5l1 -0.2M13.5 32.9l2.3 0M37.8 26.8l2 0M29.6 43.3l0.6 1.2M27.9 42.7l2.4 0M13.8 43.9l0 2.3M33.1 44.9l-2.2 -0.8M16 33.1l0 2.1M8.3 31.2l1.1 -0.2M9.2 44.7l-1.3 -0.7M27 39l0 3.1M16.4 30.2l-1.6 0.8M12.3 37.3l0 1.7M37 34.6l2.3 0M15 28.6l0 1.5M11.9 44.8l0 2.7M36.8 39.5l0 2M6.9 37.5l-1.2 -2.2M23.8 26.9l0 1.9M35.5 32.6l0 2.7M33.1 35.9l0 1.3M19.1 36.4l0 2.7M33.8 44.1l-2.2 0.4M8.3 43.5l1.2 -1.4M7.6 41.8l2.3 0M21.3 41.5l0 1.4M17.4 31.1l2.9 0M8 26.4l2.4 0M11.9 30.6l0 0.9M22.1 39l1.2 0M9.1 44.2l1.8 0M28.7 40l1 0M33.2 29.4l0 1.6M23.4 37.9l0 2.5M22.1 28.3l1.4 1.8M28.3 29.5l1.8 0.1M35.9 45l0 3.1M36.9 41.4l0 1.6M26.1 37.5l0.7 -1.5M36.7 36l-1.3 2.2M24.1 41l1.7 -0.6M8.4 33.4l0 2.1M32.8 32.5l0 0.9M19.7 37l0 2.4M12.6 27.2l0.1 1.8M22.8 27.5l0 1.8M27 40.9l0.7 -1.1M20 32.8l1.4 0M23.6 34.5l0 2.8M25.2 41.5l1 2.2M18.2 33.1l0 2.4M25 36.9l-1.4 -1.2M30.1 41.7l0.9 0M18 42l1.9 0M18.6 37.9l2.5 0M34.5 40.5l0 1.4M31.7 41.3l-1.3 1.6M35.3 26.6l0 2.3M10.5 42.1l0 2.4M15.5 29.5l0 2M29.4 29.5l1.6 0M27.3 32.6l0 1.1M7.5 39.3l1.1 0M35 38.5l0 2.5M25.5 34.1l3.1 0M18.1 38.1l1.7 0M17.2 40.6l1.9 0M22.8 29.6l-2.2 0.6M20.8 29.6l2.2 0M8.5 35.1l0 2.7M16.5 31.8l0 0.9M11.8 28.1l2.8 0M13 27.3l1.1 0M19.1 40.7l0 2.5M23.6 26.8l0 2.2M8.8 29.2l2.8 0M23 38.7l0 1.5M16.2 43.8l0 2.7M6.7 35.3l1.2 0.4M11.7 44.1l0 3.1M31.5 39.8l1.2 0M17 38.7l1.7 0M32.4 26.1l0 1M16.4 41.3l-1.6 -0.9M9.3 38.6l1.4 0M18.1 42.8l2.5 0M26.6 34.8l1.7 0M12.2 35.2l0 1.6M11.8 43.8l1.3 0M6.7 29.4l-0.7 0.7M13.3 38.4l2.6 0M23.3 32.7l0 2.2M33.4 39.2l1.6 0M35.4 42.4l0 2.4M31.4 38.9l1.7 -1.1M38.9 31.7l0 3.1M11.2 33.1l1.5 0M14.5 41.4l2.6 0M32 43l1.4 2.1M22.3 39.5l3.1 0" stroke="#151515" stroke-width="0.8" fill="none"/><path d="M37.2 27l0 2.8M12 26.8l1.5 0M35 27.9l-0.7 0.4M36.4 32.7l0.8 -1.8M34.7 31.7l0 1.2M33.7 31.6l1.1 1.8M24.5 32.8l1.3 0M37.2 28.8l1.8 0.6M10.6 34.2l1.2 0M7.6 31.1l0 2.7M22.5 30.9l2.1 0M35.9 28.7l0 2M15.7 31.8l1.7 0M27.9 31l0 2.8M17.6 30l2.7 0M37 30.9l1 0M35.2 27.3l1.5 0M16.7 29.3l0 0.9M23.5 33.9l1.2 0M28.6 26l2.5 0M36 30.3l0 0.1M25.1 35.9l-0.1 0.9M27 29.2l1.3 0.4M36.7 25.7l2.1 0M17.1 27.3l1.7 0M14.8 25.9l-0.6 -1.5M13.1 28.2l-1.3 -0.9M9.2 30.4l0 1.5M30 35.2l-1.8 -0.5M33.7 25.8l0 1.8M18.5 33.4l-0.1 -1M13.5 28.3l0 2.1M11.1 34.8l0.9 0M22.3 31.8l0 1.8M7 33.5l0 2.1M38.1 34.4l0 1.9M10.6 29.1l1.2 -1.9M18.4 32.2l0 2.4M35.1 31.3l0 2.5M22.7 27.5l0 1.1M33.3 30.9l2.4 0M37.7 27.5l2.5 0M30.8 29.6l1.2 0M11.3 26l0 1.3M22.9 35.7l0 1.9M34.2 31.8l2.3 0M6.7 35.5l2.4 0M32.9 26.5l0 1.2M22.5 35.4l-0.3 0.5M30.1 29l1.7 0.9M35.4 33.9l1.4 0M15.2 28l0 2.7M15.7 25.8l0 1M20.5 29l0 1.8M19.5 29.2l-0.8 0.2M34.6 35.6l0 0.9M37 30.9l0 1.1M13.8 28.8l0 0.9M38.4 34.1l0 1.8M32.1 30.8l0 1.5M18.4 35.1l1.7 0M26.6 26l2.4 0M27.9 29.3l0 0.8M8.7 27.1l2.4 0M13.1 30.5l2.1 0M6.7 35.2l1.4 0M13.8 32.7l-0.6 -0.4M24.2 27.3l2.6 0M24.1 34.1l0 2.5M31.5 27.9l2.2 0" stroke="#151515" stroke-width="1.1" fill="none"/><rect x="2.4" y="46.7" width="39.7" height="7" fill="url(#g1)"/><text x="22.2" y="51.7" font-family="'Liberation Serif',serif" font-size="4.1" fill="#2e1c0c" text-anchor="middle" font-weight="bold" letter-spacing="0.15">COLLECTION</text><text x="22.2" y="9.8" font-family="'Liberation Serif',serif" font-size="3.1" fill="#1a1a1a" text-anchor="middle" font-weight="bold" font-style="italic" transform="rotate(-5 22 9)">Premium Quality</text><text x="22.2" y="21.1" font-family="'Liberation Serif',serif" font-size="9.8" fill="#111" text-anchor="middle" font-weight="bold" letter-spacing="-0.1">Wine</text><text x="22.2" y="59.4" font-family="'Liberation Serif',serif" font-size="2.9" fill="#1a1a1a" text-anchor="middle" font-weight="bold" font-style="italic">Vintage of Wine</text><text x="22.2" y="63.2" font-family="'Liberation Serif',serif" font-size="2.6" fill="#1a1a1a" text-anchor="middle" font-weight="bold">12</text></g>
<g transform="translate(172.8 311.1)"><path d="M22.2 2.6C15.4 3.6 9.4 7.4 6.4 12.4V13.8H3V61.2L6.6 63.4L7.6 66.4H36.8L37.8 63.4L41.4 61.2V13.8H38V12.4C35 7.4 29 3.6 22.2 2.6Z" fill="#fff" stroke="#fff" stroke-width="5.2" stroke-linejoin="round"/><path d="M22.2 2.6C15.4 3.6 9.4 7.4 6.4 12.4V13.8H3V61.2L6.6 63.4L7.6 66.4H36.8L37.8 63.4L41.4 61.2V13.8H38V12.4C35 7.4 29 3.6 22.2 2.6Z" fill="#260c11" stroke="#d6aa2c" stroke-width="1.6" stroke-linejoin="round"/><path d="M16.3 30.9l0 2.2M19.3 30.9l0 2.3M19.5 52.9l1.1 0M28.9 42.7l2.8 0M18.2 27.7l-0.4 -1.2M23.9 39.8l-1.1 -1.1M30 46.2l1.3 -0.6M20.9 56.3l-1.8 0.9M36.8 49.8l0 2.4M33.5 33.8l1.2 0M17 38.8l0 1.6M31.5 56.3l1.9 1.9M35 37.7l0 2M29.1 50.6l0 1.2M38.1 48l1 0M25.6 58.9l2.8 0M20.7 42.9l-0.2 1.1M29.5 31.1l0 2.8M18.9 33.8l0 2.2M36.5 43.6l2.4 0M22.7 40l2.1 0M16.9 30.9l0 2.3M32.6 61.1l-1 1M39.6 39.2l0 1.6M22.8 33.2l0 1M36.8 28.7l1.2 0M20.6 55.7l0 1.2M26.9 51.3l2.5 0M25.6 45.3l-0.2 0.9M27.2 31.7l0 2.4M33.9 60l2 0M20 56.9l0 1.6M19.4 40.3l0 1.7M33.1 46l0 2.4M33.6 56l0 2M37.5 36.1l0 2.4M24.7 41l-0.5 -1.2M21.1 39.1l1.5 0M34.5 29.3l0 2M27.5 44.5l-0.9 -1.2M16.8 43.9l0 1.7M16.1 27l0 2.3M23.2 58.9l1.6 0M34.7 35.2l2.5 0M29 38.2l0 1.9M20.5 40.1l2.7 0M32.2 45.2l-0.8 -0.4M32.3 46.4l0 1.6M35.8 35.5l-1.8 1.8M32.4 38.3l1.2 -1.7M22 44.2l-1.4 -1.8M23.5 28.6l1.9 0M26.6 31.9l0 2.4M26.6 43.8l2.2 0M37.6 55.9l-0.6 -1.3M18.2 57.1l0 1.9M37.8 38.3l0 1.6M38.7 50.9l-1.8 0.9M26.8 41.1l0.9 1.6M33.7 58.9l1.9 0M34.8 42.9l0 2M36.9 57.5l0 1.6M21.5 38.9l-0.3 -0.7M22.5 42.4l1.5 0M20.5 34.9l0 2.6M20.1 53.4l0 2.4M22.4 54.3l1 0M18.3 55l1.8 0M24.5 51.2l0.9 0M30.4 38l0.2 1.1M18.9 51.7l2.5 0M37.2 46.3l2.3 0M22.3 46.1l0.4 0.2M36.5 61.1l0 0.9M30.7 32.2l-0.1 0.1M35.6 57.4l0 1.7M20.3 43.1l0 2.6M24.5 40.6l1.3 -0.6M28 50.2l0 1.1M36.6 32.7l0.9 0.4M24.3 57l-1.7 1.6M31.3 37.1l0 1M35.5 56.7l0 1.2M17.8 41.5l0 0.9M23.1 55.7l0 1.6M28.3 32.7l0 0.9M19.5 61.1l0.8 1.6M23.8 35.7l0.4 1.7M24.6 41.5l1.5 -1.3M22.3 27.5l2.6 0M29.6 32.2l2.1 0M18.5 59l1.8 0M24.3 32.6l1.5 0M21.6 49.6l2.7 0M39.2 43.3l-0.5 -0.3M29.6 61.3l0 1.7M24.1 55.2l-0.1 -1.6M30.3 47.6l2.4 0M27.1 46.2l-1.9 -1M32.5 61.2l-0.9 1.9M22.7 42.8l0 2M25.4 51l-1.5 0.6M30.4 36.6l0 2.7M32.7 48.9l0 2.6M25.6 43.3l1.7 0M38.9 43.4l2.3 0M38.4 33l0 2.7M30.5 40l-1.5 -1M17.7 50.5l1.4 0M26.5 35.9l1 -0.5" stroke="#6d2a30" stroke-width="1" fill="none" opacity="0.9"/><path d="M6.3 27.4l0 2.6M13.4 35.5l0 1.8M19.3 32.4l1.5 -0.5M5 36.1l0 0.8M17.4 37.5l1.8 -1.2M6.4 25.9l-1.5 -1.3M5.3 24.8l0 1.5M7.8 29l-1.3 1.2M17.6 33.1l2.3 0M15 27.7l0 1.3M11.8 39.8l0.9 0M13.1 37l2.2 0M6.5 25l0.9 0M10.1 30.2l0 0.9M5.1 39.2l2.7 0M13.4 39.3l0.5 0.1M13.6 27.6l0 2.2M8.3 37.6l2 0M19 34.3l0 1.3M5 24.4l0.4 1.8M18.3 29.1l1.7 -0.2M6.4 29.1l0 1.5M6.4 35.4l-1.1 1.1M14.9 31.7l-0.5 1.3M5.6 39.4l0 0.8M20 35.5l2.3 0" stroke="#6d2a30" stroke-width="0.9" fill="none" opacity="0.8"/><circle cx="22.2" cy="10" r="4.7" fill="#d2a62a"/><path d="M19.9 7.8H24.5C24.5 10 23.6 10.9 22.6 11.2V12.6H23.6V13.2H20.8V12.6H21.8V11.2C20.8 10.9 19.9 10 19.9 7.8Z" fill="#260c11"/><text x="22.2" y="22.9" font-family="'Liberation Sans',sans-serif" font-size="3.9" fill="#e5dcc6" text-anchor="middle" font-weight="bold" letter-spacing="0.55">PRODUCED</text><text x="22.2" y="27.8" font-family="'Liberation Sans',sans-serif" font-size="3.9" fill="#e5dcc6" text-anchor="middle" font-weight="bold" letter-spacing="0.6">NAME</text><text x="22.4" y="44.6" font-family="'Liberation Serif',serif" font-size="14.2" fill="#d8bf3c" text-anchor="middle" font-weight="bold" font-style="italic" letter-spacing="-0.25">Wine</text><text x="22.2" y="53" font-family="'Liberation Serif',serif" font-size="3.4" fill="#d9cdbd" text-anchor="middle" font-weight="bold" font-style="italic">Alcohol</text><text x="22.2" y="60.7" font-family="'Liberation Serif',serif" font-size="2.8" fill="#d2a62a" text-anchor="middle" font-weight="bold">Premium quality</text></g>
<g transform="translate(47 381.9)"><path d="M3.2 23C3.2 10.4 12.4 2.9 23.35 2.9C34.3 2.9 43.5 10.4 43.5 23V65.2H3.2Z" fill="#fff" stroke="#fff" stroke-width="6.2" stroke-linejoin="round"/><path d="M3.2 23C3.2 10.4 12.4 2.9 23.35 2.9C34.3 2.9 43.5 10.4 43.5 23V65.2H3.2Z" fill="#1f0b0d" stroke="url(#g4)" stroke-width="2.1" stroke-linejoin="round"/><g fill="none" stroke="#c79a2a" stroke-width="0.65"><circle cx="13.9" cy="22.9" r="1.5"/><circle cx="17.8" cy="30.7" r="1.5"/><circle cx="17.3" cy="25.5" r="1.5"/><circle cx="20.8" cy="28.8" r="1.5"/><circle cx="21.7" cy="30.2" r="1.5"/><circle cx="22.9" cy="26.5" r="1.5"/><circle cx="19.3" cy="29.6" r="1.5"/><circle cx="20.7" cy="31.4" r="1.5"/><circle cx="8.9" cy="30.4" r="1.5"/><circle cx="18.6" cy="29.3" r="1.5"/><circle cx="23" cy="24.1" r="1.5"/><circle cx="9.3" cy="30.4" r="1.5"/><circle cx="14.4" cy="30.3" r="1.5"/><circle cx="16.1" cy="25.7" r="1.5"/><circle cx="15.4" cy="31.4" r="1.5"/><circle cx="14.8" cy="31.7" r="1.5"/><circle cx="17" cy="34" r="1.5"/><circle cx="19.3" cy="24.5" r="1.5"/><circle cx="23.6" cy="31.8" r="1.5"/><circle cx="8.6" cy="30.2" r="1.5"/><circle cx="19.3" cy="31.7" r="1.5"/><circle cx="18.4" cy="26.1" r="1.5"/><circle cx="11.2" cy="26.4" r="1.5"/><circle cx="20.8" cy="30.6" r="1.5"/><circle cx="14.5" cy="26.7" r="1.5"/><circle cx="10.6" cy="30.7" r="1.5"/><circle cx="11.9" cy="34.3" r="1.5"/><circle cx="12.9" cy="34.7" r="1.5"/><circle cx="13.9" cy="34" r="1.5"/><circle cx="21.1" cy="31.4" r="1.5"/><circle cx="11.1" cy="28.6" r="1.5"/><circle cx="9.5" cy="24.6" r="1.5"/><circle cx="11" cy="30.5" r="1.5"/><circle cx="18.2" cy="31.1" r="1.5"/><circle cx="17.3" cy="27.5" r="1.5"/><circle cx="18" cy="35" r="1.5"/><circle cx="18.9" cy="27.7" r="1.5"/><circle cx="19.2" cy="22" r="1.5"/><circle cx="36.9" cy="32.9" r="1.3"/><circle cx="27.1" cy="28.4" r="1.3"/><circle cx="34.9" cy="25.8" r="1.3"/><circle cx="36.2" cy="35.1" r="1.3"/><circle cx="28.3" cy="34" r="1.3"/><circle cx="35.2" cy="33.6" r="1.3"/><circle cx="34.8" cy="25" r="1.3"/><circle cx="38" cy="31.3" r="1.3"/><circle cx="29.6" cy="28.2" r="1.3"/><circle cx="34.9" cy="23.8" r="1.3"/><circle cx="28.7" cy="27.8" r="1.3"/><circle cx="27.1" cy="28.1" r="1.3"/><circle cx="36.7" cy="31.6" r="1.3"/><circle cx="28.9" cy="33.2" r="1.3"/><circle cx="30.8" cy="26" r="1.3"/><circle cx="28.6" cy="34.2" r="1.3"/><circle cx="29.3" cy="34.3" r="1.3"/><circle cx="35.8" cy="28.7" r="1.3"/><circle cx="37.5" cy="31.9" r="1.3"/><circle cx="33.9" cy="29.6" r="1.3"/><circle cx="36.3" cy="28" r="1.3"/><circle cx="34.5" cy="31.8" r="1.3"/><circle cx="33.3" cy="32.4" r="1.3"/><circle cx="38" cy="34" r="1.3"/><path d="M22 22C26 18 30 17 33.5 14.6M30 17L33 24M27 19L24 27M31 20C35 21 38 23 40 27M33.5 14.6L35 20"/></g><rect x="4.2" y="37.2" width="38.3" height="14.4" fill="url(#g2)"/><text x="23" y="48.4" font-family="'Liberation Serif',serif" font-size="11.8" fill="#33200a" text-anchor="middle" font-style="italic" letter-spacing="-0.2">Wine</text><path d="M22.6 5.2C23.9 5.6 23.9 7 22.9 7.6C23.9 8.2 23.7 9.2 23.2 9.6" fill="none" stroke="#c79a2a" stroke-width="0.8"/><text x="23.4" y="11.8" font-family="'Liberation Serif',serif" font-size="2.9" fill="#c79a2a" text-anchor="middle" font-weight="bold">Wine Bar</text><text x="23.4" y="56.5" font-family="'Liberation Serif',serif" font-size="3.3" fill="#b8922a" text-anchor="middle" font-weight="bold" letter-spacing="0.45">COLLECTION</text><text x="23.4" y="61.4" font-family="'Liberation Serif',serif" font-size="3.3" fill="#d8c9a0" text-anchor="middle" font-style="italic">Vintage</text></g>
<g transform="translate(111.1 381.9)"><path d="M21.65 4C15 4.8 9.4 7.6 6.2 12V13H2.6V64.9H40.7V13H37.1V12C33.9 7.6 28.3 4.8 21.65 4Z" fill="#fff" stroke="#fff" stroke-width="5.0" stroke-linejoin="round"/><path d="M21.65 4C15 4.8 9.4 7.6 6.2 12V13H2.6V64.9H40.7V13H37.1V12C33.9 7.6 28.3 4.8 21.65 4Z" fill="#5c1b1c" stroke="#c6a05a" stroke-width="1.1" stroke-linejoin="round"/><path d="M14.2 16.8l0 2.3M13.8 17.7l-0.4 1.7M28.5 17.6l1.9 0M17.6 24.9l2.6 0M14.6 16.4l-1.2 0.4M17.8 21.5l1 -1.1M29.4 15.8l-0.1 1.5M31.3 22l1.1 0M19.2 11.9l-1.4 1.5M23.2 11.5l0 1.6M10.5 21.1l2.6 0M31.4 21.5l1.6 0.5M22.9 17.2l1.5 1.2M19.4 10l1.8 0M23.5 22.7l0 2.1M24.2 12.1l-1.6 -0.1M22.7 18.4l0.2 1.4M15.7 16.5l0 2M19.4 21.5l0 1.6M26.4 19.7l0.2 0M27.7 19.6l-0.1 -1.8M29.8 13.2l1.8 1M18.8 22.7l0 1.4M23.8 19.3l1.8 0M19 20.8l0 1.9M32.5 12.1l0.9 0M29.5 14l0 1.3M34.4 21l0 2.5M9.1 16.5l2.2 0M11.2 22.1l0 2.1M34.3 18.3l0 2M19.8 20.6l-1.4 0.2M25.9 23.8l1.9 0M29.6 11.2l0.3 0.5M11.5 17.2l1.2 0M34.7 22.5l0.9 0M21.9 17.9l0.6 0.4M22.1 24.6l-0.5 1.1M34.9 16.6l0 0.9M30.6 11.8l0 1.1M20.9 21.9l0.8 0M15.8 10l2.2 0M15.9 10.8l0 1.7M29.4 19.8l1.5 0M7.9 16.9l2 0M7.5 16.6l0 1.8M19.8 14l0 2.5M21.1 10.3l2.2 0M21.4 23.2l0.7 -1.7M18.8 17l0 1.7M26.6 20.9l0.9 -0.7M25 16.8l-1.4 -1.2M28.1 20.5l0 2.2M29.8 19.2l0.9 0M13.8 21.2l-1.2 -1.7M17.3 24l0 2.5M30.1 22.4l0.6 -1.1M19.7 15.1l1.4 0M13.5 12.2l0 2.1M21 8.7l0 1.1M27.4 22.3l-0.8 -0.3M13.8 19.5l0 2.2M20.8 17.6l1.5 -0.8M28.4 13.1l0 2.3M12.6 13.2l1.3 -0.4M28 15.1l0 1.8M12.1 12l2 0M13.5 12.2l1.3 0M23.5 19.7l0 2.4M21.4 13.5l1.8 -0.2M15.1 12.2l1.1 1.4M29 14.1l0 2M17.9 17.5l1.2 0M7.6 20.8l1 -0.6M16.8 18.9l0 2.1M22.3 17.3l-1.4 -1.1M22.4 22.6l1.4 -1.1M16.3 12.7l0 1.1M11.5 22l2.5 0M25.4 21l0.2 -1M19 15.9l0 1.8M29.7 14l0 1M17.7 11.9l2.5 0M13.8 14.4l1.1 0M32.6 24.7l0 1.5M23.4 21.9l-1.1 1.6M24.6 20.7l0 0.9M21.1 24.7l0 2.6M20.4 24.1l0 1.8M12.1 20.8l1.9 0M18.4 22.9l-1.7 0.2M13.4 23.9l1.1 0.6M33.4 12.7l0 2.4M26.2 13.4l0.6 -1.8M34.6 20.7l-1.5 -1.8M9.3 21.1l0 1.3M16.6 15.3l0 1M22.2 9.7l1.3 0M28.5 9.8l1.9 0M33.7 18.6l1.3 -1.4M8.5 21.9l0 1.7M16.4 11.2l0 1.6M31.2 12.3l0 1.9M32.4 15.4l0 2.4M10.3 18.3l1.7 0M19.1 10.5l1.4 0.4M16 20.1l0 1M24.7 18l-0.3 -1.4M23.7 9.5l0 2.6M18 14.5l-1.5 1M28.5 23.6l0 1.6M18 8.8l0 1.1M9.1 20.1l-0.4 1.2M31.5 22.3l0 1.4M26.6 17.6l0 0.8M15.7 15.5l0 1.3M24.6 15.5l0.4 -0.3M19.7 22.5l1.8 -0.2M13 16.8l1.6 0M9.9 16.8l0 0.9" stroke="#b06a28" stroke-width="0.8" fill="none"/><path d="M35.4 14.6l-0.1 1.6M19.1 24.5l0 2.6M19.3 16.1l0 1.9M8.5 18.4l0 0.9M12.4 16.6l0 2.2M19.4 23.8l1.4 1.6M23.9 21.7l0.2 -1.3M22.3 20l0 1M12.8 22l0.6 -0.3M8.3 14l1.8 0M20.5 16l0 1.1M11.2 20.8l0 1.8M19.7 20.2l1 -1.3M34.9 23.7l-0.2 1.6M30.7 16.7l2.3 0M29 24.3l2 0M9.7 21.6l0 2.1M33.2 18.2l0 0.9M22.2 15.8l0.4 0M26.6 15.7l0.9 0M23.1 23l0 2M35.8 17.7l0 1.3M31.2 14.9l-0.9 0.9M32.8 23.7l0 1.8M16.5 24l0 1.1M19.1 15l0 2.1M16.8 16.1l-0.9 1.1M27 20.3l1.8 0M31.5 21.9l0 2M22 24.5l0 1.6M35.1 14.8l1.5 0.4M9.1 22.8l0 1.7M30.8 17.6l0 1M17.3 15.2l2.3 0M9.1 20l1 -0.9M22.6 21.8l2.6 0M33.4 25l0 0.8M24.3 20.6l0 1.2M29.9 23.1l0 1M28 18.8l0 2.5M16.9 14.9l1.5 0M25.9 22.7l0 1.6M33.2 19.5l1.5 1.1M26.1 15.3l-0.7 -0.7M21.9 20.1l0.1 1.5M29.9 21.4l0 1.9M21.8 22.6l0 2.2M27.8 16l-0.1 -0.2M17.1 18.4l1.5 -0.1M22.7 19.3l0 2.4M19.5 14.3l0 1.3M29.9 16l0 2.4M16.2 24.6l0 1M13.5 18.5l1.4 0M35 24.8l2.6 0M32.1 25.1l1 0M23.7 14.6l2.6 0M18.8 21.8l0.8 -0.4M22.1 15.4l0.5 -0.6M19.8 23.7l0 1.2" stroke="#b87230" stroke-width="1" fill="none"/><text x="21.6" y="32.4" font-family="'Liberation Serif',serif" font-size="4.4" fill="#d8c070" text-anchor="middle" font-weight="bold" letter-spacing="0.5">BORDEAUX</text><text x="21.6" y="36" font-family="'Liberation Serif',serif" font-size="2.7" fill="#d8c070" text-anchor="middle" font-weight="bold" letter-spacing="0.1">WINE CELLAR</text><path d="M4.5 41.4H38.8L36.4 44.8L38.8 48.2H4.5L6.9 44.8Z" fill="url(#g3)"/><text x="11.2" y="45.9" font-family="'Liberation Serif',serif" font-size="2.8" fill="#4a2210" text-anchor="middle" font-weight="bold">19</text><text x="32.1" y="45.9" font-family="'Liberation Serif',serif" font-size="2.8" fill="#4a2210" text-anchor="middle" font-weight="bold">85</text><circle cx="21.65" cy="44.6" r="5.4" fill="#c9a85e"/><circle cx="21.65" cy="44.6" r="4.1" fill="#6a2024" stroke="#8d6a2c" stroke-width="0.5"/><path d="M19.2 42.4H24.1L21.65 47.6Z" fill="#b7835a"/><text x="21.6" y="54" font-family="'Liberation Serif',serif" font-size="2.4" fill="#c77a2c" text-anchor="middle" font-weight="bold" letter-spacing="0.1">PREMIUM WINE</text><text x="21.6" y="57.4" font-family="'Liberation Serif',serif" font-size="2.7" fill="#c77a2c" text-anchor="middle" font-weight="bold" font-style="italic">Finest Selection</text><text x="21.6" y="60.6" font-family="'Liberation Serif',serif" font-size="2.7" fill="#c77a2c" text-anchor="middle" font-weight="bold" font-style="italic">Grand Reserve</text><path d="M9.2 61.3l1.8 0M11.5 57.4l0.7 1.1M4.9 53.8l0.8 -0.7M10.1 53.8l0 1.4M6.3 53.4l1.7 0M7 58.9l-1.4 -0.7M5.3 59l1.4 0M6.4 60.1l-0.2 1M6.3 55.6l-0.8 -1.1M4.8 59l-1.4 -0.1M7.5 55.4l0 1.3M5.6 61.6l0 1.5M9.3 58.8l1.5 0M11.5 53.8l0 1.2M10.1 56.4l0 0.9M5.5 58.8l0 1.4M6.4 55.2l0 2.1M9.2 57.1l0 2M8.8 53.4l0 2.1M7 56.3l0 2M6.4 57.9l0.1 -0.4M6.5 59.2l0 1.7M38.1 53.4l1.5 0M38.4 56l1.6 0M34.1 61.5l0.7 -1.4M38.6 57.7l1.6 0M35.1 61.7l0 1M38.7 54.7l0 1.4M37.9 55.9l0 1.2M33 52.2l0.7 -1.1M33.1 62.2l-0.2 0.2M38.6 54.5l0.8 0M34.9 54.4l0 1.4M34.5 61.3l0 0.8M37.5 61.6l-0.6 -0.4M37 52.8l0 1.5M33 56.8l0 2.1M35 55.6l0 1.2M37.1 60.3l1.3 0.3M34.1 56.4l0 1.3M34.9 61l0.9 0M35.3 55.5l1 0.3M36.2 56.4l0 1.9M37 57.8l1 0.6" stroke="#c77a2c" stroke-width="0.8" fill="none"/></g>
<g transform="translate(173.3 382.2)"><path d="M21.75 2.8C15.4 3.5 10.3 5.7 7.3 9.1V10.7L3.5 12.3V55.9L6.3 57.3V58.9C9.3 61.9 14.4 64.2 21.75 64.8C29.1 64.2 34.2 61.9 37.2 58.9V57.3L40 55.9V12.3L36.2 10.7V9.1C33.2 5.7 28.1 3.5 21.75 2.8Z" fill="#fff" stroke="#fff" stroke-width="5.4" stroke-linejoin="round"/><path d="M21.75 2.8C15.4 3.5 10.3 5.7 7.3 9.1V10.7L3.5 12.3V55.9L6.3 57.3V58.9C9.3 61.9 14.4 64.2 21.75 64.8C29.1 64.2 34.2 61.9 37.2 58.9V57.3L40 55.9V12.3L36.2 10.7V9.1C33.2 5.7 28.1 3.5 21.75 2.8Z" fill="url(#beige)" stroke="#c29a4c" stroke-width="1.4" stroke-linejoin="round"/><path d="M4.2 32.2H39.3V55.5L36.5 56.9V58.6C33.6 61.4 28.9 63.6 21.75 64.2C14.6 63.6 9.9 61.4 7 58.6V56.9L4.2 55.5Z" fill="#f0ebdc"/><path d="M5.6 32.4V56.4M7.2 32.4V56.4M8.8 32.4V56.4M10.4 32.4V61.6M12 32.4V61.6M13.6 32.4V61.6M15.2 32.4V61.6M16.8 32.4V61.6M18.4 32.4V61.6M20 32.4V61.6M21.6 32.4V61.6M23.2 32.4V61.6M24.8 32.4V61.6M26.4 32.4V61.6M28 32.4V61.6M29.6 32.4V61.6M31.2 32.4V61.6M32.8 32.4V61.6M34.4 32.4V61.6M36 32.4V56.4M37.6 32.4V56.4" stroke="#e2dac5" stroke-width="0.55" fill="none"/><path d="M4.2 31.9H39.3" stroke="#8b6a45" stroke-width="0.8"/><path d="M21.5 25.5l-0.8 -0.8M27.6 24.6l0 1.7M16.5 20.5l2.8 0M27.5 26.5l0 1.8M10.8 27.7l0 1.4M36.4 22.8l0.5 1.1M25.6 20.7l-1 -0.4M10.4 19.1l0 0.8M18.2 29.3l-0.3 -1.6M17 19.2l0 2.2M25.3 18.8l1.7 0M18.6 20.1l0 1M27.4 26.7l1.7 0M35.7 23.1l0 1.6M34.3 20.4l1.8 1.5M20.6 24.2l0.9 1.3M11.9 26.2l-1.1 -1.2M32.1 25.7l1.9 0M14.3 21.6l0 1.7M10.9 29.9l0.4 -1.7M24.7 20.4l0 1.1M21.6 19.4l0 1.3M20.7 30.3l2.5 0M28.6 25.2l0 0.9M10.5 25l0 2.8M12.5 20.1l2.1 0M8 22.8l2.6 0M30.2 29.6l2.9 0M20.8 22.1l0 2.6M26.3 26.3l0.6 -0.8M27.7 30.3l0 2.9M19.1 19.9l2.5 0M21.4 21.8l-1.7 0.7M17.5 26.2l1.4 0M12.7 28.9l1.4 0M24.5 28.2l0 1.8M11.1 28.2l0 2.6M23.5 25l1.4 0M20.2 20.6l0 2.1M25.1 22.6l2.5 0M30.1 18.4l1.2 0M31.5 25.9l2.1 0M22 21.1l-1.9 -2M15.4 20.2l0 2.2M18.3 30.8l0 2.9M36.4 25.4l-1.8 1.8M19.9 22.7l-0.4 -1.7M7.2 28.6l0 2.2M9.1 28.8l-0.6 1.2M33.9 21.4l3 0M35.5 25.6l0.8 0M31.8 30.5l1.3 0M10.3 26.5l2.1 0M32.1 18.9l0 1M15.9 19l0 1.3M31.3 25.1l0 1.9M11.1 31l0 1.3M23.9 29.8l1.1 0M25 27.9l0.6 -1M31.7 27.3l-1.3 1.4M21.1 21.2l0 1M33.8 20.2l1.4 0M14.1 22.9l-1.8 -0.5M16.4 24.6l2.7 0M25.8 29.3l1.3 -2M8.4 25.1l0 1.6M22.6 25.2l1.1 -1.2M23.9 24.5l2.4 0M28.3 27.5l0 1M24.3 21.6l0 1M8.7 24.1l0.5 -1M35.5 20.9l1 0M35.7 30.1l-0.5 -0.2M21.6 30.2l1.3 0M34.1 23.8l1.9 1.1M10.2 28.9l3 0M17.9 20.7l0 3M19.6 18.6l2.9 0M12.9 30.3l-1.2 -1.2M10.8 19.7l0 1.3M30.9 24l2.2 0M10.6 28.3l0 1.9M13.1 21.7l0 1.7M19.7 19.7l-0.7 0.7M12.2 18.9l-1.1 -2.1M34.8 23.8l0 2.2M16.7 30.8l0.7 0.8M16.2 30.1l-1.1 -1.9M8.3 25.1l2.6 0M34.1 23.3l1.7 0M34.1 21.2l0 1.2M34.6 20.6l-1.1 -0.5M11.9 30.9l0 1.2M27.6 24.6l0 1.8M33.7 20.3l1.3 0M21.6 23.3l1.5 0M6.8 21l-0.5 -1.6M9.7 27.7l0 2.9M22.4 19.2l0 2.2M36.6 30.1l0 2.1" stroke="#86705a" stroke-width="0.75" fill="none"/><path d="M34.3 22.1l-1 -0.1M33.4 23.7l1.1 0M35.3 29.5l0 1M20.9 25.2l-0.6 0.3M11.7 22.4l0 1.8M23.5 26.1l-0.7 -0.6M20.6 29.1l0 1.3M19.5 26.8l0 1.1M28.5 25.7l0.8 0M14.3 21.4l0 2.4M36.1 28.2l0 1.8M33.4 23.6l0 2.1M17.1 24.8l0 2.3M22.2 21.4l0 2M10.4 26.6l0 1.8M17.1 26.5l0 1.5M26.3 22.9l1.8 1.7M34.4 29.1l2.3 0M18.9 21.1l1.5 -0.9M18 22.6l-1.2 1.1M8.1 24.2l-0.1 -1.3M7.9 26.7l0 1.3M24.7 23.3l0 2.2M28.3 26.1l0 1.7M35.3 25.2l0 2.5M17.2 25.3l0 2.4M27.1 25.3l1.4 0M20.5 25.2l0 2.1M29.2 20.8l0 2.1M17.2 21.8l2.6 0M17.4 25.9l1.8 0M24.5 28.8l1.4 0.7M29.4 27.4l0.7 0.9M8.7 22l1.6 0M13.7 26.4l0 2.2M16.4 28.8l0 2.5M16.6 27.6l0 1.7M17.5 28.3l0.3 -1.4M22.4 22.7l0 2.1M23 29.6l-1.7 1.6" stroke="#7a634c" stroke-width="1" fill="none"/><path d="M20.9 4.8L21.8 7L23.1 5.2M21.8 7V8.4" fill="none" stroke="#5a4632" stroke-width="0.7"/><text x="21.8" y="10.9" font-family="'Liberation Serif',serif" font-size="2.9" fill="#3a3026" text-anchor="middle" font-weight="bold">Wine House</text><text x="21.8" y="13.4" font-family="'Liberation Serif',serif" font-size="2" fill="#5a4632" text-anchor="middle">· · ·</text><text x="21.6" y="45.4" font-family="'Liberation Serif',serif" font-size="13.8" fill="#a07f35" text-anchor="middle" font-style="italic" letter-spacing="-0.1">Wine</text><text x="21.8" y="51.1" font-family="'Liberation Serif',serif" font-size="3.8" fill="#4a3a2a" text-anchor="middle" letter-spacing="0.42">COLLECTION</text><text x="21.8" y="55.6" font-family="'Liberation Serif',serif" font-size="2.4" fill="#4a3a2a" text-anchor="middle" font-style="italic">vol</text><text x="21.8" y="57.8" font-family="'Liberation Serif',serif" font-size="2.2" fill="#4a3a2a" text-anchor="middle">12</text><text x="21.8" y="62.4" font-family="'Liberation Serif',serif" font-size="3.3" fill="#4b3b2a" text-anchor="middle" font-weight="bold" font-style="italic">Premium quality</text></g>
<g transform="translate(232.3 311.5)"><path d="M23.8 2.3C19.5 2.5 16.3 4.6 14.4 7C12.6 9.4 9.5 12 5 13.4C4.1 19 3.6 26 3.6 32C3.6 48 10 63 23.8 67.4C37.6 63 44 48 44 32C44 26 43.5 19 42.6 13.4C38.1 12 35 9.4 33.2 7C31.3 4.6 28.1 2.5 23.8 2.3Z" fill="#fff" stroke="#fff" stroke-width="6.0" stroke-linejoin="round"/><path d="M23.8 2.3C19.5 2.5 16.3 4.6 14.4 7C12.6 9.4 9.5 12 5 13.4C4.1 19 3.6 26 3.6 32C3.6 48 10 63 23.8 67.4C37.6 63 44 48 44 32C44 26 43.5 19 42.6 13.4C38.1 12 35 9.4 33.2 7C31.3 4.6 28.1 2.5 23.8 2.3Z" fill="#581a1c" stroke="#b3853a" stroke-width="1.4" stroke-linejoin="round"/><path d="M22.1 30.2l-0.1 0M26.8 19.4l1.9 0M33.9 16.7l0 1M34.4 34.1l0 2.6M39.8 33l1.1 0M7 29.3l0 1.1M14.8 14.9l1.6 0M35.6 29.1l1.7 0M29.4 27.3l0 2.6M40.9 38.4l-0.7 -1M16.5 16l-0.4 1.3M19.8 41.8l-1.8 -1.1M37.9 27.6l-0.4 -1.6M28.2 36.6l0 1M18 42l-1.4 -0.9M10 15.7l-1.2 0.2M21.9 19.5l-1.3 0.5M10.5 26.2l0 1.3M40 37.3l0 2.4M13.8 25.4l0.5 -1.5M40.6 20.2l0 2.2M17.8 22.6l0 1M26.6 21l1.5 0M22.1 41.8l1.8 0M36.4 19.3l0 2.4M34.7 21.2l0 2.1M38.9 19.7l1.4 0.4M21 17l0 2.5M14.7 34.4l0 2.3M27.1 22.5l0 2.1M8.9 20.6l2.3 0M27.7 22.1l-1.1 -1.8M15.8 26.9l0 1.1M19.2 30.6l0 1.5M37.2 42.4l2 0M26.7 18.1l0 0.8M37.9 34.3l-1.7 0.5M23.1 35.2l0 2.6M9.1 29.8l1.5 0.9M30.8 37l-0.5 0.7M37.6 39.3l2.2 0M36.3 30.6l1.5 0M26.6 31.7l0 2M40.8 39.5l-0.4 0.9M26.5 26.8l-1.5 0.9M7.5 31.4l1.2 0M30.6 28.4l2.5 0M15.3 14.3l0 2M13.5 18.9l0.6 -0.2M37.3 23.5l1.2 0M21.4 37.4l1.4 -0.4M26.6 23.2l0 1.7M35.4 38.6l1.6 -0.8M12.3 27.1l0 1.2M20.8 32.1l1.4 0M35.4 42.5l0.9 0M7.6 39.3l0 2.1M26.2 23l-1.8 -1.3M22.2 14.7l-1 -1.3M8.1 32.2l1.9 0M29.1 37.4l0.7 -1.1M22.9 19.2l0 1.6M31.1 19.2l0 1.4M30.6 29.1l2.2 0M20.1 37l-1.5 1.6M31.4 17.8l1.9 0M37.9 24.9l2.4 0M34 41.4l2 0M13.6 34.9l0.5 0.8M13.9 40.1l1.7 0.1M33.8 23.3l1.3 -0.6M9.4 26.8l2.2 0M23.3 14.8l-1.6 1.1M12.5 23.7l-1.3 -1.3M24.3 35l0.7 1.6M23.5 41.5l0 1.2M24.7 22.4l0.5 0.1M35.6 30.2l0 1.5M35.7 40.1l0 2.3M39.9 29.2l1.2 0M25 28.6l0.8 0M39.9 29l2.2 0M25.9 28.2l0.9 0M25.1 26l1.5 -0.8M22.8 17.7l2.3 0M37.6 27.8l0 1.1M27.8 40.8l0 2.2M7.3 19.6l0 2M17.6 24.3l1 0M31.7 17.6l1.3 0M13.3 29.4l1.5 0M20.8 29.4l0 1.2M28.3 32.5l2.3 0M27.6 38.8l0 2.1M34.5 40.2l0 1.4M38.3 20.3l1.4 -1.3M14.8 35.1l0 1M35.2 26.2l-1.4 -0.4M30.1 14.5l0 2M37.9 42.1l0 1.7" stroke="#340e10" stroke-width="1.2" fill="none" opacity="0.8"/><path d="M4.6 43.9H43C42.4 47.2 41.4 50.3 40 53.1H7.6C6.2 50.3 5.2 47.2 4.6 43.9Z" fill="url(#g1)"/><text x="23.8" y="50" font-family="'Liberation Serif',serif" font-size="4.2" fill="#3b2412" text-anchor="middle" font-weight="bold" letter-spacing="0.2">COLLECTION</text><path d="M21.9 6H25.7L24.3 8.2V9.4H23.3V8.2Z" fill="#b8822f"/><text x="23.8" y="12.2" font-family="'Liberation Serif',serif" font-size="2.6" fill="#c08a3a" text-anchor="middle" font-weight="bold">Wine House</text><text x="23.8" y="14.2" font-family="'Liberation Serif',serif" font-size="1.8" fill="#c08a3a" text-anchor="middle">· · · ·</text><text x="23.8" y="27.3" font-family="'Liberation Serif',serif" font-size="9.3" fill="#dccb98" text-anchor="middle" font-weight="bold" letter-spacing="0.45">RED</text><text x="23.8" y="37" font-family="'Liberation Serif',serif" font-size="9.3" fill="#dccb98" text-anchor="middle" font-weight="bold" letter-spacing="0.45">WINE</text><text x="23.8" y="57" font-family="'Liberation Serif',serif" font-size="3.1" fill="#c77d2d" text-anchor="middle" font-weight="bold" font-style="italic">Premium Quality</text><text x="23.8" y="59.8" font-family="'Liberation Serif',serif" font-size="2.2" fill="#c77d2d" text-anchor="middle">• • •</text><text x="23.8" y="62.4" font-family="'Liberation Serif',serif" font-size="2.1" fill="#c77d2d" text-anchor="middle">2019</text></g>
<g transform="translate(296.8 311.4)"><path d="M3.3 22.8C3.3 10.6 11.4 2.8 22.25 2.8C33.1 2.8 41.2 10.6 41.2 22.8V46C41.2 58.2 33.1 66 22.25 66C11.4 66 3.3 58.2 3.3 46Z" fill="#fff" stroke="#fff" stroke-width="6.6" stroke-linejoin="round"/><path d="M3.3 22.8C3.3 10.6 11.4 2.8 22.25 2.8C33.1 2.8 41.2 10.6 41.2 22.8V46C41.2 58.2 33.1 66 22.25 66C11.4 66 3.3 58.2 3.3 46Z" fill="#ece4c8" stroke="#b08335" stroke-width="2.1" stroke-linejoin="round"/><path d="M11.1 39.2l1.9 0M12.8 41.3l0.1 0M13.5 25.1l0 2.2M7.9 41.4l0 1.4M7 45.5l1.7 0.5M6.7 31.8l1.1 0M37.4 32.6l0 2.8M9.8 44.1l2.1 0M17.1 35l0 0.9M34.5 29.8l-1.3 2.1M35.5 40.5l0.4 1M9.7 34.8l-1.3 1.9M35.2 33.4l0 1.9M18.5 45.5l0 0.9M8.7 39.8l0 0M24 40.4l0 2.3M24.2 37.8l0 1.2M17.2 44.1l0 2.2M15.8 27.1l0 2.8M31.6 32.7l2.4 0M35.6 44.7l3.2 0M37.7 37.2l0 -0.6M13.9 43l0 1M32.5 40.9l2.8 0M7.3 30.3l0 1.8M11.3 26.4l0 3M38.4 40.4l1.4 0M37.6 35.8l-2.1 -1.3M33.6 41.4l0.5 -0.3M25 42.5l0 2.1M14.8 40.8l0 2.4M37.5 25.5l2.3 0M34 37l0 1.8M37.6 43.7l0 1M8.7 25.5l1.1 0M34.6 38.5l0 2.1M16.4 35.2l0 1.2M11.7 32.8l0.2 -2M29.3 43l1.3 -2.2M21.1 26.3l-1.5 0.9M14 39.4l0 0.9M18.6 31.4l-0.9 0M23.9 44.5l0 2.2M22.6 40.1l-0.9 0.9M23.2 36.5l0 2.8M38.2 32.3l0 3.2M9.2 26.6l0 2.8M31 34.2l0.8 0M27.1 34.1l1.7 0M19 29.6l0 1.8M13.9 39.5l1 -0.2M13.5 32.9l2.3 0M37.8 26.8l2 0M29.6 43.3l0.6 1.2M27.9 42.7l2.4 0M13.8 43.9l0 2.3M33.1 44.9l-2.2 -0.8M16 33.1l0 2.1M8.3 31.2l1.1 -0.2M9.2 44.7l-1.3 -0.7M27 39l0 3.1M16.4 30.2l-1.6 0.8M12.3 37.3l0 1.7M37 34.6l2.3 0M15 28.6l0 1.5M11.9 44.8l0 2.7M36.8 39.5l0 2M6.9 37.5l-1.2 -2.2M23.8 26.9l0 1.9M35.5 32.6l0 2.7M33.1 35.9l0 1.3M19.1 36.4l0 2.7M33.8 44.1l-2.2 0.4M8.3 43.5l1.2 -1.4M7.6 41.8l2.3 0M21.3 41.5l0 1.4M17.4 31.1l2.9 0M8 26.4l2.4 0M11.9 30.6l0 0.9M22.1 39l1.2 0M9.1 44.2l1.8 0M28.7 40l1 0M33.2 29.4l0 1.6M23.4 37.9l0 2.5M22.1 28.3l1.4 1.8M28.3 29.5l1.8 0.1M35.9 45l0 3.1M36.9 41.4l0 1.6M26.1 37.5l0.7 -1.5M36.7 36l-1.3 2.2M24.1 41l1.7 -0.6M8.4 33.4l0 2.1M32.8 32.5l0 0.9M19.7 37l0 2.4M12.6 27.2l0.1 1.8M22.8 27.5l0 1.8M27 40.9l0.7 -1.1M20 32.8l1.4 0M23.6 34.5l0 2.8M25.2 41.5l1 2.2M18.2 33.1l0 2.4M25 36.9l-1.4 -1.2M30.1 41.7l0.9 0M18 42l1.9 0M18.6 37.9l2.5 0M34.5 40.5l0 1.4M31.7 41.3l-1.3 1.6M35.3 26.6l0 2.3M10.5 42.1l0 2.4M15.5 29.5l0 2M29.4 29.5l1.6 0M27.3 32.6l0 1.1M7.5 39.3l1.1 0M35 38.5l0 2.5M25.5 34.1l3.1 0M18.1 38.1l1.7 0M17.2 40.6l1.9 0M22.8 29.6l-2.2 0.6M20.8 29.6l2.2 0M8.5 35.1l0 2.7M16.5 31.8l0 0.9M11.8 28.1l2.8 0M13 27.3l1.1 0M19.1 40.7l0 2.5M23.6 26.8l0 2.2M8.8 29.2l2.8 0M23 38.7l0 1.5M16.2 43.8l0 2.7M6.7 35.3l1.2 0.4M11.7 44.1l0 3.1M31.5 39.8l1.2 0M17 38.7l1.7 0M32.4 26.1l0 1M16.4 41.3l-1.6 -0.9M9.3 38.6l1.4 0M18.1 42.8l2.5 0M26.6 34.8l1.7 0M12.2 35.2l0 1.6M11.8 43.8l1.3 0M6.7 29.4l-0.7 0.7M13.3 38.4l2.6 0M23.3 32.7l0 2.2M33.4 39.2l1.6 0M35.4 42.4l0 2.4M31.4 38.9l1.7 -1.1M38.9 31.7l0 3.1M11.2 33.1l1.5 0M14.5 41.4l2.6 0M32 43l1.4 2.1M22.3 39.5l3.1 0" stroke="#151515" stroke-width="0.8" fill="none"/><path d="M37.2 27l0 2.8M12 26.8l1.5 0M35 27.9l-0.7 0.4M36.4 32.7l0.8 -1.8M34.7 31.7l0 1.2M33.7 31.6l1.1 1.8M24.5 32.8l1.3 0M37.2 28.8l1.8 0.6M10.6 34.2l1.2 0M7.6 31.1l0 2.7M22.5 30.9l2.1 0M35.9 28.7l0 2M15.7 31.8l1.7 0M27.9 31l0 2.8M17.6 30l2.7 0M37 30.9l1 0M35.2 27.3l1.5 0M16.7 29.3l0 0.9M23.5 33.9l1.2 0M28.6 26l2.5 0M36 30.3l0 0.1M25.1 35.9l-0.1 0.9M27 29.2l1.3 0.4M36.7 25.7l2.1 0M17.1 27.3l1.7 0M14.8 25.9l-0.6 -1.5M13.1 28.2l-1.3 -0.9M9.2 30.4l0 1.5M30 35.2l-1.8 -0.5M33.7 25.8l0 1.8M18.5 33.4l-0.1 -1M13.5 28.3l0 2.1M11.1 34.8l0.9 0M22.3 31.8l0 1.8M7 33.5l0 2.1M38.1 34.4l0 1.9M10.6 29.1l1.2 -1.9M18.4 32.2l0 2.4M35.1 31.3l0 2.5M22.7 27.5l0 1.1M33.3 30.9l2.4 0M37.7 27.5l2.5 0M30.8 29.6l1.2 0M11.3 26l0 1.3M22.9 35.7l0 1.9M34.2 31.8l2.3 0M6.7 35.5l2.4 0M32.9 26.5l0 1.2M22.5 35.4l-0.3 0.5M30.1 29l1.7 0.9M35.4 33.9l1.4 0M15.2 28l0 2.7M15.7 25.8l0 1M20.5 29l0 1.8M19.5 29.2l-0.8 0.2M34.6 35.6l0 0.9M37 30.9l0 1.1M13.8 28.8l0 0.9M38.4 34.1l0 1.8M32.1 30.8l0 1.5M18.4 35.1l1.7 0M26.6 26l2.4 0M27.9 29.3l0 0.8M8.7 27.1l2.4 0M13.1 30.5l2.1 0M6.7 35.2l1.4 0M13.8 32.7l-0.6 -0.4M24.2 27.3l2.6 0M24.1 34.1l0 2.5M31.5 27.9l2.2 0" stroke="#151515" stroke-width="1.1" fill="none"/><rect x="2.4" y="46.7" width="39.7" height="7" fill="url(#g1)"/><text x="22.2" y="51.7" font-family="'Liberation Serif',serif" font-size="4.1" fill="#2e1c0c" text-anchor="middle" font-weight="bold" letter-spacing="0.15">COLLECTION</text><text x="22.2" y="9.8" font-family="'Liberation Serif',serif" font-size="3.1" fill="#1a1a1a" text-anchor="middle" font-weight="bold" font-style="italic" transform="rotate(-5 22 9)">Premium Quality</text><text x="22.2" y="21.1" font-family="'Liberation Serif',serif" font-size="9.8" fill="#111" text-anchor="middle" font-weight="bold" letter-spacing="-0.1">Wine</text><text x="22.2" y="59.4" font-family="'Liberation Serif',serif" font-size="2.9" fill="#1a1a1a" text-anchor="middle" font-weight="bold" font-style="italic">Vintage of Wine</text><text x="22.2" y="63.2" font-family="'Liberation Serif',serif" font-size="2.6" fill="#1a1a1a" text-anchor="middle" font-weight="bold">12</text></g>
<g transform="translate(358.8 311.1)"><path d="M22.2 2.6C15.4 3.6 9.4 7.4 6.4 12.4V13.8H3V61.2L6.6 63.4L7.6 66.4H36.8L37.8 63.4L41.4 61.2V13.8H38V12.4C35 7.4 29 3.6 22.2 2.6Z" fill="#fff" stroke="#fff" stroke-width="5.2" stroke-linejoin="round"/><path d="M22.2 2.6C15.4 3.6 9.4 7.4 6.4 12.4V13.8H3V61.2L6.6 63.4L7.6 66.4H36.8L37.8 63.4L41.4 61.2V13.8H38V12.4C35 7.4 29 3.6 22.2 2.6Z" fill="#260c11" stroke="#d6aa2c" stroke-width="1.6" stroke-linejoin="round"/><path d="M16.3 30.9l0 2.2M19.3 30.9l0 2.3M19.5 52.9l1.1 0M28.9 42.7l2.8 0M18.2 27.7l-0.4 -1.2M23.9 39.8l-1.1 -1.1M30 46.2l1.3 -0.6M20.9 56.3l-1.8 0.9M36.8 49.8l0 2.4M33.5 33.8l1.2 0M17 38.8l0 1.6M31.5 56.3l1.9 1.9M35 37.7l0 2M29.1 50.6l0 1.2M38.1 48l1 0M25.6 58.9l2.8 0M20.7 42.9l-0.2 1.1M29.5 31.1l0 2.8M18.9 33.8l0 2.2M36.5 43.6l2.4 0M22.7 40l2.1 0M16.9 30.9l0 2.3M32.6 61.1l-1 1M39.6 39.2l0 1.6M22.8 33.2l0 1M36.8 28.7l1.2 0M20.6 55.7l0 1.2M26.9 51.3l2.5 0M25.6 45.3l-0.2 0.9M27.2 31.7l0 2.4M33.9 60l2 0M20 56.9l0 1.6M19.4 40.3l0 1.7M33.1 46l0 2.4M33.6 56l0 2M37.5 36.1l0 2.4M24.7 41l-0.5 -1.2M21.1 39.1l1.5 0M34.5 29.3l0 2M27.5 44.5l-0.9 -1.2M16.8 43.9l0 1.7M16.1 27l0 2.3M23.2 58.9l1.6 0M34.7 35.2l2.5 0M29 38.2l0 1.9M20.5 40.1l2.7 0M32.2 45.2l-0.8 -0.4M32.3 46.4l0 1.6M35.8 35.5l-1.8 1.8M32.4 38.3l1.2 -1.7M22 44.2l-1.4 -1.8M23.5 28.6l1.9 0M26.6 31.9l0 2.4M26.6 43.8l2.2 0M37.6 55.9l-0.6 -1.3M18.2 57.1l0 1.9M37.8 38.3l0 1.6M38.7 50.9l-1.8 0.9M26.8 41.1l0.9 1.6M33.7 58.9l1.9 0M34.8 42.9l0 2M36.9 57.5l0 1.6M21.5 38.9l-0.3 -0.7M22.5 42.4l1.5 0M20.5 34.9l0 2.6M20.1 53.4l0 2.4M22.4 54.3l1 0M18.3 55l1.8 0M24.5 51.2l0.9 0M30.4 38l0.2 1.1M18.9 51.7l2.5 0M37.2 46.3l2.3 0M22.3 46.1l0.4 0.2M36.5 61.1l0 0.9M30.7 32.2l-0.1 0.1M35.6 57.4l0 1.7M20.3 43.1l0 2.6M24.5 40.6l1.3 -0.6M28 50.2l0 1.1M36.6 32.7l0.9 0.4M24.3 57l-1.7 1.6M31.3 37.1l0 1M35.5 56.7l0 1.2M17.8 41.5l0 0.9M23.1 55.7l0 1.6M28.3 32.7l0 0.9M19.5 61.1l0.8 1.6M23.8 35.7l0.4 1.7M24.6 41.5l1.5 -1.3M22.3 27.5l2.6 0M29.6 32.2l2.1 0M18.5 59l1.8 0M24.3 32.6l1.5 0M21.6 49.6l2.7 0M39.2 43.3l-0.5 -0.3M29.6 61.3l0 1.7M24.1 55.2l-0.1 -1.6M30.3 47.6l2.4 0M27.1 46.2l-1.9 -1M32.5 61.2l-0.9 1.9M22.7 42.8l0 2M25.4 51l-1.5 0.6M30.4 36.6l0 2.7M32.7 48.9l0 2.6M25.6 43.3l1.7 0M38.9 43.4l2.3 0M38.4 33l0 2.7M30.5 40l-1.5 -1M17.7 50.5l1.4 0M26.5 35.9l1 -0.5" stroke="#6d2a30" stroke-width="1" fill="none" opacity="0.9"/><path d="M6.3 27.4l0 2.6M13.4 35.5l0 1.8M19.3 32.4l1.5 -0.5M5 36.1l0 0.8M17.4 37.5l1.8 -1.2M6.4 25.9l-1.5 -1.3M5.3 24.8l0 1.5M7.8 29l-1.3 1.2M17.6 33.1l2.3 0M15 27.7l0 1.3M11.8 39.8l0.9 0M13.1 37l2.2 0M6.5 25l0.9 0M10.1 30.2l0 0.9M5.1 39.2l2.7 0M13.4 39.3l0.5 0.1M13.6 27.6l0 2.2M8.3 37.6l2 0M19 34.3l0 1.3M5 24.4l0.4 1.8M18.3 29.1l1.7 -0.2M6.4 29.1l0 1.5M6.4 35.4l-1.1 1.1M14.9 31.7l-0.5 1.3M5.6 39.4l0 0.8M20 35.5l2.3 0" stroke="#6d2a30" stroke-width="0.9" fill="none" opacity="0.8"/><circle cx="22.2" cy="10" r="4.7" fill="#d2a62a"/><path d="M19.9 7.8H24.5C24.5 10 23.6 10.9 22.6 11.2V12.6H23.6V13.2H20.8V12.6H21.8V11.2C20.8 10.9 19.9 10 19.9 7.8Z" fill="#260c11"/><text x="22.2" y="22.9" font-family="'Liberation Sans',sans-serif" font-size="3.9" fill="#e5dcc6" text-anchor="middle" font-weight="bold" letter-spacing="0.55">PRODUCED</text><text x="22.2" y="27.8" font-family="'Liberation Sans',sans-serif" font-size="3.9" fill="#e5dcc6" text-anchor="middle" font-weight="bold" letter-spacing="0.6">NAME</text><text x="22.4" y="44.6" font-family="'Liberation Serif',serif" font-size="14.2" fill="#d8bf3c" text-anchor="middle" font-weight="bold" font-style="italic" letter-spacing="-0.25">Wine</text><text x="22.2" y="53" font-family="'Liberation Serif',serif" font-size="3.4" fill="#d9cdbd" text-anchor="middle" font-weight="bold" font-style="italic">Alcohol</text><text x="22.2" y="60.7" font-family="'Liberation Serif',serif" font-size="2.8" fill="#d2a62a" text-anchor="middle" font-weight="bold">Premium quality</text></g>
<g transform="translate(233 381.9)"><path d="M3.2 23C3.2 10.4 12.4 2.9 23.35 2.9C34.3 2.9 43.5 10.4 43.5 23V65.2H3.2Z" fill="#fff" stroke="#fff" stroke-width="6.2" stroke-linejoin="round"/><path d="M3.2 23C3.2 10.4 12.4 2.9 23.35 2.9C34.3 2.9 43.5 10.4 43.5 23V65.2H3.2Z" fill="#1f0b0d" stroke="url(#g4)" stroke-width="2.1" stroke-linejoin="round"/><g fill="none" stroke="#c79a2a" stroke-width="0.65"><circle cx="13.9" cy="22.9" r="1.5"/><circle cx="17.8" cy="30.7" r="1.5"/><circle cx="17.3" cy="25.5" r="1.5"/><circle cx="20.8" cy="28.8" r="1.5"/><circle cx="21.7" cy="30.2" r="1.5"/><circle cx="22.9" cy="26.5" r="1.5"/><circle cx="19.3" cy="29.6" r="1.5"/><circle cx="20.7" cy="31.4" r="1.5"/><circle cx="8.9" cy="30.4" r="1.5"/><circle cx="18.6" cy="29.3" r="1.5"/><circle cx="23" cy="24.1" r="1.5"/><circle cx="9.3" cy="30.4" r="1.5"/><circle cx="14.4" cy="30.3" r="1.5"/><circle cx="16.1" cy="25.7" r="1.5"/><circle cx="15.4" cy="31.4" r="1.5"/><circle cx="14.8" cy="31.7" r="1.5"/><circle cx="17" cy="34" r="1.5"/><circle cx="19.3" cy="24.5" r="1.5"/><circle cx="23.6" cy="31.8" r="1.5"/><circle cx="8.6" cy="30.2" r="1.5"/><circle cx="19.3" cy="31.7" r="1.5"/><circle cx="18.4" cy="26.1" r="1.5"/><circle cx="11.2" cy="26.4" r="1.5"/><circle cx="20.8" cy="30.6" r="1.5"/><circle cx="14.5" cy="26.7" r="1.5"/><circle cx="10.6" cy="30.7" r="1.5"/><circle cx="11.9" cy="34.3" r="1.5"/><circle cx="12.9" cy="34.7" r="1.5"/><circle cx="13.9" cy="34" r="1.5"/><circle cx="21.1" cy="31.4" r="1.5"/><circle cx="11.1" cy="28.6" r="1.5"/><circle cx="9.5" cy="24.6" r="1.5"/><circle cx="11" cy="30.5" r="1.5"/><circle cx="18.2" cy="31.1" r="1.5"/><circle cx="17.3" cy="27.5" r="1.5"/><circle cx="18" cy="35" r="1.5"/><circle cx="18.9" cy="27.7" r="1.5"/><circle cx="19.2" cy="22" r="1.5"/><circle cx="36.9" cy="32.9" r="1.3"/><circle cx="27.1" cy="28.4" r="1.3"/><circle cx="34.9" cy="25.8" r="1.3"/><circle cx="36.2" cy="35.1" r="1.3"/><circle cx="28.3" cy="34" r="1.3"/><circle cx="35.2" cy="33.6" r="1.3"/><circle cx="34.8" cy="25" r="1.3"/><circle cx="38" cy="31.3" r="1.3"/><circle cx="29.6" cy="28.2" r="1.3"/><circle cx="34.9" cy="23.8" r="1.3"/><circle cx="28.7" cy="27.8" r="1.3"/><circle cx="27.1" cy="28.1" r="1.3"/><circle cx="36.7" cy="31.6" r="1.3"/><circle cx="28.9" cy="33.2" r="1.3"/><circle cx="30.8" cy="26" r="1.3"/><circle cx="28.6" cy="34.2" r="1.3"/><circle cx="29.3" cy="34.3" r="1.3"/><circle cx="35.8" cy="28.7" r="1.3"/><circle cx="37.5" cy="31.9" r="1.3"/><circle cx="33.9" cy="29.6" r="1.3"/><circle cx="36.3" cy="28" r="1.3"/><circle cx="34.5" cy="31.8" r="1.3"/><circle cx="33.3" cy="32.4" r="1.3"/><circle cx="38" cy="34" r="1.3"/><path d="M22 22C26 18 30 17 33.5 14.6M30 17L33 24M27 19L24 27M31 20C35 21 38 23 40 27M33.5 14.6L35 20"/></g><rect x="4.2" y="37.2" width="38.3" height="14.4" fill="url(#g2)"/><text x="23" y="48.4" font-family="'Liberation Serif',serif" font-size="11.8" fill="#33200a" text-anchor="middle" font-style="italic" letter-spacing="-0.2">Wine</text><path d="M22.6 5.2C23.9 5.6 23.9 7 22.9 7.6C23.9 8.2 23.7 9.2 23.2 9.6" fill="none" stroke="#c79a2a" stroke-width="0.8"/><text x="23.4" y="11.8" font-family="'Liberation Serif',serif" font-size="2.9" fill="#c79a2a" text-anchor="middle" font-weight="bold">Wine Bar</text><text x="23.4" y="56.5" font-family="'Liberation Serif',serif" font-size="3.3" fill="#b8922a" text-anchor="middle" font-weight="bold" letter-spacing="0.45">COLLECTION</text><text x="23.4" y="61.4" font-family="'Liberation Serif',serif" font-size="3.3" fill="#d8c9a0" text-anchor="middle" font-style="italic">Vintage</text></g>
<g transform="translate(297.1 381.9)"><path d="M21.65 4C15 4.8 9.4 7.6 6.2 12V13H2.6V64.9H40.7V13H37.1V12C33.9 7.6 28.3 4.8 21.65 4Z" fill="#fff" stroke="#fff" stroke-width="5.0" stroke-linejoin="round"/><path d="M21.65 4C15 4.8 9.4 7.6 6.2 12V13H2.6V64.9H40.7V13H37.1V12C33.9 7.6 28.3 4.8 21.65 4Z" fill="#5c1b1c" stroke="#c6a05a" stroke-width="1.1" stroke-linejoin="round"/><path d="M14.2 16.8l0 2.3M13.8 17.7l-0.4 1.7M28.5 17.6l1.9 0M17.6 24.9l2.6 0M14.6 16.4l-1.2 0.4M17.8 21.5l1 -1.1M29.4 15.8l-0.1 1.5M31.3 22l1.1 0M19.2 11.9l-1.4 1.5M23.2 11.5l0 1.6M10.5 21.1l2.6 0M31.4 21.5l1.6 0.5M22.9 17.2l1.5 1.2M19.4 10l1.8 0M23.5 22.7l0 2.1M24.2 12.1l-1.6 -0.1M22.7 18.4l0.2 1.4M15.7 16.5l0 2M19.4 21.5l0 1.6M26.4 19.7l0.2 0M27.7 19.6l-0.1 -1.8M29.8 13.2l1.8 1M18.8 22.7l0 1.4M23.8 19.3l1.8 0M19 20.8l0 1.9M32.5 12.1l0.9 0M29.5 14l0 1.3M34.4 21l0 2.5M9.1 16.5l2.2 0M11.2 22.1l0 2.1M34.3 18.3l0 2M19.8 20.6l-1.4 0.2M25.9 23.8l1.9 0M29.6 11.2l0.3 0.5M11.5 17.2l1.2 0M34.7 22.5l0.9 0M21.9 17.9l0.6 0.4M22.1 24.6l-0.5 1.1M34.9 16.6l0 0.9M30.6 11.8l0 1.1M20.9 21.9l0.8 0M15.8 10l2.2 0M15.9 10.8l0 1.7M29.4 19.8l1.5 0M7.9 16.9l2 0M7.5 16.6l0 1.8M19.8 14l0 2.5M21.1 10.3l2.2 0M21.4 23.2l0.7 -1.7M18.8 17l0 1.7M26.6 20.9l0.9 -0.7M25 16.8l-1.4 -1.2M28.1 20.5l0 2.2M29.8 19.2l0.9 0M13.8 21.2l-1.2 -1.7M17.3 24l0 2.5M30.1 22.4l0.6 -1.1M19.7 15.1l1.4 0M13.5 12.2l0 2.1M21 8.7l0 1.1M27.4 22.3l-0.8 -0.3M13.8 19.5l0 2.2M20.8 17.6l1.5 -0.8M28.4 13.1l0 2.3M12.6 13.2l1.3 -0.4M28 15.1l0 1.8M12.1 12l2 0M13.5 12.2l1.3 0M23.5 19.7l0 2.4M21.4 13.5l1.8 -0.2M15.1 12.2l1.1 1.4M29 14.1l0 2M17.9 17.5l1.2 0M7.6 20.8l1 -0.6M16.8 18.9l0 2.1M22.3 17.3l-1.4 -1.1M22.4 22.6l1.4 -1.1M16.3 12.7l0 1.1M11.5 22l2.5 0M25.4 21l0.2 -1M19 15.9l0 1.8M29.7 14l0 1M17.7 11.9l2.5 0M13.8 14.4l1.1 0M32.6 24.7l0 1.5M23.4 21.9l-1.1 1.6M24.6 20.7l0 0.9M21.1 24.7l0 2.6M20.4 24.1l0 1.8M12.1 20.8l1.9 0M18.4 22.9l-1.7 0.2M13.4 23.9l1.1 0.6M33.4 12.7l0 2.4M26.2 13.4l0.6 -1.8M34.6 20.7l-1.5 -1.8M9.3 21.1l0 1.3M16.6 15.3l0 1M22.2 9.7l1.3 0M28.5 9.8l1.9 0M33.7 18.6l1.3 -1.4M8.5 21.9l0 1.7M16.4 11.2l0 1.6M31.2 12.3l0 1.9M32.4 15.4l0 2.4M10.3 18.3l1.7 0M19.1 10.5l1.4 0.4M16 20.1l0 1M24.7 18l-0.3 -1.4M23.7 9.5l0 2.6M18 14.5l-1.5 1M28.5 23.6l0 1.6M18 8.8l0 1.1M9.1 20.1l-0.4 1.2M31.5 22.3l0 1.4M26.6 17.6l0 0.8M15.7 15.5l0 1.3M24.6 15.5l0.4 -0.3M19.7 22.5l1.8 -0.2M13 16.8l1.6 0M9.9 16.8l0 0.9" stroke="#b06a28" stroke-width="0.8" fill="none"/><path d="M35.4 14.6l-0.1 1.6M19.1 24.5l0 2.6M19.3 16.1l0 1.9M8.5 18.4l0 0.9M12.4 16.6l0 2.2M19.4 23.8l1.4 1.6M23.9 21.7l0.2 -1.3M22.3 20l0 1M12.8 22l0.6 -0.3M8.3 14l1.8 0M20.5 16l0 1.1M11.2 20.8l0 1.8M19.7 20.2l1 -1.3M34.9 23.7l-0.2 1.6M30.7 16.7l2.3 0M29 24.3l2 0M9.7 21.6l0 2.1M33.2 18.2l0 0.9M22.2 15.8l0.4 0M26.6 15.7l0.9 0M23.1 23l0 2M35.8 17.7l0 1.3M31.2 14.9l-0.9 0.9M32.8 23.7l0 1.8M16.5 24l0 1.1M19.1 15l0 2.1M16.8 16.1l-0.9 1.1M27 20.3l1.8 0M31.5 21.9l0 2M22 24.5l0 1.6M35.1 14.8l1.5 0.4M9.1 22.8l0 1.7M30.8 17.6l0 1M17.3 15.2l2.3 0M9.1 20l1 -0.9M22.6 21.8l2.6 0M33.4 25l0 0.8M24.3 20.6l0 1.2M29.9 23.1l0 1M28 18.8l0 2.5M16.9 14.9l1.5 0M25.9 22.7l0 1.6M33.2 19.5l1.5 1.1M26.1 15.3l-0.7 -0.7M21.9 20.1l0.1 1.5M29.9 21.4l0 1.9M21.8 22.6l0 2.2M27.8 16l-0.1 -0.2M17.1 18.4l1.5 -0.1M22.7 19.3l0 2.4M19.5 14.3l0 1.3M29.9 16l0 2.4M16.2 24.6l0 1M13.5 18.5l1.4 0M35 24.8l2.6 0M32.1 25.1l1 0M23.7 14.6l2.6 0M18.8 21.8l0.8 -0.4M22.1 15.4l0.5 -0.6M19.8 23.7l0 1.2" stroke="#b87230" stroke-width="1" fill="none"/><text x="21.6" y="32.4" font-family="'Liberation Serif',serif" font-size="4.4" fill="#d8c070" text-anchor="middle" font-weight="bold" letter-spacing="0.5">BORDEAUX</text><text x="21.6" y="36" font-family="'Liberation Serif',serif" font-size="2.7" fill="#d8c070" text-anchor="middle" font-weight="bold" letter-spacing="0.1">WINE CELLAR</text><path d="M4.5 41.4H38.8L36.4 44.8L38.8 48.2H4.5L6.9 44.8Z" fill="url(#g3)"/><text x="11.2" y="45.9" font-family="'Liberation Serif',serif" font-size="2.8" fill="#4a2210" text-anchor="middle" font-weight="bold">19</text><text x="32.1" y="45.9" font-family="'Liberation Serif',serif" font-size="2.8" fill="#4a2210" text-anchor="middle" font-weight="bold">85</text><circle cx="21.65" cy="44.6" r="5.4" fill="#c9a85e"/><circle cx="21.65" cy="44.6" r="4.1" fill="#6a2024" stroke="#8d6a2c" stroke-width="0.5"/><path d="M19.2 42.4H24.1L21.65 47.6Z" fill="#b7835a"/><text x="21.6" y="54" font-family="'Liberation Serif',serif" font-size="2.4" fill="#c77a2c" text-anchor="middle" font-weight="bold" letter-spacing="0.1">PREMIUM WINE</text><text x="21.6" y="57.4" font-family="'Liberation Serif',serif" font-size="2.7" fill="#c77a2c" text-anchor="middle" font-weight="bold" font-style="italic">Finest Selection</text><text x="21.6" y="60.6" font-family="'Liberation Serif',serif" font-size="2.7" fill="#c77a2c" text-anchor="middle" font-weight="bold" font-style="italic">Grand Reserve</text><path d="M9.2 61.3l1.8 0M11.5 57.4l0.7 1.1M4.9 53.8l0.8 -0.7M10.1 53.8l0 1.4M6.3 53.4l1.7 0M7 58.9l-1.4 -0.7M5.3 59l1.4 0M6.4 60.1l-0.2 1M6.3 55.6l-0.8 -1.1M4.8 59l-1.4 -0.1M7.5 55.4l0 1.3M5.6 61.6l0 1.5M9.3 58.8l1.5 0M11.5 53.8l0 1.2M10.1 56.4l0 0.9M5.5 58.8l0 1.4M6.4 55.2l0 2.1M9.2 57.1l0 2M8.8 53.4l0 2.1M7 56.3l0 2M6.4 57.9l0.1 -0.4M6.5 59.2l0 1.7M38.1 53.4l1.5 0M38.4 56l1.6 0M34.1 61.5l0.7 -1.4M38.6 57.7l1.6 0M35.1 61.7l0 1M38.7 54.7l0 1.4M37.9 55.9l0 1.2M33 52.2l0.7 -1.1M33.1 62.2l-0.2 0.2M38.6 54.5l0.8 0M34.9 54.4l0 1.4M34.5 61.3l0 0.8M37.5 61.6l-0.6 -0.4M37 52.8l0 1.5M33 56.8l0 2.1M35 55.6l0 1.2M37.1 60.3l1.3 0.3M34.1 56.4l0 1.3M34.9 61l0.9 0M35.3 55.5l1 0.3M36.2 56.4l0 1.9M37 57.8l1 0.6" stroke="#c77a2c" stroke-width="0.8" fill="none"/></g>
<g transform="translate(359.3 382.2)"><path d="M21.75 2.8C15.4 3.5 10.3 5.7 7.3 9.1V10.7L3.5 12.3V55.9L6.3 57.3V58.9C9.3 61.9 14.4 64.2 21.75 64.8C29.1 64.2 34.2 61.9 37.2 58.9V57.3L40 55.9V12.3L36.2 10.7V9.1C33.2 5.7 28.1 3.5 21.75 2.8Z" fill="#fff" stroke="#fff" stroke-width="5.4" stroke-linejoin="round"/><path d="M21.75 2.8C15.4 3.5 10.3 5.7 7.3 9.1V10.7L3.5 12.3V55.9L6.3 57.3V58.9C9.3 61.9 14.4 64.2 21.75 64.8C29.1 64.2 34.2 61.9 37.2 58.9V57.3L40 55.9V12.3L36.2 10.7V9.1C33.2 5.7 28.1 3.5 21.75 2.8Z" fill="url(#beige)" stroke="#c29a4c" stroke-width="1.4" stroke-linejoin="round"/><path d="M4.2 32.2H39.3V55.5L36.5 56.9V58.6C33.6 61.4 28.9 63.6 21.75 64.2C14.6 63.6 9.9 61.4 7 58.6V56.9L4.2 55.5Z" fill="#f0ebdc"/><path d="M5.6 32.4V56.4M7.2 32.4V56.4M8.8 32.4V56.4M10.4 32.4V61.6M12 32.4V61.6M13.6 32.4V61.6M15.2 32.4V61.6M16.8 32.4V61.6M18.4 32.4V61.6M20 32.4V61.6M21.6 32.4V61.6M23.2 32.4V61.6M24.8 32.4V61.6M26.4 32.4V61.6M28 32.4V61.6M29.6 32.4V61.6M31.2 32.4V61.6M32.8 32.4V61.6M34.4 32.4V61.6M36 32.4V56.4M37.6 32.4V56.4" stroke="#e2dac5" stroke-width="0.55" fill="none"/><path d="M4.2 31.9H39.3" stroke="#8b6a45" stroke-width="0.8"/><path d="M21.5 25.5l-0.8 -0.8M27.6 24.6l0 1.7M16.5 20.5l2.8 0M27.5 26.5l0 1.8M10.8 27.7l0 1.4M36.4 22.8l0.5 1.1M25.6 20.7l-1 -0.4M10.4 19.1l0 0.8M18.2 29.3l-0.3 -1.6M17 19.2l0 2.2M25.3 18.8l1.7 0M18.6 20.1l0 1M27.4 26.7l1.7 0M35.7 23.1l0 1.6M34.3 20.4l1.8 1.5M20.6 24.2l0.9 1.3M11.9 26.2l-1.1 -1.2M32.1 25.7l1.9 0M14.3 21.6l0 1.7M10.9 29.9l0.4 -1.7M24.7 20.4l0 1.1M21.6 19.4l0 1.3M20.7 30.3l2.5 0M28.6 25.2l0 0.9M10.5 25l0 2.8M12.5 20.1l2.1 0M8 22.8l2.6 0M30.2 29.6l2.9 0M20.8 22.1l0 2.6M26.3 26.3l0.6 -0.8M27.7 30.3l0 2.9M19.1 19.9l2.5 0M21.4 21.8l-1.7 0.7M17.5 26.2l1.4 0M12.7 28.9l1.4 0M24.5 28.2l0 1.8M11.1 28.2l0 2.6M23.5 25l1.4 0M20.2 20.6l0 2.1M25.1 22.6l2.5 0M30.1 18.4l1.2 0M31.5 25.9l2.1 0M22 21.1l-1.9 -2M15.4 20.2l0 2.2M18.3 30.8l0 2.9M36.4 25.4l-1.8 1.8M19.9 22.7l-0.4 -1.7M7.2 28.6l0 2.2M9.1 28.8l-0.6 1.2M33.9 21.4l3 0M35.5 25.6l0.8 0M31.8 30.5l1.3 0M10.3 26.5l2.1 0M32.1 18.9l0 1M15.9 19l0 1.3M31.3 25.1l0 1.9M11.1 31l0 1.3M23.9 29.8l1.1 0M25 27.9l0.6 -1M31.7 27.3l-1.3 1.4M21.1 21.2l0 1M33.8 20.2l1.4 0M14.1 22.9l-1.8 -0.5M16.4 24.6l2.7 0M25.8 29.3l1.3 -2M8.4 25.1l0 1.6M22.6 25.2l1.1 -1.2M23.9 24.5l2.4 0M28.3 27.5l0 1M24.3 21.6l0 1M8.7 24.1l0.5 -1M35.5 20.9l1 0M35.7 30.1l-0.5 -0.2M21.6 30.2l1.3 0M34.1 23.8l1.9 1.1M10.2 28.9l3 0M17.9 20.7l0 3M19.6 18.6l2.9 0M12.9 30.3l-1.2 -1.2M10.8 19.7l0 1.3M30.9 24l2.2 0M10.6 28.3l0 1.9M13.1 21.7l0 1.7M19.7 19.7l-0.7 0.7M12.2 18.9l-1.1 -2.1M34.8 23.8l0 2.2M16.7 30.8l0.7 0.8M16.2 30.1l-1.1 -1.9M8.3 25.1l2.6 0M34.1 23.3l1.7 0M34.1 21.2l0 1.2M34.6 20.6l-1.1 -0.5M11.9 30.9l0 1.2M27.6 24.6l0 1.8M33.7 20.3l1.3 0M21.6 23.3l1.5 0M6.8 21l-0.5 -1.6M9.7 27.7l0 2.9M22.4 19.2l0 2.2M36.6 30.1l0 2.1" stroke="#86705a" stroke-width="0.75" fill="none"/><path d="M34.3 22.1l-1 -0.1M33.4 23.7l1.1 0M35.3 29.5l0 1M20.9 25.2l-0.6 0.3M11.7 22.4l0 1.8M23.5 26.1l-0.7 -0.6M20.6 29.1l0 1.3M19.5 26.8l0 1.1M28.5 25.7l0.8 0M14.3 21.4l0 2.4M36.1 28.2l0 1.8M33.4 23.6l0 2.1M17.1 24.8l0 2.3M22.2 21.4l0 2M10.4 26.6l0 1.8M17.1 26.5l0 1.5M26.3 22.9l1.8 1.7M34.4 29.1l2.3 0M18.9 21.1l1.5 -0.9M18 22.6l-1.2 1.1M8.1 24.2l-0.1 -1.3M7.9 26.7l0 1.3M24.7 23.3l0 2.2M28.3 26.1l0 1.7M35.3 25.2l0 2.5M17.2 25.3l0 2.4M27.1 25.3l1.4 0M20.5 25.2l0 2.1M29.2 20.8l0 2.1M17.2 21.8l2.6 0M17.4 25.9l1.8 0M24.5 28.8l1.4 0.7M29.4 27.4l0.7 0.9M8.7 22l1.6 0M13.7 26.4l0 2.2M16.4 28.8l0 2.5M16.6 27.6l0 1.7M17.5 28.3l0.3 -1.4M22.4 22.7l0 2.1M23 29.6l-1.7 1.6" stroke="#7a634c" stroke-width="1" fill="none"/><path d="M20.9 4.8L21.8 7L23.1 5.2M21.8 7V8.4" fill="none" stroke="#5a4632" stroke-width="0.7"/><text x="21.8" y="10.9" font-family="'Liberation Serif',serif" font-size="2.9" fill="#3a3026" text-anchor="middle" font-weight="bold">Wine House</text><text x="21.8" y="13.4" font-family="'Liberation Serif',serif" font-size="2" fill="#5a4632" text-anchor="middle">· · ·</text><text x="21.6" y="45.4" font-family="'Liberation Serif',serif" font-size="13.8" fill="#a07f35" text-anchor="middle" font-style="italic" letter-spacing="-0.1">Wine</text><text x="21.8" y="51.1" font-family="'Liberation Serif',serif" font-size="3.8" fill="#4a3a2a" text-anchor="middle" letter-spacing="0.42">COLLECTION</text><text x="21.8" y="55.6" font-family="'Liberation Serif',serif" font-size="2.4" fill="#4a3a2a" text-anchor="middle" font-style="italic">vol</text><text x="21.8" y="57.8" font-family="'Liberation Serif',serif" font-size="2.2" fill="#4a3a2a" text-anchor="middle">12</text><text x="21.8" y="62.4" font-family="'Liberation Serif',serif" font-size="3.3" fill="#4b3b2a" text-anchor="middle" font-weight="bold" font-style="italic">Premium quality</text></g>
<g transform="translate(46.3 462.6)"><path d="M23.8 2.3C19.5 2.5 16.3 4.6 14.4 7C12.6 9.4 9.5 12 5 13.4C4.1 19 3.6 26 3.6 32C3.6 48 10 63 23.8 67.4C37.6 63 44 48 44 32C44 26 43.5 19 42.6 13.4C38.1 12 35 9.4 33.2 7C31.3 4.6 28.1 2.5 23.8 2.3Z" fill="#fff" stroke="#fff" stroke-width="6.0" stroke-linejoin="round"/><path d="M23.8 2.3C19.5 2.5 16.3 4.6 14.4 7C12.6 9.4 9.5 12 5 13.4C4.1 19 3.6 26 3.6 32C3.6 48 10 63 23.8 67.4C37.6 63 44 48 44 32C44 26 43.5 19 42.6 13.4C38.1 12 35 9.4 33.2 7C31.3 4.6 28.1 2.5 23.8 2.3Z" fill="#581a1c" stroke="#b3853a" stroke-width="1.4" stroke-linejoin="round"/><path d="M22.1 30.2l-0.1 0M26.8 19.4l1.9 0M33.9 16.7l0 1M34.4 34.1l0 2.6M39.8 33l1.1 0M7 29.3l0 1.1M14.8 14.9l1.6 0M35.6 29.1l1.7 0M29.4 27.3l0 2.6M40.9 38.4l-0.7 -1M16.5 16l-0.4 1.3M19.8 41.8l-1.8 -1.1M37.9 27.6l-0.4 -1.6M28.2 36.6l0 1M18 42l-1.4 -0.9M10 15.7l-1.2 0.2M21.9 19.5l-1.3 0.5M10.5 26.2l0 1.3M40 37.3l0 2.4M13.8 25.4l0.5 -1.5M40.6 20.2l0 2.2M17.8 22.6l0 1M26.6 21l1.5 0M22.1 41.8l1.8 0M36.4 19.3l0 2.4M34.7 21.2l0 2.1M38.9 19.7l1.4 0.4M21 17l0 2.5M14.7 34.4l0 2.3M27.1 22.5l0 2.1M8.9 20.6l2.3 0M27.7 22.1l-1.1 -1.8M15.8 26.9l0 1.1M19.2 30.6l0 1.5M37.2 42.4l2 0M26.7 18.1l0 0.8M37.9 34.3l-1.7 0.5M23.1 35.2l0 2.6M9.1 29.8l1.5 0.9M30.8 37l-0.5 0.7M37.6 39.3l2.2 0M36.3 30.6l1.5 0M26.6 31.7l0 2M40.8 39.5l-0.4 0.9M26.5 26.8l-1.5 0.9M7.5 31.4l1.2 0M30.6 28.4l2.5 0M15.3 14.3l0 2M13.5 18.9l0.6 -0.2M37.3 23.5l1.2 0M21.4 37.4l1.4 -0.4M26.6 23.2l0 1.7M35.4 38.6l1.6 -0.8M12.3 27.1l0 1.2M20.8 32.1l1.4 0M35.4 42.5l0.9 0M7.6 39.3l0 2.1M26.2 23l-1.8 -1.3M22.2 14.7l-1 -1.3M8.1 32.2l1.9 0M29.1 37.4l0.7 -1.1M22.9 19.2l0 1.6M31.1 19.2l0 1.4M30.6 29.1l2.2 0M20.1 37l-1.5 1.6M31.4 17.8l1.9 0M37.9 24.9l2.4 0M34 41.4l2 0M13.6 34.9l0.5 0.8M13.9 40.1l1.7 0.1M33.8 23.3l1.3 -0.6M9.4 26.8l2.2 0M23.3 14.8l-1.6 1.1M12.5 23.7l-1.3 -1.3M24.3 35l0.7 1.6M23.5 41.5l0 1.2M24.7 22.4l0.5 0.1M35.6 30.2l0 1.5M35.7 40.1l0 2.3M39.9 29.2l1.2 0M25 28.6l0.8 0M39.9 29l2.2 0M25.9 28.2l0.9 0M25.1 26l1.5 -0.8M22.8 17.7l2.3 0M37.6 27.8l0 1.1M27.8 40.8l0 2.2M7.3 19.6l0 2M17.6 24.3l1 0M31.7 17.6l1.3 0M13.3 29.4l1.5 0M20.8 29.4l0 1.2M28.3 32.5l2.3 0M27.6 38.8l0 2.1M34.5 40.2l0 1.4M38.3 20.3l1.4 -1.3M14.8 35.1l0 1M35.2 26.2l-1.4 -0.4M30.1 14.5l0 2M37.9 42.1l0 1.7" stroke="#340e10" stroke-width="1.2" fill="none" opacity="0.8"/><path d="M4.6 43.9H43C42.4 47.2 41.4 50.3 40 53.1H7.6C6.2 50.3 5.2 47.2 4.6 43.9Z" fill="url(#g1)"/><text x="23.8" y="50" font-family="'Liberation Serif',serif" font-size="4.2" fill="#3b2412" text-anchor="middle" font-weight="bold" letter-spacing="0.2">COLLECTION</text><path d="M21.9 6H25.7L24.3 8.2V9.4H23.3V8.2Z" fill="#b8822f"/><text x="23.8" y="12.2" font-family="'Liberation Serif',serif" font-size="2.6" fill="#c08a3a" text-anchor="middle" font-weight="bold">Wine House</text><text x="23.8" y="14.2" font-family="'Liberation Serif',serif" font-size="1.8" fill="#c08a3a" text-anchor="middle">· · · ·</text><text x="23.8" y="27.3" font-family="'Liberation Serif',serif" font-size="9.3" fill="#dccb98" text-anchor="middle" font-weight="bold" letter-spacing="0.45">RED</text><text x="23.8" y="37" font-family="'Liberation Serif',serif" font-size="9.3" fill="#dccb98" text-anchor="middle" font-weight="bold" letter-spacing="0.45">WINE</text><text x="23.8" y="57" font-family="'Liberation Serif',serif" font-size="3.1" fill="#c77d2d" text-anchor="middle" font-weight="bold" font-style="italic">Premium Quality</text><text x="23.8" y="59.8" font-family="'Liberation Serif',serif" font-size="2.2" fill="#c77d2d" text-anchor="middle">• • •</text><text x="23.8" y="62.4" font-family="'Liberation Serif',serif" font-size="2.1" fill="#c77d2d" text-anchor="middle">2019</text></g>
<g transform="translate(110.8 462.5)"><path d="M3.3 22.8C3.3 10.6 11.4 2.8 22.25 2.8C33.1 2.8 41.2 10.6 41.2 22.8V46C41.2 58.2 33.1 66 22.25 66C11.4 66 3.3 58.2 3.3 46Z" fill="#fff" stroke="#fff" stroke-width="6.6" stroke-linejoin="round"/><path d="M3.3 22.8C3.3 10.6 11.4 2.8 22.25 2.8C33.1 2.8 41.2 10.6 41.2 22.8V46C41.2 58.2 33.1 66 22.25 66C11.4 66 3.3 58.2 3.3 46Z" fill="#ece4c8" stroke="#b08335" stroke-width="2.1" stroke-linejoin="round"/><path d="M11.1 39.2l1.9 0M12.8 41.3l0.1 0M13.5 25.1l0 2.2M7.9 41.4l0 1.4M7 45.5l1.7 0.5M6.7 31.8l1.1 0M37.4 32.6l0 2.8M9.8 44.1l2.1 0M17.1 35l0 0.9M34.5 29.8l-1.3 2.1M35.5 40.5l0.4 1M9.7 34.8l-1.3 1.9M35.2 33.4l0 1.9M18.5 45.5l0 0.9M8.7 39.8l0 0M24 40.4l0 2.3M24.2 37.8l0 1.2M17.2 44.1l0 2.2M15.8 27.1l0 2.8M31.6 32.7l2.4 0M35.6 44.7l3.2 0M37.7 37.2l0 -0.6M13.9 43l0 1M32.5 40.9l2.8 0M7.3 30.3l0 1.8M11.3 26.4l0 3M38.4 40.4l1.4 0M37.6 35.8l-2.1 -1.3M33.6 41.4l0.5 -0.3M25 42.5l0 2.1M14.8 40.8l0 2.4M37.5 25.5l2.3 0M34 37l0 1.8M37.6 43.7l0 1M8.7 25.5l1.1 0M34.6 38.5l0 2.1M16.4 35.2l0 1.2M11.7 32.8l0.2 -2M29.3 43l1.3 -2.2M21.1 26.3l-1.5 0.9M14 39.4l0 0.9M18.6 31.4l-0.9 0M23.9 44.5l0 2.2M22.6 40.1l-0.9 0.9M23.2 36.5l0 2.8M38.2 32.3l0 3.2M9.2 26.6l0 2.8M31 34.2l0.8 0M27.1 34.1l1.7 0M19 29.6l0 1.8M13.9 39.5l1 -0.2M13.5 32.9l2.3 0M37.8 26.8l2 0M29.6 43.3l0.6 1.2M27.9 42.7l2.4 0M13.8 43.9l0 2.3M33.1 44.9l-2.2 -0.8M16 33.1l0 2.1M8.3 31.2l1.1 -0.2M9.2 44.7l-1.3 -0.7M27 39l0 3.1M16.4 30.2l-1.6 0.8M12.3 37.3l0 1.7M37 34.6l2.3 0M15 28.6l0 1.5M11.9 44.8l0 2.7M36.8 39.5l0 2M6.9 37.5l-1.2 -2.2M23.8 26.9l0 1.9M35.5 32.6l0 2.7M33.1 35.9l0 1.3M19.1 36.4l0 2.7M33.8 44.1l-2.2 0.4M8.3 43.5l1.2 -1.4M7.6 41.8l2.3 0M21.3 41.5l0 1.4M17.4 31.1l2.9 0M8 26.4l2.4 0M11.9 30.6l0 0.9M22.1 39l1.2 0M9.1 44.2l1.8 0M28.7 40l1 0M33.2 29.4l0 1.6M23.4 37.9l0 2.5M22.1 28.3l1.4 1.8M28.3 29.5l1.8 0.1M35.9 45l0 3.1M36.9 41.4l0 1.6M26.1 37.5l0.7 -1.5M36.7 36l-1.3 2.2M24.1 41l1.7 -0.6M8.4 33.4l0 2.1M32.8 32.5l0 0.9M19.7 37l0 2.4M12.6 27.2l0.1 1.8M22.8 27.5l0 1.8M27 40.9l0.7 -1.1M20 32.8l1.4 0M23.6 34.5l0 2.8M25.2 41.5l1 2.2M18.2 33.1l0 2.4M25 36.9l-1.4 -1.2M30.1 41.7l0.9 0M18 42l1.9 0M18.6 37.9l2.5 0M34.5 40.5l0 1.4M31.7 41.3l-1.3 1.6M35.3 26.6l0 2.3M10.5 42.1l0 2.4M15.5 29.5l0 2M29.4 29.5l1.6 0M27.3 32.6l0 1.1M7.5 39.3l1.1 0M35 38.5l0 2.5M25.5 34.1l3.1 0M18.1 38.1l1.7 0M17.2 40.6l1.9 0M22.8 29.6l-2.2 0.6M20.8 29.6l2.2 0M8.5 35.1l0 2.7M16.5 31.8l0 0.9M11.8 28.1l2.8 0M13 27.3l1.1 0M19.1 40.7l0 2.5M23.6 26.8l0 2.2M8.8 29.2l2.8 0M23 38.7l0 1.5M16.2 43.8l0 2.7M6.7 35.3l1.2 0.4M11.7 44.1l0 3.1M31.5 39.8l1.2 0M17 38.7l1.7 0M32.4 26.1l0 1M16.4 41.3l-1.6 -0.9M9.3 38.6l1.4 0M18.1 42.8l2.5 0M26.6 34.8l1.7 0M12.2 35.2l0 1.6M11.8 43.8l1.3 0M6.7 29.4l-0.7 0.7M13.3 38.4l2.6 0M23.3 32.7l0 2.2M33.4 39.2l1.6 0M35.4 42.4l0 2.4M31.4 38.9l1.7 -1.1M38.9 31.7l0 3.1M11.2 33.1l1.5 0M14.5 41.4l2.6 0M32 43l1.4 2.1M22.3 39.5l3.1 0" stroke="#151515" stroke-width="0.8" fill="none"/><path d="M37.2 27l0 2.8M12 26.8l1.5 0M35 27.9l-0.7 0.4M36.4 32.7l0.8 -1.8M34.7 31.7l0 1.2M33.7 31.6l1.1 1.8M24.5 32.8l1.3 0M37.2 28.8l1.8 0.6M10.6 34.2l1.2 0M7.6 31.1l0 2.7M22.5 30.9l2.1 0M35.9 28.7l0 2M15.7 31.8l1.7 0M27.9 31l0 2.8M17.6 30l2.7 0M37 30.9l1 0M35.2 27.3l1.5 0M16.7 29.3l0 0.9M23.5 33.9l1.2 0M28.6 26l2.5 0M36 30.3l0 0.1M25.1 35.9l-0.1 0.9M27 29.2l1.3 0.4M36.7 25.7l2.1 0M17.1 27.3l1.7 0M14.8 25.9l-0.6 -1.5M13.1 28.2l-1.3 -0.9M9.2 30.4l0 1.5M30 35.2l-1.8 -0.5M33.7 25.8l0 1.8M18.5 33.4l-0.1 -1M13.5 28.3l0 2.1M11.1 34.8l0.9 0M22.3 31.8l0 1.8M7 33.5l0 2.1M38.1 34.4l0 1.9M10.6 29.1l1.2 -1.9M18.4 32.2l0 2.4M35.1 31.3l0 2.5M22.7 27.5l0 1.1M33.3 30.9l2.4 0M37.7 27.5l2.5 0M30.8 29.6l1.2 0M11.3 26l0 1.3M22.9 35.7l0 1.9M34.2 31.8l2.3 0M6.7 35.5l2.4 0M32.9 26.5l0 1.2M22.5 35.4l-0.3 0.5M30.1 29l1.7 0.9M35.4 33.9l1.4 0M15.2 28l0 2.7M15.7 25.8l0 1M20.5 29l0 1.8M19.5 29.2l-0.8 0.2M34.6 35.6l0 0.9M37 30.9l0 1.1M13.8 28.8l0 0.9M38.4 34.1l0 1.8M32.1 30.8l0 1.5M18.4 35.1l1.7 0M26.6 26l2.4 0M27.9 29.3l0 0.8M8.7 27.1l2.4 0M13.1 30.5l2.1 0M6.7 35.2l1.4 0M13.8 32.7l-0.6 -0.4M24.2 27.3l2.6 0M24.1 34.1l0 2.5M31.5 27.9l2.2 0" stroke="#151515" stroke-width="1.1" fill="none"/><rect x="2.4" y="46.7" width="39.7" height="7" fill="url(#g1)"/><text x="22.2" y="51.7" font-family="'Liberation Serif',serif" font-size="4.1" fill="#2e1c0c" text-anchor="middle" font-weight="bold" letter-spacing="0.15">COLLECTION</text><text x="22.2" y="9.8" font-family="'Liberation Serif',serif" font-size="3.1" fill="#1a1a1a" text-anchor="middle" font-weight="bold" font-style="italic" transform="rotate(-5 22 9)">Premium Quality</text><text x="22.2" y="21.1" font-family="'Liberation Serif',serif" font-size="9.8" fill="#111" text-anchor="middle" font-weight="bold" letter-spacing="-0.1">Wine</text><text x="22.2" y="59.4" font-family="'Liberation Serif',serif" font-size="2.9" fill="#1a1a1a" text-anchor="middle" font-weight="bold" font-style="italic">Vintage of Wine</text><text x="22.2" y="63.2" font-family="'Liberation Serif',serif" font-size="2.6" fill="#1a1a1a" text-anchor="middle" font-weight="bold">12</text></g>
<g transform="translate(172.8 462.2)"><path d="M22.2 2.6C15.4 3.6 9.4 7.4 6.4 12.4V13.8H3V61.2L6.6 63.4L7.6 66.4H36.8L37.8 63.4L41.4 61.2V13.8H38V12.4C35 7.4 29 3.6 22.2 2.6Z" fill="#fff" stroke="#fff" stroke-width="5.2" stroke-linejoin="round"/><path d="M22.2 2.6C15.4 3.6 9.4 7.4 6.4 12.4V13.8H3V61.2L6.6 63.4L7.6 66.4H36.8L37.8 63.4L41.4 61.2V13.8H38V12.4C35 7.4 29 3.6 22.2 2.6Z" fill="#260c11" stroke="#d6aa2c" stroke-width="1.6" stroke-linejoin="round"/><path d="M16.3 30.9l0 2.2M19.3 30.9l0 2.3M19.5 52.9l1.1 0M28.9 42.7l2.8 0M18.2 27.7l-0.4 -1.2M23.9 39.8l-1.1 -1.1M30 46.2l1.3 -0.6M20.9 56.3l-1.8 0.9M36.8 49.8l0 2.4M33.5 33.8l1.2 0M17 38.8l0 1.6M31.5 56.3l1.9 1.9M35 37.7l0 2M29.1 50.6l0 1.2M38.1 48l1 0M25.6 58.9l2.8 0M20.7 42.9l-0.2 1.1M29.5 31.1l0 2.8M18.9 33.8l0 2.2M36.5 43.6l2.4 0M22.7 40l2.1 0M16.9 30.9l0 2.3M32.6 61.1l-1 1M39.6 39.2l0 1.6M22.8 33.2l0 1M36.8 28.7l1.2 0M20.6 55.7l0 1.2M26.9 51.3l2.5 0M25.6 45.3l-0.2 0.9M27.2 31.7l0 2.4M33.9 60l2 0M20 56.9l0 1.6M19.4 40.3l0 1.7M33.1 46l0 2.4M33.6 56l0 2M37.5 36.1l0 2.4M24.7 41l-0.5 -1.2M21.1 39.1l1.5 0M34.5 29.3l0 2M27.5 44.5l-0.9 -1.2M16.8 43.9l0 1.7M16.1 27l0 2.3M23.2 58.9l1.6 0M34.7 35.2l2.5 0M29 38.2l0 1.9M20.5 40.1l2.7 0M32.2 45.2l-0.8 -0.4M32.3 46.4l0 1.6M35.8 35.5l-1.8 1.8M32.4 38.3l1.2 -1.7M22 44.2l-1.4 -1.8M23.5 28.6l1.9 0M26.6 31.9l0 2.4M26.6 43.8l2.2 0M37.6 55.9l-0.6 -1.3M18.2 57.1l0 1.9M37.8 38.3l0 1.6M38.7 50.9l-1.8 0.9M26.8 41.1l0.9 1.6M33.7 58.9l1.9 0M34.8 42.9l0 2M36.9 57.5l0 1.6M21.5 38.9l-0.3 -0.7M22.5 42.4l1.5 0M20.5 34.9l0 2.6M20.1 53.4l0 2.4M22.4 54.3l1 0M18.3 55l1.8 0M24.5 51.2l0.9 0M30.4 38l0.2 1.1M18.9 51.7l2.5 0M37.2 46.3l2.3 0M22.3 46.1l0.4 0.2M36.5 61.1l0 0.9M30.7 32.2l-0.1 0.1M35.6 57.4l0 1.7M20.3 43.1l0 2.6M24.5 40.6l1.3 -0.6M28 50.2l0 1.1M36.6 32.7l0.9 0.4M24.3 57l-1.7 1.6M31.3 37.1l0 1M35.5 56.7l0 1.2M17.8 41.5l0 0.9M23.1 55.7l0 1.6M28.3 32.7l0 0.9M19.5 61.1l0.8 1.6M23.8 35.7l0.4 1.7M24.6 41.5l1.5 -1.3M22.3 27.5l2.6 0M29.6 32.2l2.1 0M18.5 59l1.8 0M24.3 32.6l1.5 0M21.6 49.6l2.7 0M39.2 43.3l-0.5 -0.3M29.6 61.3l0 1.7M24.1 55.2l-0.1 -1.6M30.3 47.6l2.4 0M27.1 46.2l-1.9 -1M32.5 61.2l-0.9 1.9M22.7 42.8l0 2M25.4 51l-1.5 0.6M30.4 36.6l0 2.7M32.7 48.9l0 2.6M25.6 43.3l1.7 0M38.9 43.4l2.3 0M38.4 33l0 2.7M30.5 40l-1.5 -1M17.7 50.5l1.4 0M26.5 35.9l1 -0.5" stroke="#6d2a30" stroke-width="1" fill="none" opacity="0.9"/><path d="M6.3 27.4l0 2.6M13.4 35.5l0 1.8M19.3 32.4l1.5 -0.5M5 36.1l0 0.8M17.4 37.5l1.8 -1.2M6.4 25.9l-1.5 -1.3M5.3 24.8l0 1.5M7.8 29l-1.3 1.2M17.6 33.1l2.3 0M15 27.7l0 1.3M11.8 39.8l0.9 0M13.1 37l2.2 0M6.5 25l0.9 0M10.1 30.2l0 0.9M5.1 39.2l2.7 0M13.4 39.3l0.5 0.1M13.6 27.6l0 2.2M8.3 37.6l2 0M19 34.3l0 1.3M5 24.4l0.4 1.8M18.3 29.1l1.7 -0.2M6.4 29.1l0 1.5M6.4 35.4l-1.1 1.1M14.9 31.7l-0.5 1.3M5.6 39.4l0 0.8M20 35.5l2.3 0" stroke="#6d2a30" stroke-width="0.9" fill="none" opacity="0.8"/><circle cx="22.2" cy="10" r="4.7" fill="#d2a62a"/><path d="M19.9 7.8H24.5C24.5 10 23.6 10.9 22.6 11.2V12.6H23.6V13.2H20.8V12.6H21.8V11.2C20.8 10.9 19.9 10 19.9 7.8Z" fill="#260c11"/><text x="22.2" y="22.9" font-family="'Liberation Sans',sans-serif" font-size="3.9" fill="#e5dcc6" text-anchor="middle" font-weight="bold" letter-spacing="0.55">PRODUCED</text><text x="22.2" y="27.8" font-family="'Liberation Sans',sans-serif" font-size="3.9" fill="#e5dcc6" text-anchor="middle" font-weight="bold" letter-spacing="0.6">NAME</text><text x="22.4" y="44.6" font-family="'Liberation Serif',serif" font-size="14.2" fill="#d8bf3c" text-anchor="middle" font-weight="bold" font-style="italic" letter-spacing="-0.25">Wine</text><text x="22.2" y="53" font-family="'Liberation Serif',serif" font-size="3.4" fill="#d9cdbd" text-anchor="middle" font-weight="bold" font-style="italic">Alcohol</text><text x="22.2" y="60.7" font-family="'Liberation Serif',serif" font-size="2.8" fill="#d2a62a" text-anchor="middle" font-weight="bold">Premium quality</text></g>
<g transform="translate(47 533)"><path d="M3.2 23C3.2 10.4 12.4 2.9 23.35 2.9C34.3 2.9 43.5 10.4 43.5 23V65.2H3.2Z" fill="#fff" stroke="#fff" stroke-width="6.2" stroke-linejoin="round"/><path d="M3.2 23C3.2 10.4 12.4 2.9 23.35 2.9C34.3 2.9 43.5 10.4 43.5 23V65.2H3.2Z" fill="#1f0b0d" stroke="url(#g4)" stroke-width="2.1" stroke-linejoin="round"/><g fill="none" stroke="#c79a2a" stroke-width="0.65"><circle cx="13.9" cy="22.9" r="1.5"/><circle cx="17.8" cy="30.7" r="1.5"/><circle cx="17.3" cy="25.5" r="1.5"/><circle cx="20.8" cy="28.8" r="1.5"/><circle cx="21.7" cy="30.2" r="1.5"/><circle cx="22.9" cy="26.5" r="1.5"/><circle cx="19.3" cy="29.6" r="1.5"/><circle cx="20.7" cy="31.4" r="1.5"/><circle cx="8.9" cy="30.4" r="1.5"/><circle cx="18.6" cy="29.3" r="1.5"/><circle cx="23" cy="24.1" r="1.5"/><circle cx="9.3" cy="30.4" r="1.5"/><circle cx="14.4" cy="30.3" r="1.5"/><circle cx="16.1" cy="25.7" r="1.5"/><circle cx="15.4" cy="31.4" r="1.5"/><circle cx="14.8" cy="31.7" r="1.5"/><circle cx="17" cy="34" r="1.5"/><circle cx="19.3" cy="24.5" r="1.5"/><circle cx="23.6" cy="31.8" r="1.5"/><circle cx="8.6" cy="30.2" r="1.5"/><circle cx="19.3" cy="31.7" r="1.5"/><circle cx="18.4" cy="26.1" r="1.5"/><circle cx="11.2" cy="26.4" r="1.5"/><circle cx="20.8" cy="30.6" r="1.5"/><circle cx="14.5" cy="26.7" r="1.5"/><circle cx="10.6" cy="30.7" r="1.5"/><circle cx="11.9" cy="34.3" r="1.5"/><circle cx="12.9" cy="34.7" r="1.5"/><circle cx="13.9" cy="34" r="1.5"/><circle cx="21.1" cy="31.4" r="1.5"/><circle cx="11.1" cy="28.6" r="1.5"/><circle cx="9.5" cy="24.6" r="1.5"/><circle cx="11" cy="30.5" r="1.5"/><circle cx="18.2" cy="31.1" r="1.5"/><circle cx="17.3" cy="27.5" r="1.5"/><circle cx="18" cy="35" r="1.5"/><circle cx="18.9" cy="27.7" r="1.5"/><circle cx="19.2" cy="22" r="1.5"/><circle cx="36.9" cy="32.9" r="1.3"/><circle cx="27.1" cy="28.4" r="1.3"/><circle cx="34.9" cy="25.8" r="1.3"/><circle cx="36.2" cy="35.1" r="1.3"/><circle cx="28.3" cy="34" r="1.3"/><circle cx="35.2" cy="33.6" r="1.3"/><circle cx="34.8" cy="25" r="1.3"/><circle cx="38" cy="31.3" r="1.3"/><circle cx="29.6" cy="28.2" r="1.3"/><circle cx="34.9" cy="23.8" r="1.3"/><circle cx="28.7" cy="27.8" r="1.3"/><circle cx="27.1" cy="28.1" r="1.3"/><circle cx="36.7" cy="31.6" r="1.3"/><circle cx="28.9" cy="33.2" r="1.3"/><circle cx="30.8" cy="26" r="1.3"/><circle cx="28.6" cy="34.2" r="1.3"/><circle cx="29.3" cy="34.3" r="1.3"/><circle cx="35.8" cy="28.7" r="1.3"/><circle cx="37.5" cy="31.9" r="1.3"/><circle cx="33.9" cy="29.6" r="1.3"/><circle cx="36.3" cy="28" r="1.3"/><circle cx="34.5" cy="31.8" r="1.3"/><circle cx="33.3" cy="32.4" r="1.3"/><circle cx="38" cy="34" r="1.3"/><path d="M22 22C26 18 30 17 33.5 14.6M30 17L33 24M27 19L24 27M31 20C35 21 38 23 40 27M33.5 14.6L35 20"/></g><rect x="4.2" y="37.2" width="38.3" height="14.4" fill="url(#g2)"/><text x="23" y="48.4" font-family="'Liberation Serif',serif" font-size="11.8" fill="#33200a" text-anchor="middle" font-style="italic" letter-spacing="-0.2">Wine</text><path d="M22.6 5.2C23.9 5.6 23.9 7 22.9 7.6C23.9 8.2 23.7 9.2 23.2 9.6" fill="none" stroke="#c79a2a" stroke-width="0.8"/><text x="23.4" y="11.8" font-family="'Liberation Serif',serif" font-size="2.9" fill="#c79a2a" text-anchor="middle" font-weight="bold">Wine Bar</text><text x="23.4" y="56.5" font-family="'Liberation Serif',serif" font-size="3.3" fill="#b8922a" text-anchor="middle" font-weight="bold" letter-spacing="0.45">COLLECTION</text><text x="23.4" y="61.4" font-family="'Liberation Serif',serif" font-size="3.3" fill="#d8c9a0" text-anchor="middle" font-style="italic">Vintage</text></g>
<g transform="translate(111.1 533)"><path d="M21.65 4C15 4.8 9.4 7.6 6.2 12V13H2.6V64.9H40.7V13H37.1V12C33.9 7.6 28.3 4.8 21.65 4Z" fill="#fff" stroke="#fff" stroke-width="5.0" stroke-linejoin="round"/><path d="M21.65 4C15 4.8 9.4 7.6 6.2 12V13H2.6V64.9H40.7V13H37.1V12C33.9 7.6 28.3 4.8 21.65 4Z" fill="#5c1b1c" stroke="#c6a05a" stroke-width="1.1" stroke-linejoin="round"/><path d="M14.2 16.8l0 2.3M13.8 17.7l-0.4 1.7M28.5 17.6l1.9 0M17.6 24.9l2.6 0M14.6 16.4l-1.2 0.4M17.8 21.5l1 -1.1M29.4 15.8l-0.1 1.5M31.3 22l1.1 0M19.2 11.9l-1.4 1.5M23.2 11.5l0 1.6M10.5 21.1l2.6 0M31.4 21.5l1.6 0.5M22.9 17.2l1.5 1.2M19.4 10l1.8 0M23.5 22.7l0 2.1M24.2 12.1l-1.6 -0.1M22.7 18.4l0.2 1.4M15.7 16.5l0 2M19.4 21.5l0 1.6M26.4 19.7l0.2 0M27.7 19.6l-0.1 -1.8M29.8 13.2l1.8 1M18.8 22.7l0 1.4M23.8 19.3l1.8 0M19 20.8l0 1.9M32.5 12.1l0.9 0M29.5 14l0 1.3M34.4 21l0 2.5M9.1 16.5l2.2 0M11.2 22.1l0 2.1M34.3 18.3l0 2M19.8 20.6l-1.4 0.2M25.9 23.8l1.9 0M29.6 11.2l0.3 0.5M11.5 17.2l1.2 0M34.7 22.5l0.9 0M21.9 17.9l0.6 0.4M22.1 24.6l-0.5 1.1M34.9 16.6l0 0.9M30.6 11.8l0 1.1M20.9 21.9l0.8 0M15.8 10l2.2 0M15.9 10.8l0 1.7M29.4 19.8l1.5 0M7.9 16.9l2 0M7.5 16.6l0 1.8M19.8 14l0 2.5M21.1 10.3l2.2 0M21.4 23.2l0.7 -1.7M18.8 17l0 1.7M26.6 20.9l0.9 -0.7M25 16.8l-1.4 -1.2M28.1 20.5l0 2.2M29.8 19.2l0.9 0M13.8 21.2l-1.2 -1.7M17.3 24l0 2.5M30.1 22.4l0.6 -1.1M19.7 15.1l1.4 0M13.5 12.2l0 2.1M21 8.7l0 1.1M27.4 22.3l-0.8 -0.3M13.8 19.5l0 2.2M20.8 17.6l1.5 -0.8M28.4 13.1l0 2.3M12.6 13.2l1.3 -0.4M28 15.1l0 1.8M12.1 12l2 0M13.5 12.2l1.3 0M23.5 19.7l0 2.4M21.4 13.5l1.8 -0.2M15.1 12.2l1.1 1.4M29 14.1l0 2M17.9 17.5l1.2 0M7.6 20.8l1 -0.6M16.8 18.9l0 2.1M22.3 17.3l-1.4 -1.1M22.4 22.6l1.4 -1.1M16.3 12.7l0 1.1M11.5 22l2.5 0M25.4 21l0.2 -1M19 15.9l0 1.8M29.7 14l0 1M17.7 11.9l2.5 0M13.8 14.4l1.1 0M32.6 24.7l0 1.5M23.4 21.9l-1.1 1.6M24.6 20.7l0 0.9M21.1 24.7l0 2.6M20.4 24.1l0 1.8M12.1 20.8l1.9 0M18.4 22.9l-1.7 0.2M13.4 23.9l1.1 0.6M33.4 12.7l0 2.4M26.2 13.4l0.6 -1.8M34.6 20.7l-1.5 -1.8M9.3 21.1l0 1.3M16.6 15.3l0 1M22.2 9.7l1.3 0M28.5 9.8l1.9 0M33.7 18.6l1.3 -1.4M8.5 21.9l0 1.7M16.4 11.2l0 1.6M31.2 12.3l0 1.9M32.4 15.4l0 2.4M10.3 18.3l1.7 0M19.1 10.5l1.4 0.4M16 20.1l0 1M24.7 18l-0.3 -1.4M23.7 9.5l0 2.6M18 14.5l-1.5 1M28.5 23.6l0 1.6M18 8.8l0 1.1M9.1 20.1l-0.4 1.2M31.5 22.3l0 1.4M26.6 17.6l0 0.8M15.7 15.5l0 1.3M24.6 15.5l0.4 -0.3M19.7 22.5l1.8 -0.2M13 16.8l1.6 0M9.9 16.8l0 0.9" stroke="#b06a28" stroke-width="0.8" fill="none"/><path d="M35.4 14.6l-0.1 1.6M19.1 24.5l0 2.6M19.3 16.1l0 1.9M8.5 18.4l0 0.9M12.4 16.6l0 2.2M19.4 23.8l1.4 1.6M23.9 21.7l0.2 -1.3M22.3 20l0 1M12.8 22l0.6 -0.3M8.3 14l1.8 0M20.5 16l0 1.1M11.2 20.8l0 1.8M19.7 20.2l1 -1.3M34.9 23.7l-0.2 1.6M30.7 16.7l2.3 0M29 24.3l2 0M9.7 21.6l0 2.1M33.2 18.2l0 0.9M22.2 15.8l0.4 0M26.6 15.7l0.9 0M23.1 23l0 2M35.8 17.7l0 1.3M31.2 14.9l-0.9 0.9M32.8 23.7l0 1.8M16.5 24l0 1.1M19.1 15l0 2.1M16.8 16.1l-0.9 1.1M27 20.3l1.8 0M31.5 21.9l0 2M22 24.5l0 1.6M35.1 14.8l1.5 0.4M9.1 22.8l0 1.7M30.8 17.6l0 1M17.3 15.2l2.3 0M9.1 20l1 -0.9M22.6 21.8l2.6 0M33.4 25l0 0.8M24.3 20.6l0 1.2M29.9 23.1l0 1M28 18.8l0 2.5M16.9 14.9l1.5 0M25.9 22.7l0 1.6M33.2 19.5l1.5 1.1M26.1 15.3l-0.7 -0.7M21.9 20.1l0.1 1.5M29.9 21.4l0 1.9M21.8 22.6l0 2.2M27.8 16l-0.1 -0.2M17.1 18.4l1.5 -0.1M22.7 19.3l0 2.4M19.5 14.3l0 1.3M29.9 16l0 2.4M16.2 24.6l0 1M13.5 18.5l1.4 0M35 24.8l2.6 0M32.1 25.1l1 0M23.7 14.6l2.6 0M18.8 21.8l0.8 -0.4M22.1 15.4l0.5 -0.6M19.8 23.7l0 1.2" stroke="#b87230" stroke-width="1" fill="none"/><text x="21.6" y="32.4" font-family="'Liberation Serif',serif" font-size="4.4" fill="#d8c070" text-anchor="middle" font-weight="bold" letter-spacing="0.5">BORDEAUX</text><text x="21.6" y="36" font-family="'Liberation Serif',serif" font-size="2.7" fill="#d8c070" text-anchor="middle" font-weight="bold" letter-spacing="0.1">WINE CELLAR</text><path d="M4.5 41.4H38.8L36.4 44.8L38.8 48.2H4.5L6.9 44.8Z" fill="url(#g3)"/><text x="11.2" y="45.9" font-family="'Liberation Serif',serif" font-size="2.8" fill="#4a2210" text-anchor="middle" font-weight="bold">19</text><text x="32.1" y="45.9" font-family="'Liberation Serif',serif" font-size="2.8" fill="#4a2210" text-anchor="middle" font-weight="bold">85</text><circle cx="21.65" cy="44.6" r="5.4" fill="#c9a85e"/><circle cx="21.65" cy="44.6" r="4.1" fill="#6a2024" stroke="#8d6a2c" stroke-width="0.5"/><path d="M19.2 42.4H24.1L21.65 47.6Z" fill="#b7835a"/><text x="21.6" y="54" font-family="'Liberation Serif',serif" font-size="2.4" fill="#c77a2c" text-anchor="middle" font-weight="bold" letter-spacing="0.1">PREMIUM WINE</text><text x="21.6" y="57.4" font-family="'Liberation Serif',serif" font-size="2.7" fill="#c77a2c" text-anchor="middle" font-weight="bold" font-style="italic">Finest Selection</text><text x="21.6" y="60.6" font-family="'Liberation Serif',serif" font-size="2.7" fill="#c77a2c" text-anchor="middle" font-weight="bold" font-style="italic">Grand Reserve</text><path d="M9.2 61.3l1.8 0M11.5 57.4l0.7 1.1M4.9 53.8l0.8 -0.7M10.1 53.8l0 1.4M6.3 53.4l1.7 0M7 58.9l-1.4 -0.7M5.3 59l1.4 0M6.4 60.1l-0.2 1M6.3 55.6l-0.8 -1.1M4.8 59l-1.4 -0.1M7.5 55.4l0 1.3M5.6 61.6l0 1.5M9.3 58.8l1.5 0M11.5 53.8l0 1.2M10.1 56.4l0 0.9M5.5 58.8l0 1.4M6.4 55.2l0 2.1M9.2 57.1l0 2M8.8 53.4l0 2.1M7 56.3l0 2M6.4 57.9l0.1 -0.4M6.5 59.2l0 1.7M38.1 53.4l1.5 0M38.4 56l1.6 0M34.1 61.5l0.7 -1.4M38.6 57.7l1.6 0M35.1 61.7l0 1M38.7 54.7l0 1.4M37.9 55.9l0 1.2M33 52.2l0.7 -1.1M33.1 62.2l-0.2 0.2M38.6 54.5l0.8 0M34.9 54.4l0 1.4M34.5 61.3l0 0.8M37.5 61.6l-0.6 -0.4M37 52.8l0 1.5M33 56.8l0 2.1M35 55.6l0 1.2M37.1 60.3l1.3 0.3M34.1 56.4l0 1.3M34.9 61l0.9 0M35.3 55.5l1 0.3M36.2 56.4l0 1.9M37 57.8l1 0.6" stroke="#c77a2c" stroke-width="0.8" fill="none"/></g>
<g transform="translate(173.3 533.3)"><path d="M21.75 2.8C15.4 3.5 10.3 5.7 7.3 9.1V10.7L3.5 12.3V55.9L6.3 57.3V58.9C9.3 61.9 14.4 64.2 21.75 64.8C29.1 64.2 34.2 61.9 37.2 58.9V57.3L40 55.9V12.3L36.2 10.7V9.1C33.2 5.7 28.1 3.5 21.75 2.8Z" fill="#fff" stroke="#fff" stroke-width="5.4" stroke-linejoin="round"/><path d="M21.75 2.8C15.4 3.5 10.3 5.7 7.3 9.1V10.7L3.5 12.3V55.9L6.3 57.3V58.9C9.3 61.9 14.4 64.2 21.75 64.8C29.1 64.2 34.2 61.9 37.2 58.9V57.3L40 55.9V12.3L36.2 10.7V9.1C33.2 5.7 28.1 3.5 21.75 2.8Z" fill="url(#beige)" stroke="#c29a4c" stroke-width="1.4" stroke-linejoin="round"/><path d="M4.2 32.2H39.3V55.5L36.5 56.9V58.6C33.6 61.4 28.9 63.6 21.75 64.2C14.6 63.6 9.9 61.4 7 58.6V56.9L4.2 55.5Z" fill="#f0ebdc"/><path d="M5.6 32.4V56.4M7.2 32.4V56.4M8.8 32.4V56.4M10.4 32.4V61.6M12 32.4V61.6M13.6 32.4V61.6M15.2 32.4V61.6M16.8 32.4V61.6M18.4 32.4V61.6M20 32.4V61.6M21.6 32.4V61.6M23.2 32.4V61.6M24.8 32.4V61.6M26.4 32.4V61.6M28 32.4V61.6M29.6 32.4V61.6M31.2 32.4V61.6M32.8 32.4V61.6M34.4 32.4V61.6M36 32.4V56.4M37.6 32.4V56.4" stroke="#e2dac5" stroke-width="0.55" fill="none"/><path d="M4.2 31.9H39.3" stroke="#8b6a45" stroke-width="0.8"/><path d="M21.5 25.5l-0.8 -0.8M27.6 24.6l0 1.7M16.5 20.5l2.8 0M27.5 26.5l0 1.8M10.8 27.7l0 1.4M36.4 22.8l0.5 1.1M25.6 20.7l-1 -0.4M10.4 19.1l0 0.8M18.2 29.3l-0.3 -1.6M17 19.2l0 2.2M25.3 18.8l1.7 0M18.6 20.1l0 1M27.4 26.7l1.7 0M35.7 23.1l0 1.6M34.3 20.4l1.8 1.5M20.6 24.2l0.9 1.3M11.9 26.2l-1.1 -1.2M32.1 25.7l1.9 0M14.3 21.6l0 1.7M10.9 29.9l0.4 -1.7M24.7 20.4l0 1.1M21.6 19.4l0 1.3M20.7 30.3l2.5 0M28.6 25.2l0 0.9M10.5 25l0 2.8M12.5 20.1l2.1 0M8 22.8l2.6 0M30.2 29.6l2.9 0M20.8 22.1l0 2.6M26.3 26.3l0.6 -0.8M27.7 30.3l0 2.9M19.1 19.9l2.5 0M21.4 21.8l-1.7 0.7M17.5 26.2l1.4 0M12.7 28.9l1.4 0M24.5 28.2l0 1.8M11.1 28.2l0 2.6M23.5 25l1.4 0M20.2 20.6l0 2.1M25.1 22.6l2.5 0M30.1 18.4l1.2 0M31.5 25.9l2.1 0M22 21.1l-1.9 -2M15.4 20.2l0 2.2M18.3 30.8l0 2.9M36.4 25.4l-1.8 1.8M19.9 22.7l-0.4 -1.7M7.2 28.6l0 2.2M9.1 28.8l-0.6 1.2M33.9 21.4l3 0M35.5 25.6l0.8 0M31.8 30.5l1.3 0M10.3 26.5l2.1 0M32.1 18.9l0 1M15.9 19l0 1.3M31.3 25.1l0 1.9M11.1 31l0 1.3M23.9 29.8l1.1 0M25 27.9l0.6 -1M31.7 27.3l-1.3 1.4M21.1 21.2l0 1M33.8 20.2l1.4 0M14.1 22.9l-1.8 -0.5M16.4 24.6l2.7 0M25.8 29.3l1.3 -2M8.4 25.1l0 1.6M22.6 25.2l1.1 -1.2M23.9 24.5l2.4 0M28.3 27.5l0 1M24.3 21.6l0 1M8.7 24.1l0.5 -1M35.5 20.9l1 0M35.7 30.1l-0.5 -0.2M21.6 30.2l1.3 0M34.1 23.8l1.9 1.1M10.2 28.9l3 0M17.9 20.7l0 3M19.6 18.6l2.9 0M12.9 30.3l-1.2 -1.2M10.8 19.7l0 1.3M30.9 24l2.2 0M10.6 28.3l0 1.9M13.1 21.7l0 1.7M19.7 19.7l-0.7 0.7M12.2 18.9l-1.1 -2.1M34.8 23.8l0 2.2M16.7 30.8l0.7 0.8M16.2 30.1l-1.1 -1.9M8.3 25.1l2.6 0M34.1 23.3l1.7 0M34.1 21.2l0 1.2M34.6 20.6l-1.1 -0.5M11.9 30.9l0 1.2M27.6 24.6l0 1.8M33.7 20.3l1.3 0M21.6 23.3l1.5 0M6.8 21l-0.5 -1.6M9.7 27.7l0 2.9M22.4 19.2l0 2.2M36.6 30.1l0 2.1" stroke="#86705a" stroke-width="0.75" fill="none"/><path d="M34.3 22.1l-1 -0.1M33.4 23.7l1.1 0M35.3 29.5l0 1M20.9 25.2l-0.6 0.3M11.7 22.4l0 1.8M23.5 26.1l-0.7 -0.6M20.6 29.1l0 1.3M19.5 26.8l0 1.1M28.5 25.7l0.8 0M14.3 21.4l0 2.4M36.1 28.2l0 1.8M33.4 23.6l0 2.1M17.1 24.8l0 2.3M22.2 21.4l0 2M10.4 26.6l0 1.8M17.1 26.5l0 1.5M26.3 22.9l1.8 1.7M34.4 29.1l2.3 0M18.9 21.1l1.5 -0.9M18 22.6l-1.2 1.1M8.1 24.2l-0.1 -1.3M7.9 26.7l0 1.3M24.7 23.3l0 2.2M28.3 26.1l0 1.7M35.3 25.2l0 2.5M17.2 25.3l0 2.4M27.1 25.3l1.4 0M20.5 25.2l0 2.1M29.2 20.8l0 2.1M17.2 21.8l2.6 0M17.4 25.9l1.8 0M24.5 28.8l1.4 0.7M29.4 27.4l0.7 0.9M8.7 22l1.6 0M13.7 26.4l0 2.2M16.4 28.8l0 2.5M16.6 27.6l0 1.7M17.5 28.3l0.3 -1.4M22.4 22.7l0 2.1M23 29.6l-1.7 1.6" stroke="#7a634c" stroke-width="1" fill="none"/><path d="M20.9 4.8L21.8 7L23.1 5.2M21.8 7V8.4" fill="none" stroke="#5a4632" stroke-width="0.7"/><text x="21.8" y="10.9" font-family="'Liberation Serif',serif" font-size="2.9" fill="#3a3026" text-anchor="middle" font-weight="bold">Wine House</text><text x="21.8" y="13.4" font-family="'Liberation Serif',serif" font-size="2" fill="#5a4632" text-anchor="middle">· · ·</text><text x="21.6" y="45.4" font-family="'Liberation Serif',serif" font-size="13.8" fill="#a07f35" text-anchor="middle" font-style="italic" letter-spacing="-0.1">Wine</text><text x="21.8" y="51.1" font-family="'Liberation Serif',serif" font-size="3.8" fill="#4a3a2a" text-anchor="middle" letter-spacing="0.42">COLLECTION</text><text x="21.8" y="55.6" font-family="'Liberation Serif',serif" font-size="2.4" fill="#4a3a2a" text-anchor="middle" font-style="italic">vol</text><text x="21.8" y="57.8" font-family="'Liberation Serif',serif" font-size="2.2" fill="#4a3a2a" text-anchor="middle">12</text><text x="21.8" y="62.4" font-family="'Liberation Serif',serif" font-size="3.3" fill="#4b3b2a" text-anchor="middle" font-weight="bold" font-style="italic">Premium quality</text></g>
<g transform="translate(232.3 462.6)"><path d="M23.8 2.3C19.5 2.5 16.3 4.6 14.4 7C12.6 9.4 9.5 12 5 13.4C4.1 19 3.6 26 3.6 32C3.6 48 10 63 23.8 67.4C37.6 63 44 48 44 32C44 26 43.5 19 42.6 13.4C38.1 12 35 9.4 33.2 7C31.3 4.6 28.1 2.5 23.8 2.3Z" fill="#fff" stroke="#fff" stroke-width="6.0" stroke-linejoin="round"/><path d="M23.8 2.3C19.5 2.5 16.3 4.6 14.4 7C12.6 9.4 9.5 12 5 13.4C4.1 19 3.6 26 3.6 32C3.6 48 10 63 23.8 67.4C37.6 63 44 48 44 32C44 26 43.5 19 42.6 13.4C38.1 12 35 9.4 33.2 7C31.3 4.6 28.1 2.5 23.8 2.3Z" fill="#581a1c" stroke="#b3853a" stroke-width="1.4" stroke-linejoin="round"/><path d="M22.1 30.2l-0.1 0M26.8 19.4l1.9 0M33.9 16.7l0 1M34.4 34.1l0 2.6M39.8 33l1.1 0M7 29.3l0 1.1M14.8 14.9l1.6 0M35.6 29.1l1.7 0M29.4 27.3l0 2.6M40.9 38.4l-0.7 -1M16.5 16l-0.4 1.3M19.8 41.8l-1.8 -1.1M37.9 27.6l-0.4 -1.6M28.2 36.6l0 1M18 42l-1.4 -0.9M10 15.7l-1.2 0.2M21.9 19.5l-1.3 0.5M10.5 26.2l0 1.3M40 37.3l0 2.4M13.8 25.4l0.5 -1.5M40.6 20.2l0 2.2M17.8 22.6l0 1M26.6 21l1.5 0M22.1 41.8l1.8 0M36.4 19.3l0 2.4M34.7 21.2l0 2.1M38.9 19.7l1.4 0.4M21 17l0 2.5M14.7 34.4l0 2.3M27.1 22.5l0 2.1M8.9 20.6l2.3 0M27.7 22.1l-1.1 -1.8M15.8 26.9l0 1.1M19.2 30.6l0 1.5M37.2 42.4l2 0M26.7 18.1l0 0.8M37.9 34.3l-1.7 0.5M23.1 35.2l0 2.6M9.1 29.8l1.5 0.9M30.8 37l-0.5 0.7M37.6 39.3l2.2 0M36.3 30.6l1.5 0M26.6 31.7l0 2M40.8 39.5l-0.4 0.9M26.5 26.8l-1.5 0.9M7.5 31.4l1.2 0M30.6 28.4l2.5 0M15.3 14.3l0 2M13.5 18.9l0.6 -0.2M37.3 23.5l1.2 0M21.4 37.4l1.4 -0.4M26.6 23.2l0 1.7M35.4 38.6l1.6 -0.8M12.3 27.1l0 1.2M20.8 32.1l1.4 0M35.4 42.5l0.9 0M7.6 39.3l0 2.1M26.2 23l-1.8 -1.3M22.2 14.7l-1 -1.3M8.1 32.2l1.9 0M29.1 37.4l0.7 -1.1M22.9 19.2l0 1.6M31.1 19.2l0 1.4M30.6 29.1l2.2 0M20.1 37l-1.5 1.6M31.4 17.8l1.9 0M37.9 24.9l2.4 0M34 41.4l2 0M13.6 34.9l0.5 0.8M13.9 40.1l1.7 0.1M33.8 23.3l1.3 -0.6M9.4 26.8l2.2 0M23.3 14.8l-1.6 1.1M12.5 23.7l-1.3 -1.3M24.3 35l0.7 1.6M23.5 41.5l0 1.2M24.7 22.4l0.5 0.1M35.6 30.2l0 1.5M35.7 40.1l0 2.3M39.9 29.2l1.2 0M25 28.6l0.8 0M39.9 29l2.2 0M25.9 28.2l0.9 0M25.1 26l1.5 -0.8M22.8 17.7l2.3 0M37.6 27.8l0 1.1M27.8 40.8l0 2.2M7.3 19.6l0 2M17.6 24.3l1 0M31.7 17.6l1.3 0M13.3 29.4l1.5 0M20.8 29.4l0 1.2M28.3 32.5l2.3 0M27.6 38.8l0 2.1M34.5 40.2l0 1.4M38.3 20.3l1.4 -1.3M14.8 35.1l0 1M35.2 26.2l-1.4 -0.4M30.1 14.5l0 2M37.9 42.1l0 1.7" stroke="#340e10" stroke-width="1.2" fill="none" opacity="0.8"/><path d="M4.6 43.9H43C42.4 47.2 41.4 50.3 40 53.1H7.6C6.2 50.3 5.2 47.2 4.6 43.9Z" fill="url(#g1)"/><text x="23.8" y="50" font-family="'Liberation Serif',serif" font-size="4.2" fill="#3b2412" text-anchor="middle" font-weight="bold" letter-spacing="0.2">COLLECTION</text><path d="M21.9 6H25.7L24.3 8.2V9.4H23.3V8.2Z" fill="#b8822f"/><text x="23.8" y="12.2" font-family="'Liberation Serif',serif" font-size="2.6" fill="#c08a3a" text-anchor="middle" font-weight="bold">Wine House</text><text x="23.8" y="14.2" font-family="'Liberation Serif',serif" font-size="1.8" fill="#c08a3a" text-anchor="middle">· · · ·</text><text x="23.8" y="27.3" font-family="'Liberation Serif',serif" font-size="9.3" fill="#dccb98" text-anchor="middle" font-weight="bold" letter-spacing="0.45">RED</text><text x="23.8" y="37" font-family="'Liberation Serif',serif" font-size="9.3" fill="#dccb98" text-anchor="middle" font-weight="bold" letter-spacing="0.45">WINE</text><text x="23.8" y="57" font-family="'Liberation Serif',serif" font-size="3.1" fill="#c77d2d" text-anchor="middle" font-weight="bold" font-style="italic">Premium Quality</text><text x="23.8" y="59.8" font-family="'Liberation Serif',serif" font-size="2.2" fill="#c77d2d" text-anchor="middle">• • •</text><text x="23.8" y="62.4" font-family="'Liberation Serif',serif" font-size="2.1" fill="#c77d2d" text-anchor="middle">2019</text></g>
<g transform="translate(296.8 462.5)"><path d="M3.3 22.8C3.3 10.6 11.4 2.8 22.25 2.8C33.1 2.8 41.2 10.6 41.2 22.8V46C41.2 58.2 33.1 66 22.25 66C11.4 66 3.3 58.2 3.3 46Z" fill="#fff" stroke="#fff" stroke-width="6.6" stroke-linejoin="round"/><path d="M3.3 22.8C3.3 10.6 11.4 2.8 22.25 2.8C33.1 2.8 41.2 10.6 41.2 22.8V46C41.2 58.2 33.1 66 22.25 66C11.4 66 3.3 58.2 3.3 46Z" fill="#ece4c8" stroke="#b08335" stroke-width="2.1" stroke-linejoin="round"/><path d="M11.1 39.2l1.9 0M12.8 41.3l0.1 0M13.5 25.1l0 2.2M7.9 41.4l0 1.4M7 45.5l1.7 0.5M6.7 31.8l1.1 0M37.4 32.6l0 2.8M9.8 44.1l2.1 0M17.1 35l0 0.9M34.5 29.8l-1.3 2.1M35.5 40.5l0.4 1M9.7 34.8l-1.3 1.9M35.2 33.4l0 1.9M18.5 45.5l0 0.9M8.7 39.8l0 0M24 40.4l0 2.3M24.2 37.8l0 1.2M17.2 44.1l0 2.2M15.8 27.1l0 2.8M31.6 32.7l2.4 0M35.6 44.7l3.2 0M37.7 37.2l0 -0.6M13.9 43l0 1M32.5 40.9l2.8 0M7.3 30.3l0 1.8M11.3 26.4l0 3M38.4 40.4l1.4 0M37.6 35.8l-2.1 -1.3M33.6 41.4l0.5 -0.3M25 42.5l0 2.1M14.8 40.8l0 2.4M37.5 25.5l2.3 0M34 37l0 1.8M37.6 43.7l0 1M8.7 25.5l1.1 0M34.6 38.5l0 2.1M16.4 35.2l0 1.2M11.7 32.8l0.2 -2M29.3 43l1.3 -2.2M21.1 26.3l-1.5 0.9M14 39.4l0 0.9M18.6 31.4l-0.9 0M23.9 44.5l0 2.2M22.6 40.1l-0.9 0.9M23.2 36.5l0 2.8M38.2 32.3l0 3.2M9.2 26.6l0 2.8M31 34.2l0.8 0M27.1 34.1l1.7 0M19 29.6l0 1.8M13.9 39.5l1 -0.2M13.5 32.9l2.3 0M37.8 26.8l2 0M29.6 43.3l0.6 1.2M27.9 42.7l2.4 0M13.8 43.9l0 2.3M33.1 44.9l-2.2 -0.8M16 33.1l0 2.1M8.3 31.2l1.1 -0.2M9.2 44.7l-1.3 -0.7M27 39l0 3.1M16.4 30.2l-1.6 0.8M12.3 37.3l0 1.7M37 34.6l2.3 0M15 28.6l0 1.5M11.9 44.8l0 2.7M36.8 39.5l0 2M6.9 37.5l-1.2 -2.2M23.8 26.9l0 1.9M35.5 32.6l0 2.7M33.1 35.9l0 1.3M19.1 36.4l0 2.7M33.8 44.1l-2.2 0.4M8.3 43.5l1.2 -1.4M7.6 41.8l2.3 0M21.3 41.5l0 1.4M17.4 31.1l2.9 0M8 26.4l2.4 0M11.9 30.6l0 0.9M22.1 39l1.2 0M9.1 44.2l1.8 0M28.7 40l1 0M33.2 29.4l0 1.6M23.4 37.9l0 2.5M22.1 28.3l1.4 1.8M28.3 29.5l1.8 0.1M35.9 45l0 3.1M36.9 41.4l0 1.6M26.1 37.5l0.7 -1.5M36.7 36l-1.3 2.2M24.1 41l1.7 -0.6M8.4 33.4l0 2.1M32.8 32.5l0 0.9M19.7 37l0 2.4M12.6 27.2l0.1 1.8M22.8 27.5l0 1.8M27 40.9l0.7 -1.1M20 32.8l1.4 0M23.6 34.5l0 2.8M25.2 41.5l1 2.2M18.2 33.1l0 2.4M25 36.9l-1.4 -1.2M30.1 41.7l0.9 0M18 42l1.9 0M18.6 37.9l2.5 0M34.5 40.5l0 1.4M31.7 41.3l-1.3 1.6M35.3 26.6l0 2.3M10.5 42.1l0 2.4M15.5 29.5l0 2M29.4 29.5l1.6 0M27.3 32.6l0 1.1M7.5 39.3l1.1 0M35 38.5l0 2.5M25.5 34.1l3.1 0M18.1 38.1l1.7 0M17.2 40.6l1.9 0M22.8 29.6l-2.2 0.6M20.8 29.6l2.2 0M8.5 35.1l0 2.7M16.5 31.8l0 0.9M11.8 28.1l2.8 0M13 27.3l1.1 0M19.1 40.7l0 2.5M23.6 26.8l0 2.2M8.8 29.2l2.8 0M23 38.7l0 1.5M16.2 43.8l0 2.7M6.7 35.3l1.2 0.4M11.7 44.1l0 3.1M31.5 39.8l1.2 0M17 38.7l1.7 0M32.4 26.1l0 1M16.4 41.3l-1.6 -0.9M9.3 38.6l1.4 0M18.1 42.8l2.5 0M26.6 34.8l1.7 0M12.2 35.2l0 1.6M11.8 43.8l1.3 0M6.7 29.4l-0.7 0.7M13.3 38.4l2.6 0M23.3 32.7l0 2.2M33.4 39.2l1.6 0M35.4 42.4l0 2.4M31.4 38.9l1.7 -1.1M38.9 31.7l0 3.1M11.2 33.1l1.5 0M14.5 41.4l2.6 0M32 43l1.4 2.1M22.3 39.5l3.1 0" stroke="#151515" stroke-width="0.8" fill="none"/><path d="M37.2 27l0 2.8M12 26.8l1.5 0M35 27.9l-0.7 0.4M36.4 32.7l0.8 -1.8M34.7 31.7l0 1.2M33.7 31.6l1.1 1.8M24.5 32.8l1.3 0M37.2 28.8l1.8 0.6M10.6 34.2l1.2 0M7.6 31.1l0 2.7M22.5 30.9l2.1 0M35.9 28.7l0 2M15.7 31.8l1.7 0M27.9 31l0 2.8M17.6 30l2.7 0M37 30.9l1 0M35.2 27.3l1.5 0M16.7 29.3l0 0.9M23.5 33.9l1.2 0M28.6 26l2.5 0M36 30.3l0 0.1M25.1 35.9l-0.1 0.9M27 29.2l1.3 0.4M36.7 25.7l2.1 0M17.1 27.3l1.7 0M14.8 25.9l-0.6 -1.5M13.1 28.2l-1.3 -0.9M9.2 30.4l0 1.5M30 35.2l-1.8 -0.5M33.7 25.8l0 1.8M18.5 33.4l-0.1 -1M13.5 28.3l0 2.1M11.1 34.8l0.9 0M22.3 31.8l0 1.8M7 33.5l0 2.1M38.1 34.4l0 1.9M10.6 29.1l1.2 -1.9M18.4 32.2l0 2.4M35.1 31.3l0 2.5M22.7 27.5l0 1.1M33.3 30.9l2.4 0M37.7 27.5l2.5 0M30.8 29.6l1.2 0M11.3 26l0 1.3M22.9 35.7l0 1.9M34.2 31.8l2.3 0M6.7 35.5l2.4 0M32.9 26.5l0 1.2M22.5 35.4l-0.3 0.5M30.1 29l1.7 0.9M35.4 33.9l1.4 0M15.2 28l0 2.7M15.7 25.8l0 1M20.5 29l0 1.8M19.5 29.2l-0.8 0.2M34.6 35.6l0 0.9M37 30.9l0 1.1M13.8 28.8l0 0.9M38.4 34.1l0 1.8M32.1 30.8l0 1.5M18.4 35.1l1.7 0M26.6 26l2.4 0M27.9 29.3l0 0.8M8.7 27.1l2.4 0M13.1 30.5l2.1 0M6.7 35.2l1.4 0M13.8 32.7l-0.6 -0.4M24.2 27.3l2.6 0M24.1 34.1l0 2.5M31.5 27.9l2.2 0" stroke="#151515" stroke-width="1.1" fill="none"/><rect x="2.4" y="46.7" width="39.7" height="7" fill="url(#g1)"/><text x="22.2" y="51.7" font-family="'Liberation Serif',serif" font-size="4.1" fill="#2e1c0c" text-anchor="middle" font-weight="bold" letter-spacing="0.15">COLLECTION</text><text x="22.2" y="9.8" font-family="'Liberation Serif',serif" font-size="3.1" fill="#1a1a1a" text-anchor="middle" font-weight="bold" font-style="italic" transform="rotate(-5 22 9)">Premium Quality</text><text x="22.2" y="21.1" font-family="'Liberation Serif',serif" font-size="9.8" fill="#111" text-anchor="middle" font-weight="bold" letter-spacing="-0.1">Wine</text><text x="22.2" y="59.4" font-family="'Liberation Serif',serif" font-size="2.9" fill="#1a1a1a" text-anchor="middle" font-weight="bold" font-style="italic">Vintage of Wine</text><text x="22.2" y="63.2" font-family="'Liberation Serif',serif" font-size="2.6" fill="#1a1a1a" text-anchor="middle" font-weight="bold">12</text></g>
<g transform="translate(358.8 462.2)"><path d="M22.2 2.6C15.4 3.6 9.4 7.4 6.4 12.4V13.8H3V61.2L6.6 63.4L7.6 66.4H36.8L37.8 63.4L41.4 61.2V13.8H38V12.4C35 7.4 29 3.6 22.2 2.6Z" fill="#fff" stroke="#fff" stroke-width="5.2" stroke-linejoin="round"/><path d="M22.2 2.6C15.4 3.6 9.4 7.4 6.4 12.4V13.8H3V61.2L6.6 63.4L7.6 66.4H36.8L37.8 63.4L41.4 61.2V13.8H38V12.4C35 7.4 29 3.6 22.2 2.6Z" fill="#260c11" stroke="#d6aa2c" stroke-width="1.6" stroke-linejoin="round"/><path d="M16.3 30.9l0 2.2M19.3 30.9l0 2.3M19.5 52.9l1.1 0M28.9 42.7l2.8 0M18.2 27.7l-0.4 -1.2M23.9 39.8l-1.1 -1.1M30 46.2l1.3 -0.6M20.9 56.3l-1.8 0.9M36.8 49.8l0 2.4M33.5 33.8l1.2 0M17 38.8l0 1.6M31.5 56.3l1.9 1.9M35 37.7l0 2M29.1 50.6l0 1.2M38.1 48l1 0M25.6 58.9l2.8 0M20.7 42.9l-0.2 1.1M29.5 31.1l0 2.8M18.9 33.8l0 2.2M36.5 43.6l2.4 0M22.7 40l2.1 0M16.9 30.9l0 2.3M32.6 61.1l-1 1M39.6 39.2l0 1.6M22.8 33.2l0 1M36.8 28.7l1.2 0M20.6 55.7l0 1.2M26.9 51.3l2.5 0M25.6 45.3l-0.2 0.9M27.2 31.7l0 2.4M33.9 60l2 0M20 56.9l0 1.6M19.4 40.3l0 1.7M33.1 46l0 2.4M33.6 56l0 2M37.5 36.1l0 2.4M24.7 41l-0.5 -1.2M21.1 39.1l1.5 0M34.5 29.3l0 2M27.5 44.5l-0.9 -1.2M16.8 43.9l0 1.7M16.1 27l0 2.3M23.2 58.9l1.6 0M34.7 35.2l2.5 0M29 38.2l0 1.9M20.5 40.1l2.7 0M32.2 45.2l-0.8 -0.4M32.3 46.4l0 1.6M35.8 35.5l-1.8 1.8M32.4 38.3l1.2 -1.7M22 44.2l-1.4 -1.8M23.5 28.6l1.9 0M26.6 31.9l0 2.4M26.6 43.8l2.2 0M37.6 55.9l-0.6 -1.3M18.2 57.1l0 1.9M37.8 38.3l0 1.6M38.7 50.9l-1.8 0.9M26.8 41.1l0.9 1.6M33.7 58.9l1.9 0M34.8 42.9l0 2M36.9 57.5l0 1.6M21.5 38.9l-0.3 -0.7M22.5 42.4l1.5 0M20.5 34.9l0 2.6M20.1 53.4l0 2.4M22.4 54.3l1 0M18.3 55l1.8 0M24.5 51.2l0.9 0M30.4 38l0.2 1.1M18.9 51.7l2.5 0M37.2 46.3l2.3 0M22.3 46.1l0.4 0.2M36.5 61.1l0 0.9M30.7 32.2l-0.1 0.1M35.6 57.4l0 1.7M20.3 43.1l0 2.6M24.5 40.6l1.3 -0.6M28 50.2l0 1.1M36.6 32.7l0.9 0.4M24.3 57l-1.7 1.6M31.3 37.1l0 1M35.5 56.7l0 1.2M17.8 41.5l0 0.9M23.1 55.7l0 1.6M28.3 32.7l0 0.9M19.5 61.1l0.8 1.6M23.8 35.7l0.4 1.7M24.6 41.5l1.5 -1.3M22.3 27.5l2.6 0M29.6 32.2l2.1 0M18.5 59l1.8 0M24.3 32.6l1.5 0M21.6 49.6l2.7 0M39.2 43.3l-0.5 -0.3M29.6 61.3l0 1.7M24.1 55.2l-0.1 -1.6M30.3 47.6l2.4 0M27.1 46.2l-1.9 -1M32.5 61.2l-0.9 1.9M22.7 42.8l0 2M25.4 51l-1.5 0.6M30.4 36.6l0 2.7M32.7 48.9l0 2.6M25.6 43.3l1.7 0M38.9 43.4l2.3 0M38.4 33l0 2.7M30.5 40l-1.5 -1M17.7 50.5l1.4 0M26.5 35.9l1 -0.5" stroke="#6d2a30" stroke-width="1" fill="none" opacity="0.9"/><path d="M6.3 27.4l0 2.6M13.4 35.5l0 1.8M19.3 32.4l1.5 -0.5M5 36.1l0 0.8M17.4 37.5l1.8 -1.2M6.4 25.9l-1.5 -1.3M5.3 24.8l0 1.5M7.8 29l-1.3 1.2M17.6 33.1l2.3 0M15 27.7l0 1.3M11.8 39.8l0.9 0M13.1 37l2.2 0M6.5 25l0.9 0M10.1 30.2l0 0.9M5.1 39.2l2.7 0M13.4 39.3l0.5 0.1M13.6 27.6l0 2.2M8.3 37.6l2 0M19 34.3l0 1.3M5 24.4l0.4 1.8M18.3 29.1l1.7 -0.2M6.4 29.1l0 1.5M6.4 35.4l-1.1 1.1M14.9 31.7l-0.5 1.3M5.6 39.4l0 0.8M20 35.5l2.3 0" stroke="#6d2a30" stroke-width="0.9" fill="none" opacity="0.8"/><circle cx="22.2" cy="10" r="4.7" fill="#d2a62a"/><path d="M19.9 7.8H24.5C24.5 10 23.6 10.9 22.6 11.2V12.6H23.6V13.2H20.8V12.6H21.8V11.2C20.8 10.9 19.9 10 19.9 7.8Z" fill="#260c11"/><text x="22.2" y="22.9" font-family="'Liberation Sans',sans-serif" font-size="3.9" fill="#e5dcc6" text-anchor="middle" font-weight="bold" letter-spacing="0.55">PRODUCED</text><text x="22.2" y="27.8" font-family="'Liberation Sans',sans-serif" font-size="3.9" fill="#e5dcc6" text-anchor="middle" font-weight="bold" letter-spacing="0.6">NAME</text><text x="22.4" y="44.6" font-family="'Liberation Serif',serif" font-size="14.2" fill="#d8bf3c" text-anchor="middle" font-weight="bold" font-style="italic" letter-spacing="-0.25">Wine</text><text x="22.2" y="53" font-family="'Liberation Serif',serif" font-size="3.4" fill="#d9cdbd" text-anchor="middle" font-weight="bold" font-style="italic">Alcohol</text><text x="22.2" y="60.7" font-family="'Liberation Serif',serif" font-size="2.8" fill="#d2a62a" text-anchor="middle" font-weight="bold">Premium quality</text></g>
<g transform="translate(233 533)"><path d="M3.2 23C3.2 10.4 12.4 2.9 23.35 2.9C34.3 2.9 43.5 10.4 43.5 23V65.2H3.2Z" fill="#fff" stroke="#fff" stroke-width="6.2" stroke-linejoin="round"/><path d="M3.2 23C3.2 10.4 12.4 2.9 23.35 2.9C34.3 2.9 43.5 10.4 43.5 23V65.2H3.2Z" fill="#1f0b0d" stroke="url(#g4)" stroke-width="2.1" stroke-linejoin="round"/><g fill="none" stroke="#c79a2a" stroke-width="0.65"><circle cx="13.9" cy="22.9" r="1.5"/><circle cx="17.8" cy="30.7" r="1.5"/><circle cx="17.3" cy="25.5" r="1.5"/><circle cx="20.8" cy="28.8" r="1.5"/><circle cx="21.7" cy="30.2" r="1.5"/><circle cx="22.9" cy="26.5" r="1.5"/><circle cx="19.3" cy="29.6" r="1.5"/><circle cx="20.7" cy="31.4" r="1.5"/><circle cx="8.9" cy="30.4" r="1.5"/><circle cx="18.6" cy="29.3" r="1.5"/><circle cx="23" cy="24.1" r="1.5"/><circle cx="9.3" cy="30.4" r="1.5"/><circle cx="14.4" cy="30.3" r="1.5"/><circle cx="16.1" cy="25.7" r="1.5"/><circle cx="15.4" cy="31.4" r="1.5"/><circle cx="14.8" cy="31.7" r="1.5"/><circle cx="17" cy="34" r="1.5"/><circle cx="19.3" cy="24.5" r="1.5"/><circle cx="23.6" cy="31.8" r="1.5"/><circle cx="8.6" cy="30.2" r="1.5"/><circle cx="19.3" cy="31.7" r="1.5"/><circle cx="18.4" cy="26.1" r="1.5"/><circle cx="11.2" cy="26.4" r="1.5"/><circle cx="20.8" cy="30.6" r="1.5"/><circle cx="14.5" cy="26.7" r="1.5"/><circle cx="10.6" cy="30.7" r="1.5"/><circle cx="11.9" cy="34.3" r="1.5"/><circle cx="12.9" cy="34.7" r="1.5"/><circle cx="13.9" cy="34" r="1.5"/><circle cx="21.1" cy="31.4" r="1.5"/><circle cx="11.1" cy="28.6" r="1.5"/><circle cx="9.5" cy="24.6" r="1.5"/><circle cx="11" cy="30.5" r="1.5"/><circle cx="18.2" cy="31.1" r="1.5"/><circle cx="17.3" cy="27.5" r="1.5"/><circle cx="18" cy="35" r="1.5"/><circle cx="18.9" cy="27.7" r="1.5"/><circle cx="19.2" cy="22" r="1.5"/><circle cx="36.9" cy="32.9" r="1.3"/><circle cx="27.1" cy="28.4" r="1.3"/><circle cx="34.9" cy="25.8" r="1.3"/><circle cx="36.2" cy="35.1" r="1.3"/><circle cx="28.3" cy="34" r="1.3"/><circle cx="35.2" cy="33.6" r="1.3"/><circle cx="34.8" cy="25" r="1.3"/><circle cx="38" cy="31.3" r="1.3"/><circle cx="29.6" cy="28.2" r="1.3"/><circle cx="34.9" cy="23.8" r="1.3"/><circle cx="28.7" cy="27.8" r="1.3"/><circle cx="27.1" cy="28.1" r="1.3"/><circle cx="36.7" cy="31.6" r="1.3"/><circle cx="28.9" cy="33.2" r="1.3"/><circle cx="30.8" cy="26" r="1.3"/><circle cx="28.6" cy="34.2" r="1.3"/><circle cx="29.3" cy="34.3" r="1.3"/><circle cx="35.8" cy="28.7" r="1.3"/><circle cx="37.5" cy="31.9" r="1.3"/><circle cx="33.9" cy="29.6" r="1.3"/><circle cx="36.3" cy="28" r="1.3"/><circle cx="34.5" cy="31.8" r="1.3"/><circle cx="33.3" cy="32.4" r="1.3"/><circle cx="38" cy="34" r="1.3"/><path d="M22 22C26 18 30 17 33.5 14.6M30 17L33 24M27 19L24 27M31 20C35 21 38 23 40 27M33.5 14.6L35 20"/></g><rect x="4.2" y="37.2" width="38.3" height="14.4" fill="url(#g2)"/><text x="23" y="48.4" font-family="'Liberation Serif',serif" font-size="11.8" fill="#33200a" text-anchor="middle" font-style="italic" letter-spacing="-0.2">Wine</text><path d="M22.6 5.2C23.9 5.6 23.9 7 22.9 7.6C23.9 8.2 23.7 9.2 23.2 9.6" fill="none" stroke="#c79a2a" stroke-width="0.8"/><text x="23.4" y="11.8" font-family="'Liberation Serif',serif" font-size="2.9" fill="#c79a2a" text-anchor="middle" font-weight="bold">Wine Bar</text><text x="23.4" y="56.5" font-family="'Liberation Serif',serif" font-size="3.3" fill="#b8922a" text-anchor="middle" font-weight="bold" letter-spacing="0.45">COLLECTION</text><text x="23.4" y="61.4" font-family="'Liberation Serif',serif" font-size="3.3" fill="#d8c9a0" text-anchor="middle" font-style="italic">Vintage</text></g>
<g transform="translate(297.1 533)"><path d="M21.65 4C15 4.8 9.4 7.6 6.2 12V13H2.6V64.9H40.7V13H37.1V12C33.9 7.6 28.3 4.8 21.65 4Z" fill="#fff" stroke="#fff" stroke-width="5.0" stroke-linejoin="round"/><path d="M21.65 4C15 4.8 9.4 7.6 6.2 12V13H2.6V64.9H40.7V13H37.1V12C33.9 7.6 28.3 4.8 21.65 4Z" fill="#5c1b1c" stroke="#c6a05a" stroke-width="1.1" stroke-linejoin="round"/><path d="M14.2 16.8l0 2.3M13.8 17.7l-0.4 1.7M28.5 17.6l1.9 0M17.6 24.9l2.6 0M14.6 16.4l-1.2 0.4M17.8 21.5l1 -1.1M29.4 15.8l-0.1 1.5M31.3 22l1.1 0M19.2 11.9l-1.4 1.5M23.2 11.5l0 1.6M10.5 21.1l2.6 0M31.4 21.5l1.6 0.5M22.9 17.2l1.5 1.2M19.4 10l1.8 0M23.5 22.7l0 2.1M24.2 12.1l-1.6 -0.1M22.7 18.4l0.2 1.4M15.7 16.5l0 2M19.4 21.5l0 1.6M26.4 19.7l0.2 0M27.7 19.6l-0.1 -1.8M29.8 13.2l1.8 1M18.8 22.7l0 1.4M23.8 19.3l1.8 0M19 20.8l0 1.9M32.5 12.1l0.9 0M29.5 14l0 1.3M34.4 21l0 2.5M9.1 16.5l2.2 0M11.2 22.1l0 2.1M34.3 18.3l0 2M19.8 20.6l-1.4 0.2M25.9 23.8l1.9 0M29.6 11.2l0.3 0.5M11.5 17.2l1.2 0M34.7 22.5l0.9 0M21.9 17.9l0.6 0.4M22.1 24.6l-0.5 1.1M34.9 16.6l0 0.9M30.6 11.8l0 1.1M20.9 21.9l0.8 0M15.8 10l2.2 0M15.9 10.8l0 1.7M29.4 19.8l1.5 0M7.9 16.9l2 0M7.5 16.6l0 1.8M19.8 14l0 2.5M21.1 10.3l2.2 0M21.4 23.2l0.7 -1.7M18.8 17l0 1.7M26.6 20.9l0.9 -0.7M25 16.8l-1.4 -1.2M28.1 20.5l0 2.2M29.8 19.2l0.9 0M13.8 21.2l-1.2 -1.7M17.3 24l0 2.5M30.1 22.4l0.6 -1.1M19.7 15.1l1.4 0M13.5 12.2l0 2.1M21 8.7l0 1.1M27.4 22.3l-0.8 -0.3M13.8 19.5l0 2.2M20.8 17.6l1.5 -0.8M28.4 13.1l0 2.3M12.6 13.2l1.3 -0.4M28 15.1l0 1.8M12.1 12l2 0M13.5 12.2l1.3 0M23.5 19.7l0 2.4M21.4 13.5l1.8 -0.2M15.1 12.2l1.1 1.4M29 14.1l0 2M17.9 17.5l1.2 0M7.6 20.8l1 -0.6M16.8 18.9l0 2.1M22.3 17.3l-1.4 -1.1M22.4 22.6l1.4 -1.1M16.3 12.7l0 1.1M11.5 22l2.5 0M25.4 21l0.2 -1M19 15.9l0 1.8M29.7 14l0 1M17.7 11.9l2.5 0M13.8 14.4l1.1 0M32.6 24.7l0 1.5M23.4 21.9l-1.1 1.6M24.6 20.7l0 0.9M21.1 24.7l0 2.6M20.4 24.1l0 1.8M12.1 20.8l1.9 0M18.4 22.9l-1.7 0.2M13.4 23.9l1.1 0.6M33.4 12.7l0 2.4M26.2 13.4l0.6 -1.8M34.6 20.7l-1.5 -1.8M9.3 21.1l0 1.3M16.6 15.3l0 1M22.2 9.7l1.3 0M28.5 9.8l1.9 0M33.7 18.6l1.3 -1.4M8.5 21.9l0 1.7M16.4 11.2l0 1.6M31.2 12.3l0 1.9M32.4 15.4l0 2.4M10.3 18.3l1.7 0M19.1 10.5l1.4 0.4M16 20.1l0 1M24.7 18l-0.3 -1.4M23.7 9.5l0 2.6M18 14.5l-1.5 1M28.5 23.6l0 1.6M18 8.8l0 1.1M9.1 20.1l-0.4 1.2M31.5 22.3l0 1.4M26.6 17.6l0 0.8M15.7 15.5l0 1.3M24.6 15.5l0.4 -0.3M19.7 22.5l1.8 -0.2M13 16.8l1.6 0M9.9 16.8l0 0.9" stroke="#b06a28" stroke-width="0.8" fill="none"/><path d="M35.4 14.6l-0.1 1.6M19.1 24.5l0 2.6M19.3 16.1l0 1.9M8.5 18.4l0 0.9M12.4 16.6l0 2.2M19.4 23.8l1.4 1.6M23.9 21.7l0.2 -1.3M22.3 20l0 1M12.8 22l0.6 -0.3M8.3 14l1.8 0M20.5 16l0 1.1M11.2 20.8l0 1.8M19.7 20.2l1 -1.3M34.9 23.7l-0.2 1.6M30.7 16.7l2.3 0M29 24.3l2 0M9.7 21.6l0 2.1M33.2 18.2l0 0.9M22.2 15.8l0.4 0M26.6 15.7l0.9 0M23.1 23l0 2M35.8 17.7l0 1.3M31.2 14.9l-0.9 0.9M32.8 23.7l0 1.8M16.5 24l0 1.1M19.1 15l0 2.1M16.8 16.1l-0.9 1.1M27 20.3l1.8 0M31.5 21.9l0 2M22 24.5l0 1.6M35.1 14.8l1.5 0.4M9.1 22.8l0 1.7M30.8 17.6l0 1M17.3 15.2l2.3 0M9.1 20l1 -0.9M22.6 21.8l2.6 0M33.4 25l0 0.8M24.3 20.6l0 1.2M29.9 23.1l0 1M28 18.8l0 2.5M16.9 14.9l1.5 0M25.9 22.7l0 1.6M33.2 19.5l1.5 1.1M26.1 15.3l-0.7 -0.7M21.9 20.1l0.1 1.5M29.9 21.4l0 1.9M21.8 22.6l0 2.2M27.8 16l-0.1 -0.2M17.1 18.4l1.5 -0.1M22.7 19.3l0 2.4M19.5 14.3l0 1.3M29.9 16l0 2.4M16.2 24.6l0 1M13.5 18.5l1.4 0M35 24.8l2.6 0M32.1 25.1l1 0M23.7 14.6l2.6 0M18.8 21.8l0.8 -0.4M22.1 15.4l0.5 -0.6M19.8 23.7l0 1.2" stroke="#b87230" stroke-width="1" fill="none"/><text x="21.6" y="32.4" font-family="'Liberation Serif',serif" font-size="4.4" fill="#d8c070" text-anchor="middle" font-weight="bold" letter-spacing="0.5">BORDEAUX</text><text x="21.6" y="36" font-family="'Liberation Serif',serif" font-size="2.7" fill="#d8c070" text-anchor="middle" font-weight="bold" letter-spacing="0.1">WINE CELLAR</text><path d="M4.5 41.4H38.8L36.4 44.8L38.8 48.2H4.5L6.9 44.8Z" fill="url(#g3)"/><text x="11.2" y="45.9" font-family="'Liberation Serif',serif" font-size="2.8" fill="#4a2210" text-anchor="middle" font-weight="bold">19</text><text x="32.1" y="45.9" font-family="'Liberation Serif',serif" font-size="2.8" fill="#4a2210" text-anchor="middle" font-weight="bold">85</text><circle cx="21.65" cy="44.6" r="5.4" fill="#c9a85e"/><circle cx="21.65" cy="44.6" r="4.1" fill="#6a2024" stroke="#8d6a2c" stroke-width="0.5"/><path d="M19.2 42.4H24.1L21.65 47.6Z" fill="#b7835a"/><text x="21.6" y="54" font-family="'Liberation Serif',serif" font-size="2.4" fill="#c77a2c" text-anchor="middle" font-weight="bold" letter-spacing="0.1">PREMIUM WINE</text><text x="21.6" y="57.4" font-family="'Liberation Serif',serif" font-size="2.7" fill="#c77a2c" text-anchor="middle" font-weight="bold" font-style="italic">Finest Selection</text><text x="21.6" y="60.6" font-family="'Liberation Serif',serif" font-size="2.7" fill="#c77a2c" text-anchor="middle" font-weight="bold" font-style="italic">Grand Reserve</text><path d="M9.2 61.3l1.8 0M11.5 57.4l0.7 1.1M4.9 53.8l0.8 -0.7M10.1 53.8l0 1.4M6.3 53.4l1.7 0M7 58.9l-1.4 -0.7M5.3 59l1.4 0M6.4 60.1l-0.2 1M6.3 55.6l-0.8 -1.1M4.8 59l-1.4 -0.1M7.5 55.4l0 1.3M5.6 61.6l0 1.5M9.3 58.8l1.5 0M11.5 53.8l0 1.2M10.1 56.4l0 0.9M5.5 58.8l0 1.4M6.4 55.2l0 2.1M9.2 57.1l0 2M8.8 53.4l0 2.1M7 56.3l0 2M6.4 57.9l0.1 -0.4M6.5 59.2l0 1.7M38.1 53.4l1.5 0M38.4 56l1.6 0M34.1 61.5l0.7 -1.4M38.6 57.7l1.6 0M35.1 61.7l0 1M38.7 54.7l0 1.4M37.9 55.9l0 1.2M33 52.2l0.7 -1.1M33.1 62.2l-0.2 0.2M38.6 54.5l0.8 0M34.9 54.4l0 1.4M34.5 61.3l0 0.8M37.5 61.6l-0.6 -0.4M37 52.8l0 1.5M33 56.8l0 2.1M35 55.6l0 1.2M37.1 60.3l1.3 0.3M34.1 56.4l0 1.3M34.9 61l0.9 0M35.3 55.5l1 0.3M36.2 56.4l0 1.9M37 57.8l1 0.6" stroke="#c77a2c" stroke-width="0.8" fill="none"/></g>
<g transform="translate(359.3 533.3)"><path d="M21.75 2.8C15.4 3.5 10.3 5.7 7.3 9.1V10.7L3.5 12.3V55.9L6.3 57.3V58.9C9.3 61.9 14.4 64.2 21.75 64.8C29.1 64.2 34.2 61.9 37.2 58.9V57.3L40 55.9V12.3L36.2 10.7V9.1C33.2 5.7 28.1 3.5 21.75 2.8Z" fill="#fff" stroke="#fff" stroke-width="5.4" stroke-linejoin="round"/><path d="M21.75 2.8C15.4 3.5 10.3 5.7 7.3 9.1V10.7L3.5 12.3V55.9L6.3 57.3V58.9C9.3 61.9 14.4 64.2 21.75 64.8C29.1 64.2 34.2 61.9 37.2 58.9V57.3L40 55.9V12.3L36.2 10.7V9.1C33.2 5.7 28.1 3.5 21.75 2.8Z" fill="url(#beige)" stroke="#c29a4c" stroke-width="1.4" stroke-linejoin="round"/><path d="M4.2 32.2H39.3V55.5L36.5 56.9V58.6C33.6 61.4 28.9 63.6 21.75 64.2C14.6 63.6 9.9 61.4 7 58.6V56.9L4.2 55.5Z" fill="#f0ebdc"/><path d="M5.6 32.4V56.4M7.2 32.4V56.4M8.8 32.4V56.4M10.4 32.4V61.6M12 32.4V61.6M13.6 32.4V61.6M15.2 32.4V61.6M16.8 32.4V61.6M18.4 32.4V61.6M20 32.4V61.6M21.6 32.4V61.6M23.2 32.4V61.6M24.8 32.4V61.6M26.4 32.4V61.6M28 32.4V61.6M29.6 32.4V61.6M31.2 32.4V61.6M32.8 32.4V61.6M34.4 32.4V61.6M36 32.4V56.4M37.6 32.4V56.4" stroke="#e2dac5" stroke-width="0.55" fill="none"/><path d="M4.2 31.9H39.3" stroke="#8b6a45" stroke-width="0.8"/><path d="M21.5 25.5l-0.8 -0.8M27.6 24.6l0 1.7M16.5 20.5l2.8 0M27.5 26.5l0 1.8M10.8 27.7l0 1.4M36.4 22.8l0.5 1.1M25.6 20.7l-1 -0.4M10.4 19.1l0 0.8M18.2 29.3l-0.3 -1.6M17 19.2l0 2.2M25.3 18.8l1.7 0M18.6 20.1l0 1M27.4 26.7l1.7 0M35.7 23.1l0 1.6M34.3 20.4l1.8 1.5M20.6 24.2l0.9 1.3M11.9 26.2l-1.1 -1.2M32.1 25.7l1.9 0M14.3 21.6l0 1.7M10.9 29.9l0.4 -1.7M24.7 20.4l0 1.1M21.6 19.4l0 1.3M20.7 30.3l2.5 0M28.6 25.2l0 0.9M10.5 25l0 2.8M12.5 20.1l2.1 0M8 22.8l2.6 0M30.2 29.6l2.9 0M20.8 22.1l0 2.6M26.3 26.3l0.6 -0.8M27.7 30.3l0 2.9M19.1 19.9l2.5 0M21.4 21.8l-1.7 0.7M17.5 26.2l1.4 0M12.7 28.9l1.4 0M24.5 28.2l0 1.8M11.1 28.2l0 2.6M23.5 25l1.4 0M20.2 20.6l0 2.1M25.1 22.6l2.5 0M30.1 18.4l1.2 0M31.5 25.9l2.1 0M22 21.1l-1.9 -2M15.4 20.2l0 2.2M18.3 30.8l0 2.9M36.4 25.4l-1.8 1.8M19.9 22.7l-0.4 -1.7M7.2 28.6l0 2.2M9.1 28.8l-0.6 1.2M33.9 21.4l3 0M35.5 25.6l0.8 0M31.8 30.5l1.3 0M10.3 26.5l2.1 0M32.1 18.9l0 1M15.9 19l0 1.3M31.3 25.1l0 1.9M11.1 31l0 1.3M23.9 29.8l1.1 0M25 27.9l0.6 -1M31.7 27.3l-1.3 1.4M21.1 21.2l0 1M33.8 20.2l1.4 0M14.1 22.9l-1.8 -0.5M16.4 24.6l2.7 0M25.8 29.3l1.3 -2M8.4 25.1l0 1.6M22.6 25.2l1.1 -1.2M23.9 24.5l2.4 0M28.3 27.5l0 1M24.3 21.6l0 1M8.7 24.1l0.5 -1M35.5 20.9l1 0M35.7 30.1l-0.5 -0.2M21.6 30.2l1.3 0M34.1 23.8l1.9 1.1M10.2 28.9l3 0M17.9 20.7l0 3M19.6 18.6l2.9 0M12.9 30.3l-1.2 -1.2M10.8 19.7l0 1.3M30.9 24l2.2 0M10.6 28.3l0 1.9M13.1 21.7l0 1.7M19.7 19.7l-0.7 0.7M12.2 18.9l-1.1 -2.1M34.8 23.8l0 2.2M16.7 30.8l0.7 0.8M16.2 30.1l-1.1 -1.9M8.3 25.1l2.6 0M34.1 23.3l1.7 0M34.1 21.2l0 1.2M34.6 20.6l-1.1 -0.5M11.9 30.9l0 1.2M27.6 24.6l0 1.8M33.7 20.3l1.3 0M21.6 23.3l1.5 0M6.8 21l-0.5 -1.6M9.7 27.7l0 2.9M22.4 19.2l0 2.2M36.6 30.1l0 2.1" stroke="#86705a" stroke-width="0.75" fill="none"/><path d="M34.3 22.1l-1 -0.1M33.4 23.7l1.1 0M35.3 29.5l0 1M20.9 25.2l-0.6 0.3M11.7 22.4l0 1.8M23.5 26.1l-0.7 -0.6M20.6 29.1l0 1.3M19.5 26.8l0 1.1M28.5 25.7l0.8 0M14.3 21.4l0 2.4M36.1 28.2l0 1.8M33.4 23.6l0 2.1M17.1 24.8l0 2.3M22.2 21.4l0 2M10.4 26.6l0 1.8M17.1 26.5l0 1.5M26.3 22.9l1.8 1.7M34.4 29.1l2.3 0M18.9 21.1l1.5 -0.9M18 22.6l-1.2 1.1M8.1 24.2l-0.1 -1.3M7.9 26.7l0 1.3M24.7 23.3l0 2.2M28.3 26.1l0 1.7M35.3 25.2l0 2.5M17.2 25.3l0 2.4M27.1 25.3l1.4 0M20.5 25.2l0 2.1M29.2 20.8l0 2.1M17.2 21.8l2.6 0M17.4 25.9l1.8 0M24.5 28.8l1.4 0.7M29.4 27.4l0.7 0.9M8.7 22l1.6 0M13.7 26.4l0 2.2M16.4 28.8l0 2.5M16.6 27.6l0 1.7M17.5 28.3l0.3 -1.4M22.4 22.7l0 2.1M23 29.6l-1.7 1.6" stroke="#7a634c" stroke-width="1" fill="none"/><path d="M20.9 4.8L21.8 7L23.1 5.2M21.8 7V8.4" fill="none" stroke="#5a4632" stroke-width="0.7"/><text x="21.8" y="10.9" font-family="'Liberation Serif',serif" font-size="2.9" fill="#3a3026" text-anchor="middle" font-weight="bold">Wine House</text><text x="21.8" y="13.4" font-family="'Liberation Serif',serif" font-size="2" fill="#5a4632" text-anchor="middle">· · ·</text><text x="21.6" y="45.4" font-family="'Liberation Serif',serif" font-size="13.8" fill="#a07f35" text-anchor="middle" font-style="italic" letter-spacing="-0.1">Wine</text><text x="21.8" y="51.1" font-family="'Liberation Serif',serif" font-size="3.8" fill="#4a3a2a" text-anchor="middle" letter-spacing="0.42">COLLECTION</text><text x="21.8" y="55.6" font-family="'Liberation Serif',serif" font-size="2.4" fill="#4a3a2a" text-anchor="middle" font-style="italic">vol</text><text x="21.8" y="57.8" font-family="'Liberation Serif',serif" font-size="2.2" fill="#4a3a2a" text-anchor="middle">12</text><text x="21.8" y="62.4" font-family="'Liberation Serif',serif" font-size="3.3" fill="#4b3b2a" text-anchor="middle" font-weight="bold" font-style="italic">Premium quality</text></g>
<path d="M39.5 540V4.5H410.5V540" fill="none" stroke="#222" stroke-width="1" stroke-dasharray="4.2 3.7"/>
<circle cx="37.6" cy="2.9" r="1.5" fill="#000"/>
<circle cx="412.2" cy="2.4" r="1.5" fill="#000"/>
</svg>
    <!-- scrollbar -->
    <div class="abs" style="left:490px;top:94px;width:21px;height:602px;background:#f0f0f0"></div>
    <div class="abs" style="left:492px;top:115px;width:17px;height:114.5px;background:#c1c1c1"></div>
    <svg class="abs" style="left:495px;top:102px" width="11" height="7" viewBox="0 0 11 7"><path d="M0.5 6L5.5 1L10.5 6Z" fill="#a3a3a3"/></svg>
    <svg class="abs" style="left:495px;top:680px" width="11" height="7" viewBox="0 0 11 7"><path d="M0.5 1L5.5 6L10.5 1Z" fill="#505050"/></svg>

    <!-- form -->
    <div class="lbl" style="top:146px">Media size</div>
    <div class="inp" style="left:651px;top:143px;width:227px;padding-left:5px;letter-spacing:-0.42px">1600mm(63in)_AAC_NORMAL - 1582 x 100000
      <span class="abs" style="right:0;top:0;width:22px;height:18px;background:#fff"></span>
      <svg class="abs" style="right:5px;top:5px" width="11" height="8" viewBox="0 0 11 8"><path d="M1 1.5L5.5 6L10 1.5" fill="none" stroke="#3a3a3a" stroke-width="1.9"/></svg>
    </div>

    <div class="lbl" style="top:178px">Width / height</div>
    <div class="inp dis" style="left:651px;top:175px">1582.00</div><div class="unit" style="left:714px;top:178px">mm</div>
    <div class="inp dis" style="left:768px;top:175px;width:60px">100000.00<span class="abs" style="right:0;top:0;width:10px;height:18px;background:#ececec"></span></div><div class="unit" style="left:832px;top:178px">mm</div>

    <div class="lbl" style="top:210px">Scale</div>
    <div class="inp" style="left:651px;top:208px">100</div><div class="unit" style="left:714px;top:210px">%</div>
    <div class="inp" style="left:768px;top:208px;width:60px">100</div><div class="unit" style="left:832px;top:210px">%</div>

    <div class="lbl" style="top:243px">Keep aspect ratio</div>
    <div class="chk" style="left:651px;top:242px"><svg class="abs" style="left:0;top:0" width="13" height="14" viewBox="0 0 13 14"><path d="M2 7L5.4 11.2C7 7 9.2 3.2 12 0.4" fill="none" stroke="#000" stroke-width="1.8"/></svg></div>

    <div class="lbl" style="top:274px">Job width / height</div>
    <div class="inp" style="left:651px;top:271px">655.35</div><div class="unit" style="left:714px;top:274px">mm</div>
    <div class="inp" style="left:768px;top:271px;width:60px">534.29</div><div class="unit" style="left:832px;top:274px">mm</div>

    <div class="lbl" style="top:306px">Rotation</div>
    <div class="inp" style="left:651px;top:304px;padding-left:5px">0
      <svg class="abs" style="right:6px;top:5px" width="11" height="8" viewBox="0 0 11 8"><path d="M1 1.5L5.5 6L10 1.5" fill="none" stroke="#3a3a3a" stroke-width="1.9"/></svg>
    </div>

    <div class="lbl" style="top:339px">Alignment</div>
    <div class="radio" style="left:653px;top:339px"></div><div class="unit" style="left:672px;top:339px">Left</div>
    <div class="radio" style="left:771px;top:339px;border-color:#1a73e8"><span class="abs" style="left:1.5px;top:1.5px;width:6px;height:6px;border-radius:50%;background:#1a73e8"></span></div><div class="unit" style="left:790px;top:339px">Center</div>
    <div class="radio" style="left:889px;top:339px"></div><div class="unit" style="left:907px;top:339px">Right</div>

    <div class="lbl" style="top:368px">Step and repeat</div>
    <div class="chk" style="left:651px;top:367px"><svg class="abs" style="left:0;top:0" width="13" height="14" viewBox="0 0 13 14"><path d="M2 7L5.4 11.2C7 7 9.2 3.2 12 0.4" fill="none" stroke="#000" stroke-width="1.8"/></svg></div>

    <div class="lbl" style="top:400px">Layout copies</div>
    <div class="inp dis" style="left:651px;top:396px;color:#666;padding-left:5px">1</div>

    <div class="lbl" style="top:431px">Copies</div>
    <div class="inp" style="left:651px;top:429px;padding-left:5px">50</div>
    <div class="chk" style="left:768px;top:431px;height:17px;width:17px"></div><div class="unit" style="left:790px;top:431px">Fill roll</div>

    <div class="lbl" style="top:461px;line-height:15px">Horizontal / vertical<br>spacing</div>
    <div class="inp" style="left:651px;top:461px;padding-left:5px">0.00</div><div class="unit" style="left:714px;top:464px">mm</div>
    <div class="inp" style="left:768px;top:461px;width:60px;padding-left:5px">0.00</div><div class="unit" style="left:832px;top:464px">mm</div>

    <div class="lbl" style="top:505px">Order</div>
    <div class="inp" style="left:651px;top:502px;padding-left:5px">Left-right
      <span class="abs" style="right:0;top:0;width:23px;height:18px;background:#fff"></span>
      <svg class="abs" style="right:6px;top:5px" width="11" height="8" viewBox="0 0 11 8"><path d="M1 1.5L5.5 6L10 1.5" fill="none" stroke="#3a3a3a" stroke-width="1.9"/></svg>
    </div>

    <div class="abs" style="left:518px;top:529px;width:139px;height:39px;border:3px solid #f9060e"></div>
    <div class="btn" style="left:525px;top:535px;width:125px;height:26px;line-height:24px;border-color:#9c9c9c">Confirm settings</div>
  </div>
</div>
<!-- active tab drawn over the panel border -->
<div class="tab tl" style="left:341px;width:111px;height:29px;background:#fff;border:1px solid #777;color:#111;padding-left:25px;line-height:26px;letter-spacing:-0.1px"><i style="background:#f6c940;height:27px"></i>Media layout</div>

</body></html>
